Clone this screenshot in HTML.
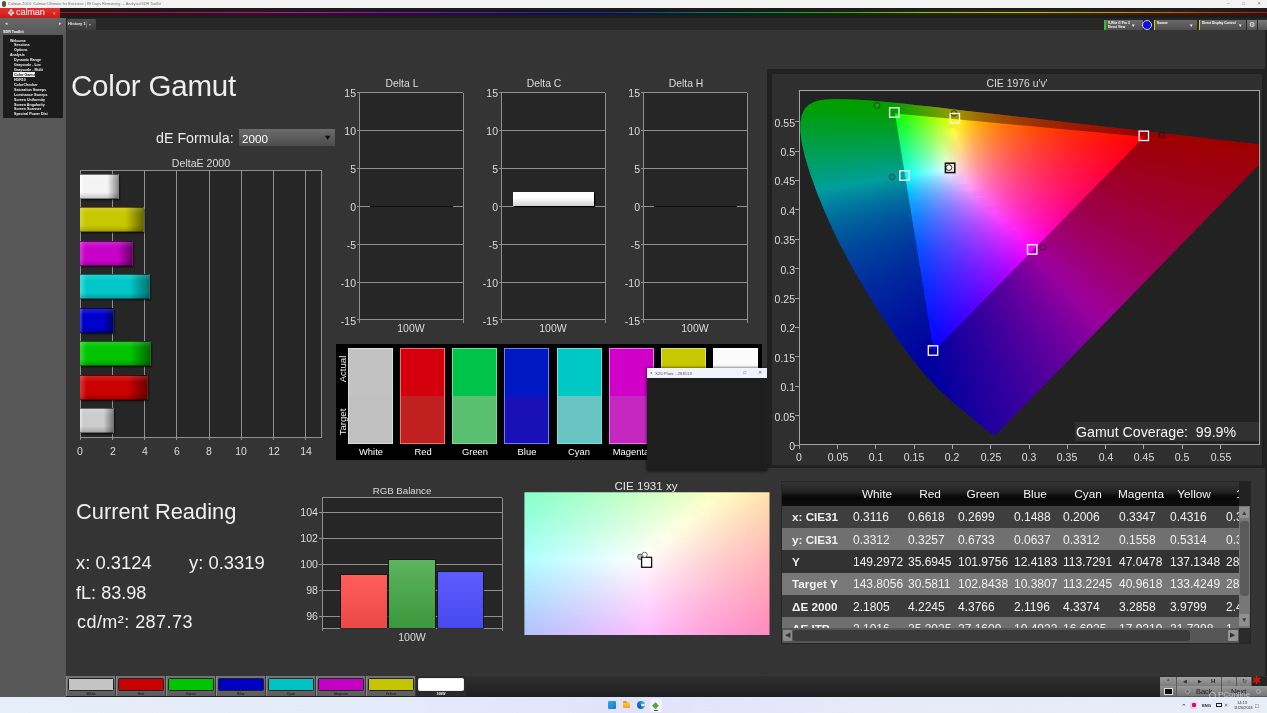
<!DOCTYPE html>
<html><head><meta charset="utf-8"><title>Color Gamut</title><style>
*{box-sizing:border-box;margin:0;padding:0}
html,body{width:1267px;height:713px;overflow:hidden;background:#343434}
body{position:relative;font-family:"Liberation Sans",sans-serif;color:#e8e8e8}
.abs,.t,.b{position:absolute}
.t,.ts{white-space:nowrap;line-height:1;transform-origin:0 0}
.t{will-change:transform}
.ts{position:absolute}
.c{transform:translateX(-50%)}
.r{transform:translateX(-100%)}
svg{overflow:visible}
</style></head><body>
<div class="b" style="left:0.0px;top:0.0px;width:1267.0px;height:8.0px;background:#f3f3f3;"></div>
<div class="b" style="left:1.6px;top:1.4px;width:4.2px;height:5.2px;background:#5a5040;border-radius:2px"></div>
<div class="ts" style="left:7.5px;top:1.9px;font-size:15.4px;color:#777;transform:scale(.25);">Calman 2024: Calman Ultimate for Business | 89 Days Remaining &nbsp;-&nbsp; Analysis/SDR Toolkit</div>
<div class="ts" style="left:1227.0px;top:0.3px;font-size:22.0px;color:#888;transform:scale(.25);">&#8211;</div>
<div class="ts" style="left:1241.5px;top:0.6px;font-size:20.0px;color:#888;transform:scale(.25);">&#9633;</div>
<div class="ts" style="left:1256.5px;top:0.8px;font-size:18.4px;color:#888;transform:scale(.25);">&#10005;</div>
<div class="b" style="left:0.0px;top:8.0px;width:1267.0px;height:10.0px;background:#1c1c1c;"></div>
<div class="b" style="left:60.0px;top:10.2px;width:1207.0px;height:5.0px;background:linear-gradient(90deg,#3a0a10 0%,#3a0a28 15%,#30083a 25%,#120a38 40%,#081828 50%,#082810 60%,#28300a 72%,#38300a 82%,#40200a 92%,#400a0a 100%);filter:blur(.6px);opacity:.55"></div>
<div class="b" style="left:60.0px;top:11.7px;width:1207.0px;height:1.5px;background:linear-gradient(90deg,#a01428 0%,#b01050 8%,#c010a0 20%,#8a10b0 29%,#3a20b0 38%,#10309a 45%,#0a6a70 52%,#109a30 59%,#30b010 65%,#a0c010 72%,#c8c010 80%,#c89010 88%,#c04010 95%,#b01818 100%);"></div>
<div class="b" style="left:0.0px;top:8.0px;width:60.0px;height:10.3px;background:linear-gradient(#e83030,#c81c1c);"></div>
<div class="t " style="left:6.8px;top:8.6px;font-size:8.6px;color:#ffe8e8;">&#10070;</div>
<div class="t " style="left:16.2px;top:8.1px;font-size:9.2px;color:#fff;letter-spacing:-.15px">calman</div>
<div class="ts" style="left:52.5px;top:10.5px;font-size:18.0px;color:#ff9a9a;transform:scale(.25);">&#9662;</div>
<div class="b" style="left:0.0px;top:18.3px;width:1267.0px;height:11.7px;background:#262626;"></div>
<div class="b" style="left:66.7px;top:19.2px;width:29.5px;height:10.8px;background:linear-gradient(#505050,#3a3a3a);border-radius:2px 2px 0 0"></div>
<div class="ts" style="left:68.2px;top:22.0px;font-size:16.8px;color:#eee;transform:scale(.25);font-weight:bold">History 1</div>
<div class="b" style="left:85.7px;top:21.0px;width:0.6px;height:7.0px;background:#777;"></div>
<div class="ts" style="left:88.5px;top:22.5px;font-size:14.0px;color:#aaa;transform:scale(.25);">&#9662;</div>
<div class="b" style="left:1104.0px;top:19.5px;width:39.0px;height:10.0px;background:linear-gradient(#6a6a6a,#4e4e4e);border-left:2px solid #30c030"></div>
<div class="ts" style="left:1107.8px;top:20.5px;font-size:12.8px;color:#fff;transform:scale(.25);font-weight:bold">X-Rite i1 Pro 2</div>
<div class="ts" style="left:1107.8px;top:25.2px;font-size:12.8px;color:#fff;transform:scale(.25);font-weight:bold">Direct View</div>
<div class="ts" style="left:1132.3px;top:22.5px;font-size:20.0px;color:#eee;transform:scale(.25);">&#9662;</div>
<div class="b" style="left:1141.5px;top:19.5px;width:10.5px;height:10.5px;border-radius:50%;background:#1010e0;border:1px solid #cfd0ff"></div>
<div class="b" style="left:1154.0px;top:19.5px;width:43.0px;height:10.0px;background:linear-gradient(#6a6a6a,#4e4e4e);border-left:1.5px solid #d0d020"></div>
<div class="ts" style="left:1157.0px;top:20.5px;font-size:12.8px;color:#fff;transform:scale(.25);font-weight:bold">Source</div>
<div class="ts" style="left:1190.0px;top:22.5px;font-size:20.0px;color:#eee;transform:scale(.25);">&#9662;</div>
<div class="b" style="left:1198.5px;top:19.5px;width:47.0px;height:10.0px;background:linear-gradient(#6a6a6a,#4e4e4e);border-left:1.5px solid #d0d020"></div>
<div class="ts" style="left:1202.0px;top:20.5px;font-size:12.8px;color:#fff;transform:scale(.25);font-weight:bold">Direct Display Control</div>
<div class="ts" style="left:1239.0px;top:22.5px;font-size:20.0px;color:#eee;transform:scale(.25);">&#9662;</div>
<div class="b" style="left:1247.0px;top:19.5px;width:10.0px;height:10.0px;background:linear-gradient(#7a7a7a,#555);"></div>
<div class="t " style="left:1249.0px;top:20.5px;font-size:7px;color:#eee;">&#9881;</div>
<div class="b" style="left:1258.0px;top:19.5px;width:9.0px;height:10.0px;background:linear-gradient(#7a7a7a,#555);"></div>
<div class="b" style="left:0.0px;top:18.3px;width:65.5px;height:678.4px;background:#575757;"></div>
<div class="b" style="left:0.0px;top:18.3px;width:65.5px;height:16.0px;background:linear-gradient(#686868,#585858);"></div>
<div class="ts" style="left:4.5px;top:21.2px;font-size:18.0px;color:#ddd;transform:scale(.25);">&#9666;</div>
<div class="ts" style="left:58.5px;top:21.2px;font-size:18.0px;color:#ddd;transform:scale(.25);">&#9656;</div>
<div class="ts" style="left:3.0px;top:30.4px;font-size:14.8px;color:#fff;transform:scale(.25);font-weight:bold">SDR Toolkit</div>
<div class="b" style="left:2.8px;top:35.0px;width:60.0px;height:82.6px;background:#1c1c1c;"></div>
<div class="ts" style="left:10.1px;top:38.5px;font-size:14.4px;color:#f4f4f4;transform:scale(.25);font-weight:bold">Welcome</div>
<div class="ts" style="left:13.9px;top:43.4px;font-size:14.4px;color:#f4f4f4;transform:scale(.25);font-weight:bold">Sessions</div>
<div class="ts" style="left:13.9px;top:48.3px;font-size:14.4px;color:#f4f4f4;transform:scale(.25);font-weight:bold">Options</div>
<div class="ts" style="left:10.1px;top:53.3px;font-size:14.4px;color:#f4f4f4;transform:scale(.25);font-weight:bold">Analysis</div>
<div class="ts" style="left:13.9px;top:58.2px;font-size:14.4px;color:#f4f4f4;transform:scale(.25);font-weight:bold">Dynamic Range</div>
<div class="ts" style="left:13.9px;top:63.1px;font-size:14.4px;color:#f4f4f4;transform:scale(.25);font-weight:bold">Grayscale - Lux</div>
<div class="ts" style="left:13.9px;top:68.0px;font-size:14.4px;color:#f4f4f4;transform:scale(.25);font-weight:bold">Grayscale - Multi</div>
<div class="b" style="left:13.1px;top:72.1px;width:21.7px;height:4.9px;background:#f0f0f0;"></div>
<div class="ts" style="left:13.9px;top:72.9px;font-size:14.4px;color:#1a1a1a;transform:scale(.25);font-weight:bold">Color Gamut</div>
<div class="ts" style="left:13.9px;top:77.9px;font-size:14.4px;color:#f4f4f4;transform:scale(.25);font-weight:bold">HDR10</div>
<div class="ts" style="left:13.9px;top:82.8px;font-size:14.4px;color:#f4f4f4;transform:scale(.25);font-weight:bold">ColorChecker</div>
<div class="ts" style="left:13.9px;top:87.7px;font-size:14.4px;color:#f4f4f4;transform:scale(.25);font-weight:bold">Saturation Sweeps</div>
<div class="ts" style="left:13.9px;top:92.6px;font-size:14.4px;color:#f4f4f4;transform:scale(.25);font-weight:bold">Luminance Sweeps</div>
<div class="ts" style="left:13.9px;top:97.5px;font-size:14.4px;color:#f4f4f4;transform:scale(.25);font-weight:bold">Screen Uniformity</div>
<div class="ts" style="left:13.9px;top:102.5px;font-size:14.4px;color:#f4f4f4;transform:scale(.25);font-weight:bold">Screen Angularity</div>
<div class="ts" style="left:13.9px;top:107.4px;font-size:14.4px;color:#f4f4f4;transform:scale(.25);font-weight:bold">Screen Scanner</div>
<div class="ts" style="left:13.9px;top:112.3px;font-size:14.4px;color:#f4f4f4;transform:scale(.25);font-weight:bold">Spectral Power Dist</div>
<div class="b" style="left:1265.3px;top:30.0px;width:1.7px;height:646.0px;background:#222;"></div>
<div class="t " style="left:71.3px;top:70.5px;font-size:29.5px;color:#eeeeee;letter-spacing:-.2px">Color Gamut</div>
<div class="t " style="left:155.6px;top:131.0px;font-size:14.25px;color:#ececec;">dE Formula:</div>
<div class="b" style="left:239.0px;top:129.0px;width:96.0px;height:16.6px;background:linear-gradient(#6c6c6c,#4c4c4c);"></div>
<div class="t " style="left:242.0px;top:133.2px;font-size:11.7px;color:#fff;">2000</div>
<div class="t " style="left:323.2px;top:133.8px;font-size:9.5px;color:#0c0c0c;transform:scaleY(.7)">&#9660;</div>
<div class="t c" style="left:201.0px;top:157.6px;font-size:10.6px;color:#dcdcdc;">DeltaE 2000</div>
<div class="b" style="left:80.3px;top:170.2px;width:241.6px;height:267.1px;background:#262626;"></div>
<div class="b" style="left:79.8px;top:170.2px;width:1.0px;height:270.1px;background:#909090;"></div>
<div class="t c" style="left:80.3px;top:445.6px;font-size:10.5px;color:#dcdcdc;">0</div>
<div class="b" style="left:112.0px;top:170.2px;width:1.0px;height:270.1px;background:#909090;"></div>
<div class="t c" style="left:112.5px;top:445.6px;font-size:10.5px;color:#dcdcdc;">2</div>
<div class="b" style="left:144.2px;top:170.2px;width:1.0px;height:270.1px;background:#909090;"></div>
<div class="t c" style="left:144.7px;top:445.6px;font-size:10.5px;color:#dcdcdc;">4</div>
<div class="b" style="left:176.4px;top:170.2px;width:1.0px;height:270.1px;background:#909090;"></div>
<div class="t c" style="left:176.9px;top:445.6px;font-size:10.5px;color:#dcdcdc;">6</div>
<div class="b" style="left:208.6px;top:170.2px;width:1.0px;height:270.1px;background:#909090;"></div>
<div class="t c" style="left:209.1px;top:445.6px;font-size:10.5px;color:#dcdcdc;">8</div>
<div class="b" style="left:240.8px;top:170.2px;width:1.0px;height:270.1px;background:#909090;"></div>
<div class="t c" style="left:241.3px;top:445.6px;font-size:10.5px;color:#dcdcdc;">10</div>
<div class="b" style="left:273.0px;top:170.2px;width:1.0px;height:270.1px;background:#909090;"></div>
<div class="t c" style="left:273.5px;top:445.6px;font-size:10.5px;color:#dcdcdc;">12</div>
<div class="b" style="left:305.2px;top:170.2px;width:1.0px;height:270.1px;background:#909090;"></div>
<div class="t c" style="left:305.7px;top:445.6px;font-size:10.5px;color:#dcdcdc;">14</div>
<div class="b" style="left:80.3px;top:169.7px;width:241.6px;height:1.0px;background:#909090;"></div>
<div class="b" style="left:80.3px;top:436.8px;width:241.6px;height:1.0px;background:#909090;"></div>
<div class="b" style="left:321.4px;top:170.2px;width:1.0px;height:267.1px;background:#909090;"></div>
<div class="b" style="left:80.3px;top:173.6px;width:39.0px;height:25px;background:linear-gradient(90deg,#ffffff 0%,#f4f4f4 10%,#f4f4f4 72%,#8a8a8a 100%);border:1px solid rgba(0,0,0,.5);border-left:none;box-shadow:1px 1.5px 1.5px rgba(0,0,0,.6)"><div style="position:absolute;inset:0;background:linear-gradient(rgba(255,255,255,.14),rgba(255,255,255,0) 25%,rgba(0,0,0,0) 75%,rgba(0,0,0,.18))"></div></div>
<div class="b" style="left:80.3px;top:207.1px;width:64.1px;height:25px;background:linear-gradient(90deg,#d4d430 0%,#c8c800 10%,#c8c800 72%,#6a6a00 100%);border:1px solid rgba(0,0,0,.5);border-left:none;box-shadow:1px 1.5px 1.5px rgba(0,0,0,.6)"><div style="position:absolute;inset:0;background:linear-gradient(rgba(255,255,255,.14),rgba(255,255,255,0) 25%,rgba(0,0,0,0) 75%,rgba(0,0,0,.18))"></div></div>
<div class="b" style="left:80.3px;top:240.7px;width:53.0px;height:25px;background:linear-gradient(90deg,#d838d8 0%,#c800c8 10%,#c800c8 72%,#6c006c 100%);border:1px solid rgba(0,0,0,.5);border-left:none;box-shadow:1px 1.5px 1.5px rgba(0,0,0,.6)"><div style="position:absolute;inset:0;background:linear-gradient(rgba(255,255,255,.14),rgba(255,255,255,0) 25%,rgba(0,0,0,0) 75%,rgba(0,0,0,.18))"></div></div>
<div class="b" style="left:80.3px;top:274.2px;width:69.9px;height:25px;background:linear-gradient(90deg,#40dcdc 0%,#00c8c8 10%,#00c8c8 72%,#007474 100%);border:1px solid rgba(0,0,0,.5);border-left:none;box-shadow:1px 1.5px 1.5px rgba(0,0,0,.6)"><div style="position:absolute;inset:0;background:linear-gradient(rgba(255,255,255,.14),rgba(255,255,255,0) 25%,rgba(0,0,0,0) 75%,rgba(0,0,0,.18))"></div></div>
<div class="b" style="left:80.3px;top:307.8px;width:34.1px;height:25px;background:linear-gradient(90deg,#4848e0 0%,#0000cc 10%,#0000cc 72%,#00006c 100%);border:1px solid rgba(0,0,0,.5);border-left:none;box-shadow:1px 1.5px 1.5px rgba(0,0,0,.6)"><div style="position:absolute;inset:0;background:linear-gradient(rgba(255,255,255,.14),rgba(255,255,255,0) 25%,rgba(0,0,0,0) 75%,rgba(0,0,0,.18))"></div></div>
<div class="b" style="left:80.3px;top:341.4px;width:70.5px;height:25px;background:linear-gradient(90deg,#38d838 0%,#00c400 10%,#00c400 72%,#006a00 100%);border:1px solid rgba(0,0,0,.5);border-left:none;box-shadow:1px 1.5px 1.5px rgba(0,0,0,.6)"><div style="position:absolute;inset:0;background:linear-gradient(rgba(255,255,255,.14),rgba(255,255,255,0) 25%,rgba(0,0,0,0) 75%,rgba(0,0,0,.18))"></div></div>
<div class="b" style="left:80.3px;top:374.9px;width:67.9px;height:25px;background:linear-gradient(90deg,#dc3838 0%,#cc0000 10%,#cc0000 72%,#6c0000 100%);border:1px solid rgba(0,0,0,.5);border-left:none;box-shadow:1px 1.5px 1.5px rgba(0,0,0,.6)"><div style="position:absolute;inset:0;background:linear-gradient(rgba(255,255,255,.14),rgba(255,255,255,0) 25%,rgba(0,0,0,0) 75%,rgba(0,0,0,.18))"></div></div>
<div class="b" style="left:80.3px;top:408.4px;width:34.1px;height:25px;background:linear-gradient(90deg,#e8e8e8 0%,#cccccc 10%,#cccccc 72%,#7a7a7a 100%);border:1px solid rgba(0,0,0,.5);border-left:none;box-shadow:1px 1.5px 1.5px rgba(0,0,0,.6)"><div style="position:absolute;inset:0;background:linear-gradient(rgba(255,255,255,.14),rgba(255,255,255,0) 25%,rgba(0,0,0,0) 75%,rgba(0,0,0,.18))"></div></div>
<div class="b" style="left:359.5px;top:92.7px;width:103.8px;height:227.2px;background:#262626;"></div>
<div class="t c" style="left:402.4px;top:79.0px;font-size:10.4px;color:#dcdcdc;">Delta L</div>
<div class="b" style="left:356.5px;top:92.2px;width:106.8px;height:1.0px;background:#909090;"></div>
<div class="t r" style="left:355.5px;top:88.3px;font-size:10.5px;color:#dcdcdc;">15</div>
<div class="b" style="left:356.5px;top:130.1px;width:106.8px;height:1.0px;background:#909090;"></div>
<div class="t r" style="left:355.5px;top:126.2px;font-size:10.5px;color:#dcdcdc;">10</div>
<div class="b" style="left:356.5px;top:167.9px;width:106.8px;height:1.0px;background:#909090;"></div>
<div class="t r" style="left:355.5px;top:164.0px;font-size:10.5px;color:#dcdcdc;">5</div>
<div class="b" style="left:356.5px;top:205.8px;width:106.8px;height:1.0px;background:#909090;"></div>
<div class="t r" style="left:355.5px;top:201.9px;font-size:10.5px;color:#dcdcdc;">0</div>
<div class="b" style="left:356.5px;top:243.7px;width:106.8px;height:1.0px;background:#909090;"></div>
<div class="t r" style="left:355.5px;top:239.8px;font-size:10.5px;color:#dcdcdc;">-5</div>
<div class="b" style="left:356.5px;top:281.5px;width:106.8px;height:1.0px;background:#909090;"></div>
<div class="t r" style="left:355.5px;top:277.6px;font-size:10.5px;color:#dcdcdc;">-10</div>
<div class="b" style="left:356.5px;top:319.4px;width:106.8px;height:1.0px;background:#909090;"></div>
<div class="t r" style="left:355.5px;top:315.5px;font-size:10.5px;color:#dcdcdc;">-15</div>
<div class="b" style="left:359.0px;top:92.7px;width:1.0px;height:230.2px;background:#909090;"></div>
<div class="b" style="left:462.8px;top:92.7px;width:1.0px;height:230.2px;background:#909090;"></div>
<div class="t c" style="left:411.4px;top:323.0px;font-size:10.5px;color:#dcdcdc;">100W</div>
<div class="b" style="left:369.8px;top:205.6px;width:83.2px;height:1.6px;background:#0c0c0c;"></div>
<div class="b" style="left:501.5px;top:92.7px;width:103.8px;height:227.2px;background:#262626;"></div>
<div class="t c" style="left:544.4px;top:79.0px;font-size:10.4px;color:#dcdcdc;">Delta C</div>
<div class="b" style="left:498.5px;top:92.2px;width:106.8px;height:1.0px;background:#909090;"></div>
<div class="t r" style="left:497.5px;top:88.3px;font-size:10.5px;color:#dcdcdc;">15</div>
<div class="b" style="left:498.5px;top:130.1px;width:106.8px;height:1.0px;background:#909090;"></div>
<div class="t r" style="left:497.5px;top:126.2px;font-size:10.5px;color:#dcdcdc;">10</div>
<div class="b" style="left:498.5px;top:167.9px;width:106.8px;height:1.0px;background:#909090;"></div>
<div class="t r" style="left:497.5px;top:164.0px;font-size:10.5px;color:#dcdcdc;">5</div>
<div class="b" style="left:498.5px;top:205.8px;width:106.8px;height:1.0px;background:#909090;"></div>
<div class="t r" style="left:497.5px;top:201.9px;font-size:10.5px;color:#dcdcdc;">0</div>
<div class="b" style="left:498.5px;top:243.7px;width:106.8px;height:1.0px;background:#909090;"></div>
<div class="t r" style="left:497.5px;top:239.8px;font-size:10.5px;color:#dcdcdc;">-5</div>
<div class="b" style="left:498.5px;top:281.5px;width:106.8px;height:1.0px;background:#909090;"></div>
<div class="t r" style="left:497.5px;top:277.6px;font-size:10.5px;color:#dcdcdc;">-10</div>
<div class="b" style="left:498.5px;top:319.4px;width:106.8px;height:1.0px;background:#909090;"></div>
<div class="t r" style="left:497.5px;top:315.5px;font-size:10.5px;color:#dcdcdc;">-15</div>
<div class="b" style="left:501.0px;top:92.7px;width:1.0px;height:230.2px;background:#909090;"></div>
<div class="b" style="left:604.8px;top:92.7px;width:1.0px;height:230.2px;background:#909090;"></div>
<div class="t c" style="left:553.4px;top:323.0px;font-size:10.5px;color:#dcdcdc;">100W</div>
<div class="b" style="left:512.9px;top:191.9px;width:81px;height:14.4px;background:linear-gradient(#fff 40%,#d0d0d0);box-shadow:1px 1px 1px #000"></div>
<div class="b" style="left:643.5px;top:92.7px;width:103.8px;height:227.2px;background:#262626;"></div>
<div class="t c" style="left:686.4px;top:79.0px;font-size:10.4px;color:#dcdcdc;">Delta H</div>
<div class="b" style="left:640.5px;top:92.2px;width:106.8px;height:1.0px;background:#909090;"></div>
<div class="t r" style="left:639.5px;top:88.3px;font-size:10.5px;color:#dcdcdc;">15</div>
<div class="b" style="left:640.5px;top:130.1px;width:106.8px;height:1.0px;background:#909090;"></div>
<div class="t r" style="left:639.5px;top:126.2px;font-size:10.5px;color:#dcdcdc;">10</div>
<div class="b" style="left:640.5px;top:167.9px;width:106.8px;height:1.0px;background:#909090;"></div>
<div class="t r" style="left:639.5px;top:164.0px;font-size:10.5px;color:#dcdcdc;">5</div>
<div class="b" style="left:640.5px;top:205.8px;width:106.8px;height:1.0px;background:#909090;"></div>
<div class="t r" style="left:639.5px;top:201.9px;font-size:10.5px;color:#dcdcdc;">0</div>
<div class="b" style="left:640.5px;top:243.7px;width:106.8px;height:1.0px;background:#909090;"></div>
<div class="t r" style="left:639.5px;top:239.8px;font-size:10.5px;color:#dcdcdc;">-5</div>
<div class="b" style="left:640.5px;top:281.5px;width:106.8px;height:1.0px;background:#909090;"></div>
<div class="t r" style="left:639.5px;top:277.6px;font-size:10.5px;color:#dcdcdc;">-10</div>
<div class="b" style="left:640.5px;top:319.4px;width:106.8px;height:1.0px;background:#909090;"></div>
<div class="t r" style="left:639.5px;top:315.5px;font-size:10.5px;color:#dcdcdc;">-15</div>
<div class="b" style="left:643.0px;top:92.7px;width:1.0px;height:230.2px;background:#909090;"></div>
<div class="b" style="left:746.8px;top:92.7px;width:1.0px;height:230.2px;background:#909090;"></div>
<div class="t c" style="left:695.4px;top:323.0px;font-size:10.5px;color:#dcdcdc;">100W</div>
<div class="b" style="left:653.8px;top:205.6px;width:83.2px;height:1.6px;background:#0c0c0c;"></div>
<div class="b" style="left:336.4px;top:343.9px;width:425.3px;height:116.1px;background:#000;"></div>
<div class="b" style="left:348.0px;top:348.3px;width:45px;height:95.8px;background:linear-gradient(#c2c2c2 50%,#c0c0c0 50%);border:1px solid #dcdcdc"></div>
<div class="t c" style="left:370.5px;top:447.2px;font-size:9.4px;color:#ffffff;">White</div>
<div class="b" style="left:400.1px;top:348.3px;width:45px;height:95.8px;background:linear-gradient(#d4000e 50%,#c02020 50%);border:1px solid #f07070"></div>
<div class="t c" style="left:422.6px;top:447.2px;font-size:9.4px;color:#ffffff;">Red</div>
<div class="b" style="left:452.3px;top:348.3px;width:45px;height:95.8px;background:linear-gradient(#00c44a 50%,#58c070 50%);border:1px solid #70e090"></div>
<div class="t c" style="left:474.8px;top:447.2px;font-size:9.4px;color:#ffffff;">Green</div>
<div class="b" style="left:504.4px;top:348.3px;width:45px;height:95.8px;background:linear-gradient(#0018c4 50%,#1a10b8 50%);border:1px solid #7080f0"></div>
<div class="t c" style="left:527.0px;top:447.2px;font-size:9.4px;color:#ffffff;">Blue</div>
<div class="b" style="left:556.6px;top:348.3px;width:45px;height:95.8px;background:linear-gradient(#00c8c4 50%,#68c4c0 50%);border:1px solid #70e0e0"></div>
<div class="t c" style="left:579.1px;top:447.2px;font-size:9.4px;color:#ffffff;">Cyan</div>
<div class="b" style="left:608.8px;top:348.3px;width:45px;height:95.8px;background:linear-gradient(#d000c8 50%,#c428c0 50%);border:1px solid #f070f0"></div>
<div class="t c" style="left:631.2px;top:447.2px;font-size:9.4px;color:#ffffff;">Magenta</div>
<div class="b" style="left:660.9px;top:348.3px;width:45px;height:95.8px;background:linear-gradient(#c8c800 50%,#c0c040 50%);border:1px solid #e0e070"></div>
<div class="t c" style="left:683.4px;top:447.2px;font-size:9.4px;color:#ffffff;">Yellow</div>
<div class="b" style="left:713.0px;top:348.3px;width:45px;height:95.8px;background:linear-gradient(#fbfbfb 50%,#f0f0f0 50%);border:1px solid #ffffff"></div>
<div class="t c" style="left:735.5px;top:447.2px;font-size:9.4px;color:#ffffff;">100W</div>
<div class="t" style="left:337.5px;top:384.5px;font-size:9.6px;color:#f0f0f0;transform:rotate(-90deg);transform-origin:0 0;width:32px;text-align:center">Actual</div>
<div class="t" style="left:337.5px;top:438px;font-size:9.6px;color:#f0f0f0;transform:rotate(-90deg);transform-origin:0 0;width:32px;text-align:center">Target</div>
<div class="b" style="left:647.0px;top:367.5px;width:120.0px;height:103.2px;background:#1e1e1e;box-shadow:0 0 3px rgba(0,0,0,.8)"></div>
<div class="b" style="left:647.0px;top:367.5px;width:120.0px;height:10.2px;background:#f0f3fa;"></div>
<div class="ts" style="left:650.0px;top:370.8px;font-size:16.0px;color:#6a8a30;transform:scale(.25);">&#9679;</div>
<div class="ts" style="left:655.0px;top:370.8px;font-size:17.2px;color:#555;transform:scale(.25);">X20 Plate - 283513</div>
<div class="ts" style="left:742.5px;top:370.0px;font-size:20.0px;color:#555;transform:scale(.25);">&#9633;</div>
<div class="ts" style="left:757.5px;top:370.0px;font-size:20.0px;color:#666;transform:scale(.25);">&#10005;</div>
<div class="b" style="left:766.5px;top:68.8px;width:499.0px;height:399.5px;background:#202020;"></div>
<div class="b" style="left:771.7px;top:73.6px;width:490.5px;height:391.8px;background:#2f2f2f;"></div>
<div class="t c" style="left:1017.0px;top:79.2px;font-size:10.4px;color:#dcdcdc;">CIE 1976 u'v'</div>
<div class="b" style="left:799.2px;top:90.3px;width:460.4px;height:353.9px;background:#222;"></div>
<svg class="abs" style="left:0;top:0" width="1267" height="713" viewBox="0 0 1267 713">
<defs>
<clipPath id="plot"><rect x="799.2" y="90.3" width="460.39999999999986" height="353.9"/></clipPath>
<clipPath id="hs"><polygon points="996.0,434.5 995.9,434.5 995.8,434.5 995.7,434.6 995.5,434.6 995.3,434.6 995.2,434.8 995.1,434.9 994.8,434.9 994.5,434.9 994.1,434.8 993.8,434.8 993.3,434.7 992.7,434.4 991.7,433.8 990.4,433.0 988.9,431.8 987.0,430.4 984.7,428.5 982.1,426.3 979.0,423.7 975.5,420.7 971.3,417.3 966.5,413.3 961.0,408.8 954.9,403.7 948.0,397.6 940.3,390.5 931.8,381.8 921.6,370.4 909.6,355.4 896.4,337.6 882.2,316.7 867.5,293.2 852.9,268.2 839.1,242.7 827.4,217.8 817.8,194.7 810.3,174.1 805.0,156.7 801.8,142.5 800.4,131.1 800.5,122.0 802.0,114.7 804.7,109.1 808.6,104.9 813.4,102.2 818.8,100.6 824.7,99.7 831.0,99.3 837.6,99.2 844.1,99.2 850.7,99.4 857.5,99.7 864.7,100.2 872.2,100.7 880.0,101.4 888.4,102.2 897.2,103.1 906.5,104.1 916.5,105.2 927.1,106.3 938.3,107.6 950.2,108.9 962.9,110.4 976.3,111.9 990.4,113.5 1005.2,115.2 1020.6,117.0 1036.6,118.8 1053.1,120.7 1070.0,122.7 1086.7,124.6 1102.9,126.5 1119.0,128.3 1134.7,130.1 1149.3,131.8 1163.0,133.3 1175.7,134.8 1187.3,136.1 1197.7,137.3 1207.1,138.4 1215.5,139.4 1223.1,140.2 1230.1,141.0 1236.5,141.8 1242.3,142.4 1247.5,143.0 1252.0,143.5 1255.9,144.0 1259.2,144.4 1262.0,144.7 1264.4,145.0 1266.5,145.2 1268.1,145.4 1269.3,145.5 1270.5,145.7 1271.5,145.8 1272.4,145.9 1273.2,146.0 1274.1,146.1 1274.9,146.2 1275.6,146.3 1276.0,146.3 1276.3,146.3 1276.5,146.4 1276.7,146.4"/></clipPath>
<linearGradient id="g0"><stop offset="0" stop-color="#00ff00"/><stop offset="0.333" stop-color="#00ff00"/><stop offset="0.667" stop-color="#00ff00"/><stop offset="1" stop-color="#00ff00"/></linearGradient>
<linearGradient id="g1"><stop offset="0" stop-color="#00ff00"/><stop offset="0.2" stop-color="#00ff00"/><stop offset="0.4" stop-color="#00ff00"/><stop offset="0.6" stop-color="#00ff00"/><stop offset="0.8" stop-color="#00ff00"/><stop offset="1" stop-color="#00ff00"/></linearGradient>
<linearGradient id="g2"><stop offset="0" stop-color="#00ff00"/><stop offset="0.143" stop-color="#00ff00"/><stop offset="0.286" stop-color="#00ff00"/><stop offset="0.429" stop-color="#00ff00"/><stop offset="0.571" stop-color="#00ff00"/><stop offset="0.714" stop-color="#00ff00"/><stop offset="0.857" stop-color="#03ff00"/><stop offset="1" stop-color="#3cff00"/></linearGradient>
<linearGradient id="g3"><stop offset="0" stop-color="#00ff00"/><stop offset="0.125" stop-color="#00ff00"/><stop offset="0.25" stop-color="#00ff00"/><stop offset="0.375" stop-color="#00ff00"/><stop offset="0.5" stop-color="#00ff00"/><stop offset="0.625" stop-color="#00ff00"/><stop offset="0.75" stop-color="#0cff00"/><stop offset="0.875" stop-color="#47ff00"/><stop offset="1" stop-color="#7fff00"/></linearGradient>
<linearGradient id="g4"><stop offset="0" stop-color="#00ff08"/><stop offset="0.111" stop-color="#00ff03"/><stop offset="0.222" stop-color="#00ff00"/><stop offset="0.333" stop-color="#00ff00"/><stop offset="0.444" stop-color="#00ff00"/><stop offset="0.556" stop-color="#00ff00"/><stop offset="0.667" stop-color="#11ff00"/><stop offset="0.778" stop-color="#4dff00"/><stop offset="0.889" stop-color="#89ff00"/><stop offset="1" stop-color="#c8ff00"/></linearGradient>
<linearGradient id="g5"><stop offset="0" stop-color="#00ff0e"/><stop offset="0.1" stop-color="#00ff0a"/><stop offset="0.2" stop-color="#00ff05"/><stop offset="0.3" stop-color="#00ff00"/><stop offset="0.4" stop-color="#00ff00"/><stop offset="0.5" stop-color="#00ff00"/><stop offset="0.6" stop-color="#12ff00"/><stop offset="0.7" stop-color="#51ff00"/><stop offset="0.8" stop-color="#8fff00"/><stop offset="0.9" stop-color="#d1ff00"/><stop offset="1" stop-color="#ffe700"/></linearGradient>
<linearGradient id="g6"><stop offset="0" stop-color="#00ff15"/><stop offset="0.0833" stop-color="#00ff11"/><stop offset="0.167" stop-color="#00ff0d"/><stop offset="0.25" stop-color="#00ff09"/><stop offset="0.333" stop-color="#00ff04"/><stop offset="0.417" stop-color="#00ff00"/><stop offset="0.5" stop-color="#00ff00"/><stop offset="0.583" stop-color="#2dff00"/><stop offset="0.667" stop-color="#66ff00"/><stop offset="0.75" stop-color="#a1ff00"/><stop offset="0.833" stop-color="#e0ff00"/><stop offset="0.917" stop-color="#ffde00"/><stop offset="1" stop-color="#ffb000"/></linearGradient>
<linearGradient id="g7"><stop offset="0" stop-color="#00ff1a"/><stop offset="0.0769" stop-color="#00ff17"/><stop offset="0.154" stop-color="#00ff14"/><stop offset="0.231" stop-color="#00ff10"/><stop offset="0.308" stop-color="#00ff0c"/><stop offset="0.385" stop-color="#00ff06"/><stop offset="0.462" stop-color="#00ff00"/><stop offset="0.538" stop-color="#32ff00"/><stop offset="0.615" stop-color="#6dff00"/><stop offset="0.692" stop-color="#aaff00"/><stop offset="0.769" stop-color="#ecff00"/><stop offset="0.846" stop-color="#ffd300"/><stop offset="0.923" stop-color="#ffa700"/><stop offset="1" stop-color="#ff8700"/></linearGradient>
<linearGradient id="g8"><stop offset="0" stop-color="#00ff20"/><stop offset="0.0714" stop-color="#00ff1d"/><stop offset="0.143" stop-color="#00ff1a"/><stop offset="0.214" stop-color="#00ff17"/><stop offset="0.286" stop-color="#00ff13"/><stop offset="0.357" stop-color="#00ff0e"/><stop offset="0.429" stop-color="#00ff09"/><stop offset="0.5" stop-color="#33ff03"/><stop offset="0.571" stop-color="#6fff00"/><stop offset="0.643" stop-color="#aeff00"/><stop offset="0.714" stop-color="#f1ff00"/><stop offset="0.786" stop-color="#ffce00"/><stop offset="0.857" stop-color="#ffa300"/><stop offset="0.929" stop-color="#ff8300"/><stop offset="1" stop-color="#ff6b00"/></linearGradient>
<linearGradient id="g9"><stop offset="0" stop-color="#00ff26"/><stop offset="0.0667" stop-color="#00ff23"/><stop offset="0.133" stop-color="#00ff20"/><stop offset="0.2" stop-color="#00ff1d"/><stop offset="0.267" stop-color="#00ff1a"/><stop offset="0.333" stop-color="#00ff16"/><stop offset="0.4" stop-color="#00ff11"/><stop offset="0.467" stop-color="#35ff0c"/><stop offset="0.533" stop-color="#73ff06"/><stop offset="0.6" stop-color="#b3ff00"/><stop offset="0.667" stop-color="#f9ff00"/><stop offset="0.733" stop-color="#ffc700"/><stop offset="0.8" stop-color="#ff9d00"/><stop offset="0.867" stop-color="#ff7e00"/><stop offset="0.933" stop-color="#ff6700"/><stop offset="1" stop-color="#ff5400"/></linearGradient>
<linearGradient id="g10"><stop offset="0" stop-color="#00ff2b"/><stop offset="0.0625" stop-color="#00ff29"/><stop offset="0.125" stop-color="#00ff26"/><stop offset="0.188" stop-color="#00ff24"/><stop offset="0.25" stop-color="#00ff20"/><stop offset="0.312" stop-color="#00ff1d"/><stop offset="0.375" stop-color="#00ff19"/><stop offset="0.438" stop-color="#37ff14"/><stop offset="0.5" stop-color="#75ff0f"/><stop offset="0.562" stop-color="#b7ff09"/><stop offset="0.625" stop-color="#feff00"/><stop offset="0.688" stop-color="#ffc300"/><stop offset="0.75" stop-color="#ff9a00"/><stop offset="0.812" stop-color="#ff7b00"/><stop offset="0.875" stop-color="#ff6400"/><stop offset="0.938" stop-color="#ff5200"/><stop offset="1" stop-color="#ff4200"/></linearGradient>
<linearGradient id="g11"><stop offset="0" stop-color="#00ff30"/><stop offset="0.0588" stop-color="#00ff2e"/><stop offset="0.118" stop-color="#00ff2c"/><stop offset="0.176" stop-color="#00ff2a"/><stop offset="0.235" stop-color="#00ff27"/><stop offset="0.294" stop-color="#00ff24"/><stop offset="0.353" stop-color="#00ff20"/><stop offset="0.412" stop-color="#38ff1c"/><stop offset="0.471" stop-color="#78ff18"/><stop offset="0.529" stop-color="#baff12"/><stop offset="0.588" stop-color="#fffb0c"/><stop offset="0.647" stop-color="#ffbf02"/><stop offset="0.706" stop-color="#ff9600"/><stop offset="0.765" stop-color="#ff7900"/><stop offset="0.824" stop-color="#ff6200"/><stop offset="0.882" stop-color="#ff4f00"/><stop offset="0.941" stop-color="#ff4000"/><stop offset="1" stop-color="#ff3400"/></linearGradient>
<linearGradient id="g12"><stop offset="0" stop-color="#00ff36"/><stop offset="0.0556" stop-color="#00ff34"/><stop offset="0.111" stop-color="#00ff32"/><stop offset="0.167" stop-color="#00ff30"/><stop offset="0.222" stop-color="#00ff2d"/><stop offset="0.278" stop-color="#00ff2b"/><stop offset="0.333" stop-color="#00ff28"/><stop offset="0.389" stop-color="#3bff24"/><stop offset="0.444" stop-color="#7cff20"/><stop offset="0.5" stop-color="#c0ff1c"/><stop offset="0.556" stop-color="#fff415"/><stop offset="0.611" stop-color="#ffba0b"/><stop offset="0.667" stop-color="#ff9204"/><stop offset="0.722" stop-color="#ff7500"/><stop offset="0.778" stop-color="#ff5e00"/><stop offset="0.833" stop-color="#ff4c00"/><stop offset="0.889" stop-color="#ff3e00"/><stop offset="0.944" stop-color="#ff3100"/><stop offset="1" stop-color="#ff2700"/></linearGradient>
<linearGradient id="g13"><stop offset="0" stop-color="#00ff3b"/><stop offset="0.0526" stop-color="#00ff39"/><stop offset="0.105" stop-color="#00ff38"/><stop offset="0.158" stop-color="#00ff36"/><stop offset="0.211" stop-color="#00ff34"/><stop offset="0.263" stop-color="#00ff32"/><stop offset="0.316" stop-color="#00ff2f"/><stop offset="0.368" stop-color="#3cff2c"/><stop offset="0.421" stop-color="#7dff29"/><stop offset="0.474" stop-color="#c3ff25"/><stop offset="0.526" stop-color="#fff11e"/><stop offset="0.579" stop-color="#ffb713"/><stop offset="0.632" stop-color="#ff900b"/><stop offset="0.684" stop-color="#ff7305"/><stop offset="0.737" stop-color="#ff5c00"/><stop offset="0.789" stop-color="#ff4b00"/><stop offset="0.842" stop-color="#ff3c00"/><stop offset="0.895" stop-color="#ff3000"/><stop offset="0.947" stop-color="#ff2500"/><stop offset="1" stop-color="#ff1c00"/></linearGradient>
<linearGradient id="g14"><stop offset="0" stop-color="#00ff40"/><stop offset="0.05" stop-color="#00ff3f"/><stop offset="0.1" stop-color="#00ff3e"/><stop offset="0.15" stop-color="#00ff3c"/><stop offset="0.2" stop-color="#00ff3a"/><stop offset="0.25" stop-color="#00ff39"/><stop offset="0.3" stop-color="#00ff36"/><stop offset="0.35" stop-color="#3eff34"/><stop offset="0.4" stop-color="#81ff31"/><stop offset="0.45" stop-color="#c7ff2e"/><stop offset="0.5" stop-color="#ffeb27"/><stop offset="0.55" stop-color="#ffb31a"/><stop offset="0.6" stop-color="#ff8c11"/><stop offset="0.65" stop-color="#ff700b"/><stop offset="0.7" stop-color="#ff5a05"/><stop offset="0.75" stop-color="#ff4800"/><stop offset="0.8" stop-color="#ff3a00"/><stop offset="0.85" stop-color="#ff2e00"/><stop offset="0.9" stop-color="#ff2300"/><stop offset="0.95" stop-color="#ff1a00"/><stop offset="1" stop-color="#ff1100"/></linearGradient>
<linearGradient id="g15"><stop offset="0" stop-color="#00ff46"/><stop offset="0.0455" stop-color="#00ff45"/><stop offset="0.0909" stop-color="#00ff44"/><stop offset="0.136" stop-color="#00ff42"/><stop offset="0.182" stop-color="#00ff41"/><stop offset="0.227" stop-color="#00ff40"/><stop offset="0.273" stop-color="#00ff3e"/><stop offset="0.318" stop-color="#29ff3c"/><stop offset="0.364" stop-color="#69ff3a"/><stop offset="0.409" stop-color="#acff38"/><stop offset="0.455" stop-color="#f4ff35"/><stop offset="0.5" stop-color="#ffc927"/><stop offset="0.545" stop-color="#ff9d1c"/><stop offset="0.591" stop-color="#ff7d14"/><stop offset="0.636" stop-color="#ff650e"/><stop offset="0.682" stop-color="#ff5209"/><stop offset="0.727" stop-color="#ff4205"/><stop offset="0.773" stop-color="#ff3501"/><stop offset="0.818" stop-color="#ff2a00"/><stop offset="0.864" stop-color="#ff2000"/><stop offset="0.909" stop-color="#ff1800"/><stop offset="0.955" stop-color="#ff1000"/><stop offset="1" stop-color="#ff0800"/></linearGradient>
<linearGradient id="g16"><stop offset="0" stop-color="#00ff4b"/><stop offset="0.0435" stop-color="#00ff4a"/><stop offset="0.087" stop-color="#00ff49"/><stop offset="0.13" stop-color="#00ff48"/><stop offset="0.174" stop-color="#00ff48"/><stop offset="0.217" stop-color="#00ff46"/><stop offset="0.261" stop-color="#00ff45"/><stop offset="0.304" stop-color="#2cff44"/><stop offset="0.348" stop-color="#6dff42"/><stop offset="0.391" stop-color="#b1ff41"/><stop offset="0.435" stop-color="#faff3f"/><stop offset="0.478" stop-color="#ffc42e"/><stop offset="0.522" stop-color="#ff9922"/><stop offset="0.565" stop-color="#ff791a"/><stop offset="0.609" stop-color="#ff6213"/><stop offset="0.652" stop-color="#ff4f0e"/><stop offset="0.696" stop-color="#ff4009"/><stop offset="0.739" stop-color="#ff3305"/><stop offset="0.783" stop-color="#ff2802"/><stop offset="0.826" stop-color="#ff1e00"/><stop offset="0.87" stop-color="#ff1600"/><stop offset="0.913" stop-color="#ff0e00"/><stop offset="0.957" stop-color="#ff0600"/><stop offset="1" stop-color="#ff0000"/></linearGradient>
<linearGradient id="g17"><stop offset="0" stop-color="#00ff50"/><stop offset="0.0417" stop-color="#00ff50"/><stop offset="0.0833" stop-color="#00ff4f"/><stop offset="0.125" stop-color="#00ff4f"/><stop offset="0.167" stop-color="#00ff4e"/><stop offset="0.208" stop-color="#00ff4d"/><stop offset="0.25" stop-color="#00ff4c"/><stop offset="0.292" stop-color="#2dff4c"/><stop offset="0.333" stop-color="#6fff4b"/><stop offset="0.375" stop-color="#b3ff49"/><stop offset="0.417" stop-color="#feff48"/><stop offset="0.458" stop-color="#ffc035"/><stop offset="0.5" stop-color="#ff9628"/><stop offset="0.542" stop-color="#ff771f"/><stop offset="0.583" stop-color="#ff6018"/><stop offset="0.625" stop-color="#ff4d12"/><stop offset="0.667" stop-color="#ff3e0d"/><stop offset="0.708" stop-color="#ff3109"/><stop offset="0.75" stop-color="#ff2606"/><stop offset="0.792" stop-color="#ff1d02"/><stop offset="0.833" stop-color="#ff1400"/><stop offset="0.875" stop-color="#ff0c00"/><stop offset="0.917" stop-color="#ff0500"/><stop offset="0.958" stop-color="#ff0000"/><stop offset="1" stop-color="#ff0000"/></linearGradient>
<linearGradient id="g18"><stop offset="0" stop-color="#00ff55"/><stop offset="0.04" stop-color="#00ff55"/><stop offset="0.08" stop-color="#00ff55"/><stop offset="0.12" stop-color="#00ff55"/><stop offset="0.16" stop-color="#00ff54"/><stop offset="0.2" stop-color="#00ff54"/><stop offset="0.24" stop-color="#00ff54"/><stop offset="0.28" stop-color="#2fff53"/><stop offset="0.32" stop-color="#72ff53"/><stop offset="0.36" stop-color="#b8ff52"/><stop offset="0.4" stop-color="#fffa50"/><stop offset="0.44" stop-color="#ffbc3b"/><stop offset="0.48" stop-color="#ff922e"/><stop offset="0.52" stop-color="#ff7424"/><stop offset="0.56" stop-color="#ff5d1c"/><stop offset="0.6" stop-color="#ff4a16"/><stop offset="0.64" stop-color="#ff3c11"/><stop offset="0.68" stop-color="#ff2f0d"/><stop offset="0.72" stop-color="#ff2409"/><stop offset="0.76" stop-color="#ff1b06"/><stop offset="0.8" stop-color="#ff1203"/><stop offset="0.84" stop-color="#ff0a00"/><stop offset="0.88" stop-color="#ff0200"/><stop offset="0.92" stop-color="#ff0000"/><stop offset="0.96" stop-color="#ff0000"/><stop offset="1" stop-color="#ff0000"/></linearGradient>
<linearGradient id="g19"><stop offset="0" stop-color="#00ff5b"/><stop offset="0.0385" stop-color="#00ff5b"/><stop offset="0.0769" stop-color="#00ff5b"/><stop offset="0.115" stop-color="#00ff5b"/><stop offset="0.154" stop-color="#00ff5b"/><stop offset="0.192" stop-color="#00ff5b"/><stop offset="0.231" stop-color="#00ff5b"/><stop offset="0.269" stop-color="#2fff5b"/><stop offset="0.308" stop-color="#73ff5b"/><stop offset="0.346" stop-color="#baff5b"/><stop offset="0.385" stop-color="#fff658"/><stop offset="0.423" stop-color="#ffb942"/><stop offset="0.462" stop-color="#ff8f33"/><stop offset="0.5" stop-color="#ff7229"/><stop offset="0.538" stop-color="#ff5b21"/><stop offset="0.577" stop-color="#ff491a"/><stop offset="0.615" stop-color="#ff3a15"/><stop offset="0.654" stop-color="#ff2d11"/><stop offset="0.692" stop-color="#ff230d"/><stop offset="0.731" stop-color="#ff1909"/><stop offset="0.769" stop-color="#ff1106"/><stop offset="0.808" stop-color="#ff0904"/><stop offset="0.846" stop-color="#ff0101"/><stop offset="0.885" stop-color="#ff0000"/><stop offset="0.923" stop-color="#ff0000"/><stop offset="0.962" stop-color="#ff0000"/><stop offset="1" stop-color="#ff0000"/></linearGradient>
<linearGradient id="g20"><stop offset="0" stop-color="#00ff60"/><stop offset="0.037" stop-color="#00ff60"/><stop offset="0.0741" stop-color="#00ff61"/><stop offset="0.111" stop-color="#00ff61"/><stop offset="0.148" stop-color="#00ff61"/><stop offset="0.185" stop-color="#00ff62"/><stop offset="0.222" stop-color="#00ff62"/><stop offset="0.259" stop-color="#30ff63"/><stop offset="0.296" stop-color="#75ff63"/><stop offset="0.333" stop-color="#bdff64"/><stop offset="0.37" stop-color="#fff260"/><stop offset="0.407" stop-color="#ffb649"/><stop offset="0.444" stop-color="#ff8d39"/><stop offset="0.481" stop-color="#ff6f2e"/><stop offset="0.519" stop-color="#ff5925"/><stop offset="0.556" stop-color="#ff471e"/><stop offset="0.593" stop-color="#ff3819"/><stop offset="0.63" stop-color="#ff2c14"/><stop offset="0.667" stop-color="#ff2110"/><stop offset="0.704" stop-color="#ff180d"/><stop offset="0.741" stop-color="#ff0f09"/><stop offset="0.778" stop-color="#ff0707"/><stop offset="0.815" stop-color="#ff0004"/><stop offset="0.852" stop-color="#ff0002"/><stop offset="0.889" stop-color="#ff0000"/><stop offset="0.926" stop-color="#ff0000"/><stop offset="0.963" stop-color="#ff0000"/><stop offset="1" stop-color="#ff0000"/></linearGradient>
<linearGradient id="g21"><stop offset="0" stop-color="#00ff65"/><stop offset="0.0357" stop-color="#00ff66"/><stop offset="0.0714" stop-color="#00ff66"/><stop offset="0.107" stop-color="#00ff67"/><stop offset="0.143" stop-color="#00ff68"/><stop offset="0.179" stop-color="#00ff69"/><stop offset="0.214" stop-color="#00ff6a"/><stop offset="0.25" stop-color="#35ff6b"/><stop offset="0.286" stop-color="#7aff6c"/><stop offset="0.321" stop-color="#c4ff6d"/><stop offset="0.357" stop-color="#ffeb66"/><stop offset="0.393" stop-color="#ffb04e"/><stop offset="0.429" stop-color="#ff883e"/><stop offset="0.464" stop-color="#ff6c32"/><stop offset="0.5" stop-color="#ff5629"/><stop offset="0.536" stop-color="#ff4422"/><stop offset="0.571" stop-color="#ff361c"/><stop offset="0.607" stop-color="#ff2a17"/><stop offset="0.643" stop-color="#ff1f13"/><stop offset="0.679" stop-color="#ff160f"/><stop offset="0.714" stop-color="#ff0d0c"/><stop offset="0.75" stop-color="#ff0509"/><stop offset="0.786" stop-color="#ff0007"/><stop offset="0.821" stop-color="#ff0004"/><stop offset="0.857" stop-color="#ff0002"/><stop offset="0.893" stop-color="#ff0000"/><stop offset="0.929" stop-color="#ff0000"/><stop offset="0.964" stop-color="#ff0000"/><stop offset="1" stop-color="#ff0000"/></linearGradient>
<linearGradient id="g22"><stop offset="0" stop-color="#00ff6b"/><stop offset="0.0345" stop-color="#00ff6b"/><stop offset="0.069" stop-color="#00ff6c"/><stop offset="0.103" stop-color="#00ff6d"/><stop offset="0.138" stop-color="#00ff6e"/><stop offset="0.172" stop-color="#00ff70"/><stop offset="0.207" stop-color="#00ff71"/><stop offset="0.241" stop-color="#35ff73"/><stop offset="0.276" stop-color="#7cff74"/><stop offset="0.31" stop-color="#c6ff77"/><stop offset="0.345" stop-color="#ffe76e"/><stop offset="0.379" stop-color="#ffad54"/><stop offset="0.414" stop-color="#ff8643"/><stop offset="0.448" stop-color="#ff6a37"/><stop offset="0.483" stop-color="#ff542d"/><stop offset="0.517" stop-color="#ff4326"/><stop offset="0.552" stop-color="#ff3420"/><stop offset="0.586" stop-color="#ff281a"/><stop offset="0.621" stop-color="#ff1e16"/><stop offset="0.655" stop-color="#ff1512"/><stop offset="0.69" stop-color="#ff0c0f"/><stop offset="0.724" stop-color="#ff040c"/><stop offset="0.759" stop-color="#ff0009"/><stop offset="0.793" stop-color="#ff0007"/><stop offset="0.828" stop-color="#ff0005"/><stop offset="0.862" stop-color="#ff0003"/><stop offset="0.897" stop-color="#ff0000"/><stop offset="0.931" stop-color="#ff0000"/><stop offset="0.966" stop-color="#ff0000"/><stop offset="1" stop-color="#ff0000"/></linearGradient>
<linearGradient id="g23"><stop offset="0" stop-color="#00ff70"/><stop offset="0.0345" stop-color="#00ff71"/><stop offset="0.069" stop-color="#00ff72"/><stop offset="0.103" stop-color="#00ff74"/><stop offset="0.138" stop-color="#00ff75"/><stop offset="0.172" stop-color="#00ff77"/><stop offset="0.207" stop-color="#00ff79"/><stop offset="0.241" stop-color="#36ff7b"/><stop offset="0.276" stop-color="#7eff7d"/><stop offset="0.31" stop-color="#caff80"/><stop offset="0.345" stop-color="#ffe375"/><stop offset="0.379" stop-color="#ffaa5a"/><stop offset="0.414" stop-color="#ff8348"/><stop offset="0.448" stop-color="#ff673b"/><stop offset="0.483" stop-color="#ff5231"/><stop offset="0.517" stop-color="#ff4129"/><stop offset="0.552" stop-color="#ff3223"/><stop offset="0.586" stop-color="#ff261e"/><stop offset="0.621" stop-color="#ff1c19"/><stop offset="0.655" stop-color="#ff1315"/><stop offset="0.69" stop-color="#ff0a12"/><stop offset="0.724" stop-color="#ff020f"/><stop offset="0.759" stop-color="#ff000c"/><stop offset="0.793" stop-color="#ff0009"/><stop offset="0.828" stop-color="#ff0007"/><stop offset="0.862" stop-color="#ff0005"/><stop offset="0.897" stop-color="#ff0003"/><stop offset="0.931" stop-color="#ff0001"/><stop offset="0.966" stop-color="#ff0000"/><stop offset="1" stop-color="#ff0000"/></linearGradient>
<linearGradient id="g24"><stop offset="0" stop-color="#00ff76"/><stop offset="0.0345" stop-color="#00ff77"/><stop offset="0.069" stop-color="#00ff78"/><stop offset="0.103" stop-color="#00ff7a"/><stop offset="0.138" stop-color="#00ff7c"/><stop offset="0.172" stop-color="#00ff7e"/><stop offset="0.207" stop-color="#00ff80"/><stop offset="0.241" stop-color="#39ff83"/><stop offset="0.276" stop-color="#81ff86"/><stop offset="0.31" stop-color="#ceff89"/><stop offset="0.345" stop-color="#ffdf7c"/><stop offset="0.379" stop-color="#ffa760"/><stop offset="0.414" stop-color="#ff814d"/><stop offset="0.448" stop-color="#ff6540"/><stop offset="0.483" stop-color="#ff5035"/><stop offset="0.517" stop-color="#ff3f2d"/><stop offset="0.552" stop-color="#ff3126"/><stop offset="0.586" stop-color="#ff2521"/><stop offset="0.621" stop-color="#ff1b1c"/><stop offset="0.655" stop-color="#ff1218"/><stop offset="0.69" stop-color="#ff0914"/><stop offset="0.724" stop-color="#ff0111"/><stop offset="0.759" stop-color="#ff000e"/><stop offset="0.793" stop-color="#ff000c"/><stop offset="0.828" stop-color="#ff000a"/><stop offset="0.862" stop-color="#ff0007"/><stop offset="0.897" stop-color="#ff0005"/><stop offset="0.931" stop-color="#ff0003"/><stop offset="0.966" stop-color="#ff0001"/><stop offset="1" stop-color="#ff0000"/></linearGradient>
<linearGradient id="g25"><stop offset="0" stop-color="#00ff7b"/><stop offset="0.0345" stop-color="#00ff7d"/><stop offset="0.069" stop-color="#00ff7e"/><stop offset="0.103" stop-color="#00ff80"/><stop offset="0.138" stop-color="#00ff83"/><stop offset="0.172" stop-color="#00ff85"/><stop offset="0.207" stop-color="#00ff88"/><stop offset="0.241" stop-color="#38ff8b"/><stop offset="0.276" stop-color="#81ff8f"/><stop offset="0.31" stop-color="#ceff93"/><stop offset="0.345" stop-color="#ffde84"/><stop offset="0.379" stop-color="#ffa667"/><stop offset="0.414" stop-color="#ff8053"/><stop offset="0.448" stop-color="#ff6445"/><stop offset="0.483" stop-color="#ff4f3a"/><stop offset="0.517" stop-color="#ff3e31"/><stop offset="0.552" stop-color="#ff302a"/><stop offset="0.586" stop-color="#ff2424"/><stop offset="0.621" stop-color="#ff1a1f"/><stop offset="0.655" stop-color="#ff111b"/><stop offset="0.69" stop-color="#ff0817"/><stop offset="0.724" stop-color="#ff0014"/><stop offset="0.759" stop-color="#ff0011"/><stop offset="0.793" stop-color="#ff000e"/><stop offset="0.828" stop-color="#ff000c"/><stop offset="0.862" stop-color="#ff000a"/><stop offset="0.897" stop-color="#ff0008"/><stop offset="0.931" stop-color="#ff0006"/><stop offset="0.966" stop-color="#ff0004"/><stop offset="1" stop-color="#ff0002"/></linearGradient>
<linearGradient id="g26"><stop offset="0" stop-color="#00ff81"/><stop offset="0.0345" stop-color="#00ff82"/><stop offset="0.069" stop-color="#00ff85"/><stop offset="0.103" stop-color="#00ff87"/><stop offset="0.138" stop-color="#00ff8a"/><stop offset="0.172" stop-color="#00ff8c"/><stop offset="0.207" stop-color="#00ff90"/><stop offset="0.241" stop-color="#3aff93"/><stop offset="0.276" stop-color="#84ff98"/><stop offset="0.31" stop-color="#d2ff9d"/><stop offset="0.345" stop-color="#ffda8b"/><stop offset="0.379" stop-color="#ffa36d"/><stop offset="0.414" stop-color="#ff7e58"/><stop offset="0.448" stop-color="#ff6249"/><stop offset="0.483" stop-color="#ff4d3e"/><stop offset="0.517" stop-color="#ff3d35"/><stop offset="0.552" stop-color="#ff2f2d"/><stop offset="0.586" stop-color="#ff2327"/><stop offset="0.621" stop-color="#ff1922"/><stop offset="0.655" stop-color="#ff101e"/><stop offset="0.69" stop-color="#ff071a"/><stop offset="0.724" stop-color="#ff0016"/><stop offset="0.759" stop-color="#ff0013"/><stop offset="0.793" stop-color="#ff0011"/><stop offset="0.828" stop-color="#ff000e"/><stop offset="0.862" stop-color="#ff000c"/><stop offset="0.897" stop-color="#ff000a"/><stop offset="0.931" stop-color="#ff0008"/><stop offset="0.966" stop-color="#ff0006"/><stop offset="1" stop-color="#ff0004"/></linearGradient>
<linearGradient id="g27"><stop offset="0" stop-color="#00ff86"/><stop offset="0.0345" stop-color="#00ff88"/><stop offset="0.069" stop-color="#00ff8b"/><stop offset="0.103" stop-color="#00ff8d"/><stop offset="0.138" stop-color="#00ff90"/><stop offset="0.172" stop-color="#00ff94"/><stop offset="0.207" stop-color="#00ff97"/><stop offset="0.241" stop-color="#39ff9c"/><stop offset="0.276" stop-color="#84ffa1"/><stop offset="0.31" stop-color="#d3ffa7"/><stop offset="0.345" stop-color="#ffd994"/><stop offset="0.379" stop-color="#ffa273"/><stop offset="0.414" stop-color="#ff7d5e"/><stop offset="0.448" stop-color="#ff614e"/><stop offset="0.483" stop-color="#ff4c42"/><stop offset="0.517" stop-color="#ff3c39"/><stop offset="0.552" stop-color="#ff2e31"/><stop offset="0.586" stop-color="#ff222b"/><stop offset="0.621" stop-color="#ff1825"/><stop offset="0.655" stop-color="#ff0f21"/><stop offset="0.69" stop-color="#ff061d"/><stop offset="0.724" stop-color="#ff0019"/><stop offset="0.759" stop-color="#ff0016"/><stop offset="0.793" stop-color="#ff0013"/><stop offset="0.828" stop-color="#ff0010"/><stop offset="0.862" stop-color="#ff000e"/><stop offset="0.897" stop-color="#ff000c"/><stop offset="0.931" stop-color="#ff000a"/><stop offset="0.966" stop-color="#ff0008"/><stop offset="1" stop-color="#ff0006"/></linearGradient>
<linearGradient id="g28"><stop offset="0" stop-color="#00ff8c"/><stop offset="0.0345" stop-color="#00ff8e"/><stop offset="0.069" stop-color="#00ff91"/><stop offset="0.103" stop-color="#00ff94"/><stop offset="0.138" stop-color="#00ff97"/><stop offset="0.172" stop-color="#00ff9b"/><stop offset="0.207" stop-color="#00ffa0"/><stop offset="0.241" stop-color="#3cffa5"/><stop offset="0.276" stop-color="#87ffaa"/><stop offset="0.31" stop-color="#d7ffb1"/><stop offset="0.345" stop-color="#ffd59a"/><stop offset="0.379" stop-color="#ff9f79"/><stop offset="0.414" stop-color="#ff7a63"/><stop offset="0.448" stop-color="#ff5f52"/><stop offset="0.483" stop-color="#ff4b46"/><stop offset="0.517" stop-color="#ff3a3c"/><stop offset="0.552" stop-color="#ff2d34"/><stop offset="0.586" stop-color="#ff212e"/><stop offset="0.621" stop-color="#ff1728"/><stop offset="0.655" stop-color="#ff0e23"/><stop offset="0.69" stop-color="#ff051f"/><stop offset="0.724" stop-color="#ff001c"/><stop offset="0.759" stop-color="#ff0018"/><stop offset="0.793" stop-color="#ff0015"/><stop offset="0.828" stop-color="#ff0013"/><stop offset="0.862" stop-color="#ff0010"/><stop offset="0.897" stop-color="#ff000e"/><stop offset="0.931" stop-color="#ff000c"/><stop offset="0.966" stop-color="#ff000a"/><stop offset="1" stop-color="#ff0008"/></linearGradient>
<linearGradient id="g29"><stop offset="0" stop-color="#00ff91"/><stop offset="0.0345" stop-color="#00ff94"/><stop offset="0.069" stop-color="#00ff97"/><stop offset="0.103" stop-color="#00ff9b"/><stop offset="0.138" stop-color="#00ff9e"/><stop offset="0.172" stop-color="#00ffa3"/><stop offset="0.207" stop-color="#00ffa8"/><stop offset="0.241" stop-color="#3bffad"/><stop offset="0.276" stop-color="#87ffb3"/><stop offset="0.31" stop-color="#d8ffbb"/><stop offset="0.345" stop-color="#ffd4a3"/><stop offset="0.379" stop-color="#ff9e80"/><stop offset="0.414" stop-color="#ff7968"/><stop offset="0.448" stop-color="#ff5e57"/><stop offset="0.483" stop-color="#ff4a4a"/><stop offset="0.517" stop-color="#ff3940"/><stop offset="0.552" stop-color="#ff2c38"/><stop offset="0.586" stop-color="#ff2031"/><stop offset="0.621" stop-color="#ff162b"/><stop offset="0.655" stop-color="#ff0d26"/><stop offset="0.69" stop-color="#ff0422"/><stop offset="0.724" stop-color="#ff001e"/><stop offset="0.759" stop-color="#ff001b"/><stop offset="0.793" stop-color="#ff0018"/><stop offset="0.828" stop-color="#ff0015"/><stop offset="0.862" stop-color="#ff0012"/><stop offset="0.897" stop-color="#ff0010"/><stop offset="0.931" stop-color="#ff000e"/><stop offset="0.966" stop-color="#ff000c"/><stop offset="1" stop-color="#ff000a"/></linearGradient>
<linearGradient id="g30"><stop offset="0" stop-color="#00ff97"/><stop offset="0.0345" stop-color="#00ff9a"/><stop offset="0.069" stop-color="#00ff9e"/><stop offset="0.103" stop-color="#00ffa1"/><stop offset="0.138" stop-color="#00ffa6"/><stop offset="0.172" stop-color="#00ffaa"/><stop offset="0.207" stop-color="#00ffb0"/><stop offset="0.241" stop-color="#3dffb6"/><stop offset="0.276" stop-color="#8affbd"/><stop offset="0.31" stop-color="#dcffc6"/><stop offset="0.345" stop-color="#ffd0a9"/><stop offset="0.379" stop-color="#ff9b85"/><stop offset="0.414" stop-color="#ff776d"/><stop offset="0.448" stop-color="#ff5c5b"/><stop offset="0.483" stop-color="#ff484e"/><stop offset="0.517" stop-color="#ff3844"/><stop offset="0.552" stop-color="#ff2a3b"/><stop offset="0.586" stop-color="#ff1f34"/><stop offset="0.621" stop-color="#ff152e"/><stop offset="0.655" stop-color="#ff0c29"/><stop offset="0.69" stop-color="#ff0324"/><stop offset="0.724" stop-color="#ff0020"/><stop offset="0.759" stop-color="#ff001d"/><stop offset="0.793" stop-color="#ff001a"/><stop offset="0.828" stop-color="#ff0017"/><stop offset="0.862" stop-color="#ff0014"/><stop offset="0.897" stop-color="#ff0012"/><stop offset="0.931" stop-color="#ff0010"/><stop offset="0.966" stop-color="#ff000e"/><stop offset="1" stop-color="#ff000c"/></linearGradient>
<linearGradient id="g31"><stop offset="0" stop-color="#00ff9d"/><stop offset="0.0345" stop-color="#00ffa0"/><stop offset="0.069" stop-color="#00ffa4"/><stop offset="0.103" stop-color="#00ffa8"/><stop offset="0.138" stop-color="#00ffad"/><stop offset="0.172" stop-color="#00ffb2"/><stop offset="0.207" stop-color="#00ffb8"/><stop offset="0.241" stop-color="#3cffbf"/><stop offset="0.276" stop-color="#8affc7"/><stop offset="0.31" stop-color="#ddffd0"/><stop offset="0.345" stop-color="#ffcfb1"/><stop offset="0.379" stop-color="#ff9a8c"/><stop offset="0.414" stop-color="#ff7573"/><stop offset="0.448" stop-color="#ff5b60"/><stop offset="0.483" stop-color="#ff4752"/><stop offset="0.517" stop-color="#ff3747"/><stop offset="0.552" stop-color="#ff293f"/><stop offset="0.586" stop-color="#ff1e37"/><stop offset="0.621" stop-color="#ff1431"/><stop offset="0.655" stop-color="#ff0b2c"/><stop offset="0.69" stop-color="#ff0227"/><stop offset="0.724" stop-color="#ff0023"/><stop offset="0.759" stop-color="#ff001f"/><stop offset="0.793" stop-color="#ff001c"/><stop offset="0.828" stop-color="#ff0019"/><stop offset="0.862" stop-color="#ff0016"/><stop offset="0.897" stop-color="#ff0014"/><stop offset="0.931" stop-color="#ff0012"/><stop offset="0.966" stop-color="#ff0010"/><stop offset="1" stop-color="#ff000e"/></linearGradient>
<linearGradient id="g32"><stop offset="0" stop-color="#00ffa3"/><stop offset="0.0345" stop-color="#00ffa7"/><stop offset="0.069" stop-color="#00ffab"/><stop offset="0.103" stop-color="#00ffaf"/><stop offset="0.138" stop-color="#00ffb4"/><stop offset="0.172" stop-color="#00ffba"/><stop offset="0.207" stop-color="#00ffc1"/><stop offset="0.241" stop-color="#3fffc8"/><stop offset="0.276" stop-color="#8dffd1"/><stop offset="0.31" stop-color="#e2ffdb"/><stop offset="0.345" stop-color="#ffcbb8"/><stop offset="0.379" stop-color="#ff9791"/><stop offset="0.414" stop-color="#ff7377"/><stop offset="0.448" stop-color="#ff5964"/><stop offset="0.483" stop-color="#ff4556"/><stop offset="0.517" stop-color="#ff354b"/><stop offset="0.552" stop-color="#ff2842"/><stop offset="0.586" stop-color="#ff1c3a"/><stop offset="0.621" stop-color="#ff1334"/><stop offset="0.655" stop-color="#ff092e"/><stop offset="0.69" stop-color="#ff0029"/><stop offset="0.724" stop-color="#ff0025"/><stop offset="0.759" stop-color="#ff0022"/><stop offset="0.793" stop-color="#ff001e"/><stop offset="0.828" stop-color="#ff001b"/><stop offset="0.862" stop-color="#ff0019"/><stop offset="0.897" stop-color="#ff0016"/><stop offset="0.931" stop-color="#ff0014"/><stop offset="0.966" stop-color="#ff0012"/><stop offset="1" stop-color="#ff0010"/></linearGradient>
<linearGradient id="g33"><stop offset="0" stop-color="#00ffa9"/><stop offset="0.0345" stop-color="#00ffad"/><stop offset="0.069" stop-color="#00ffb1"/><stop offset="0.103" stop-color="#00ffb6"/><stop offset="0.138" stop-color="#00ffbc"/><stop offset="0.172" stop-color="#00ffc2"/><stop offset="0.207" stop-color="#00ffc9"/><stop offset="0.241" stop-color="#3effd1"/><stop offset="0.276" stop-color="#8dffdb"/><stop offset="0.31" stop-color="#e2ffe6"/><stop offset="0.345" stop-color="#ffc9c0"/><stop offset="0.379" stop-color="#ff9598"/><stop offset="0.414" stop-color="#ff727d"/><stop offset="0.448" stop-color="#ff5869"/><stop offset="0.483" stop-color="#ff445a"/><stop offset="0.517" stop-color="#ff344f"/><stop offset="0.552" stop-color="#ff2745"/><stop offset="0.586" stop-color="#ff1b3d"/><stop offset="0.621" stop-color="#ff1237"/><stop offset="0.655" stop-color="#ff0831"/><stop offset="0.69" stop-color="#ff002c"/><stop offset="0.724" stop-color="#ff0028"/><stop offset="0.759" stop-color="#ff0024"/><stop offset="0.793" stop-color="#ff0020"/><stop offset="0.828" stop-color="#ff001d"/><stop offset="0.862" stop-color="#ff001b"/><stop offset="0.897" stop-color="#ff0018"/><stop offset="0.931" stop-color="#ff0016"/><stop offset="0.966" stop-color="#ff0013"/><stop offset="1" stop-color="#ff0011"/></linearGradient>
<linearGradient id="g34"><stop offset="0" stop-color="#00ffaf"/><stop offset="0.0345" stop-color="#00ffb3"/><stop offset="0.069" stop-color="#00ffb8"/><stop offset="0.103" stop-color="#00ffbd"/><stop offset="0.138" stop-color="#00ffc3"/><stop offset="0.172" stop-color="#00ffca"/><stop offset="0.207" stop-color="#00ffd2"/><stop offset="0.241" stop-color="#41ffdb"/><stop offset="0.276" stop-color="#91ffe5"/><stop offset="0.31" stop-color="#e7fff1"/><stop offset="0.345" stop-color="#ffc6c6"/><stop offset="0.379" stop-color="#ff929d"/><stop offset="0.414" stop-color="#ff7081"/><stop offset="0.448" stop-color="#ff566d"/><stop offset="0.483" stop-color="#ff425e"/><stop offset="0.517" stop-color="#ff3352"/><stop offset="0.552" stop-color="#ff2548"/><stop offset="0.586" stop-color="#ff1a40"/><stop offset="0.621" stop-color="#ff1039"/><stop offset="0.655" stop-color="#ff0734"/><stop offset="0.69" stop-color="#ff002f"/><stop offset="0.724" stop-color="#ff002a"/><stop offset="0.759" stop-color="#ff0026"/><stop offset="0.793" stop-color="#ff0023"/><stop offset="0.828" stop-color="#ff001f"/><stop offset="0.862" stop-color="#ff001c"/><stop offset="0.897" stop-color="#ff001a"/><stop offset="0.931" stop-color="#ff0017"/><stop offset="0.966" stop-color="#ff0015"/><stop offset="1" stop-color="#ff0013"/></linearGradient>
<linearGradient id="g35"><stop offset="0" stop-color="#00ffb5"/><stop offset="0.0345" stop-color="#00ffba"/><stop offset="0.069" stop-color="#00ffbf"/><stop offset="0.103" stop-color="#00ffc5"/><stop offset="0.138" stop-color="#00ffcb"/><stop offset="0.172" stop-color="#00ffd2"/><stop offset="0.207" stop-color="#00ffdb"/><stop offset="0.241" stop-color="#41ffe4"/><stop offset="0.276" stop-color="#91ffef"/><stop offset="0.31" stop-color="#e8fffc"/><stop offset="0.345" stop-color="#ffc4cf"/><stop offset="0.379" stop-color="#ff92a4"/><stop offset="0.414" stop-color="#ff6f87"/><stop offset="0.448" stop-color="#ff5572"/><stop offset="0.483" stop-color="#ff4263"/><stop offset="0.517" stop-color="#ff3256"/><stop offset="0.552" stop-color="#ff254c"/><stop offset="0.586" stop-color="#ff1a44"/><stop offset="0.621" stop-color="#ff103d"/><stop offset="0.655" stop-color="#ff0737"/><stop offset="0.69" stop-color="#ff0031"/><stop offset="0.724" stop-color="#ff002d"/><stop offset="0.759" stop-color="#ff0029"/><stop offset="0.793" stop-color="#ff0025"/><stop offset="0.828" stop-color="#ff0022"/><stop offset="0.862" stop-color="#ff001f"/><stop offset="0.897" stop-color="#ff001c"/><stop offset="0.931" stop-color="#ff001a"/><stop offset="0.966" stop-color="#ff0017"/><stop offset="1" stop-color="#ff0015"/></linearGradient>
<linearGradient id="g36"><stop offset="0" stop-color="#00ffbb"/><stop offset="0.0345" stop-color="#00ffc0"/><stop offset="0.069" stop-color="#00ffc5"/><stop offset="0.103" stop-color="#00ffcc"/><stop offset="0.138" stop-color="#00ffd2"/><stop offset="0.172" stop-color="#00ffda"/><stop offset="0.207" stop-color="#00ffe3"/><stop offset="0.241" stop-color="#3effed"/><stop offset="0.276" stop-color="#8efff9"/><stop offset="0.31" stop-color="#def7ff"/><stop offset="0.345" stop-color="#ffc6d9"/><stop offset="0.379" stop-color="#ff92ac"/><stop offset="0.414" stop-color="#ff6f8e"/><stop offset="0.448" stop-color="#ff5578"/><stop offset="0.483" stop-color="#ff4268"/><stop offset="0.517" stop-color="#ff325b"/><stop offset="0.552" stop-color="#ff2550"/><stop offset="0.586" stop-color="#ff1947"/><stop offset="0.621" stop-color="#ff1040"/><stop offset="0.655" stop-color="#ff063a"/><stop offset="0.69" stop-color="#ff0034"/><stop offset="0.724" stop-color="#ff0030"/><stop offset="0.759" stop-color="#ff002b"/><stop offset="0.793" stop-color="#ff0028"/><stop offset="0.828" stop-color="#ff0024"/><stop offset="0.862" stop-color="#ff0021"/><stop offset="0.897" stop-color="#ff001e"/><stop offset="0.931" stop-color="#ff001c"/><stop offset="0.966" stop-color="#ff0019"/><stop offset="1" stop-color="#ff0017"/></linearGradient>
<linearGradient id="g37"><stop offset="0" stop-color="#00ffc1"/><stop offset="0.0357" stop-color="#00ffc7"/><stop offset="0.0714" stop-color="#00ffcd"/><stop offset="0.107" stop-color="#00ffd4"/><stop offset="0.143" stop-color="#00ffdb"/><stop offset="0.179" stop-color="#00ffe4"/><stop offset="0.214" stop-color="#00ffee"/><stop offset="0.25" stop-color="#52fffa"/><stop offset="0.286" stop-color="#a2f6ff"/><stop offset="0.321" stop-color="#eee8ff"/><stop offset="0.357" stop-color="#ffb0cf"/><stop offset="0.393" stop-color="#ff82a6"/><stop offset="0.429" stop-color="#ff638a"/><stop offset="0.464" stop-color="#ff4b75"/><stop offset="0.5" stop-color="#ff3965"/><stop offset="0.536" stop-color="#ff2a59"/><stop offset="0.571" stop-color="#ff1e4f"/><stop offset="0.607" stop-color="#ff1346"/><stop offset="0.643" stop-color="#ff093f"/><stop offset="0.679" stop-color="#ff0039"/><stop offset="0.714" stop-color="#ff0034"/><stop offset="0.75" stop-color="#ff002f"/><stop offset="0.786" stop-color="#ff002b"/><stop offset="0.821" stop-color="#ff0027"/><stop offset="0.857" stop-color="#ff0024"/><stop offset="0.893" stop-color="#ff0021"/><stop offset="0.929" stop-color="#ff001e"/><stop offset="0.964" stop-color="#ff001b"/><stop offset="1" stop-color="#ff0019"/></linearGradient>
<linearGradient id="g38"><stop offset="0" stop-color="#00ffc8"/><stop offset="0.0357" stop-color="#00ffce"/><stop offset="0.0714" stop-color="#00ffd4"/><stop offset="0.107" stop-color="#00ffdb"/><stop offset="0.143" stop-color="#00ffe4"/><stop offset="0.179" stop-color="#00ffed"/><stop offset="0.214" stop-color="#00fff8"/><stop offset="0.25" stop-color="#51faff"/><stop offset="0.286" stop-color="#9cedff"/><stop offset="0.321" stop-color="#e5deff"/><stop offset="0.357" stop-color="#ffafd7"/><stop offset="0.393" stop-color="#ff81ac"/><stop offset="0.429" stop-color="#ff628f"/><stop offset="0.464" stop-color="#ff4a7a"/><stop offset="0.5" stop-color="#ff386a"/><stop offset="0.536" stop-color="#ff295d"/><stop offset="0.571" stop-color="#ff1d52"/><stop offset="0.607" stop-color="#ff124a"/><stop offset="0.643" stop-color="#ff0942"/><stop offset="0.679" stop-color="#ff003c"/><stop offset="0.714" stop-color="#ff0036"/><stop offset="0.75" stop-color="#ff0032"/><stop offset="0.786" stop-color="#ff002d"/><stop offset="0.821" stop-color="#ff002a"/><stop offset="0.857" stop-color="#ff0026"/><stop offset="0.893" stop-color="#ff0023"/><stop offset="0.929" stop-color="#ff0020"/><stop offset="0.964" stop-color="#ff001d"/><stop offset="1" stop-color="#ff001b"/></linearGradient>
<linearGradient id="g39"><stop offset="0" stop-color="#00ffce"/><stop offset="0.0357" stop-color="#00ffd4"/><stop offset="0.0714" stop-color="#00ffdb"/><stop offset="0.107" stop-color="#00ffe3"/><stop offset="0.143" stop-color="#00ffeb"/><stop offset="0.179" stop-color="#00fff5"/><stop offset="0.214" stop-color="#00fdff"/><stop offset="0.25" stop-color="#4bf1ff"/><stop offset="0.286" stop-color="#93e4ff"/><stop offset="0.321" stop-color="#dad6ff"/><stop offset="0.357" stop-color="#ffb0e1"/><stop offset="0.393" stop-color="#ff82b4"/><stop offset="0.429" stop-color="#ff6296"/><stop offset="0.464" stop-color="#ff4a80"/><stop offset="0.5" stop-color="#ff386f"/><stop offset="0.536" stop-color="#ff2961"/><stop offset="0.571" stop-color="#ff1d56"/><stop offset="0.607" stop-color="#ff124d"/><stop offset="0.643" stop-color="#ff0846"/><stop offset="0.679" stop-color="#ff003f"/><stop offset="0.714" stop-color="#ff0039"/><stop offset="0.75" stop-color="#ff0034"/><stop offset="0.786" stop-color="#ff0030"/><stop offset="0.821" stop-color="#ff002c"/><stop offset="0.857" stop-color="#ff0028"/><stop offset="0.893" stop-color="#ff0025"/><stop offset="0.929" stop-color="#ff0022"/><stop offset="0.964" stop-color="#ff0020"/><stop offset="1" stop-color="#ff001d"/></linearGradient>
<linearGradient id="g40"><stop offset="0" stop-color="#00ffd5"/><stop offset="0.0357" stop-color="#00ffdb"/><stop offset="0.0714" stop-color="#00ffe2"/><stop offset="0.107" stop-color="#00ffeb"/><stop offset="0.143" stop-color="#00fff4"/><stop offset="0.179" stop-color="#00fffe"/><stop offset="0.214" stop-color="#00f4ff"/><stop offset="0.25" stop-color="#49e8ff"/><stop offset="0.286" stop-color="#8fdbff"/><stop offset="0.321" stop-color="#d3cdff"/><stop offset="0.357" stop-color="#ffafe9"/><stop offset="0.393" stop-color="#ff81bb"/><stop offset="0.429" stop-color="#ff619c"/><stop offset="0.464" stop-color="#ff4a85"/><stop offset="0.5" stop-color="#ff3773"/><stop offset="0.536" stop-color="#ff2965"/><stop offset="0.571" stop-color="#ff1c5a"/><stop offset="0.607" stop-color="#ff1151"/><stop offset="0.643" stop-color="#ff0849"/><stop offset="0.679" stop-color="#ff0042"/><stop offset="0.714" stop-color="#ff003c"/><stop offset="0.75" stop-color="#ff0037"/><stop offset="0.786" stop-color="#ff0032"/><stop offset="0.821" stop-color="#ff002e"/><stop offset="0.857" stop-color="#ff002b"/><stop offset="0.893" stop-color="#ff0027"/><stop offset="0.929" stop-color="#ff0024"/><stop offset="0.964" stop-color="#ff0022"/><stop offset="1" stop-color="#ff001f"/></linearGradient>
<linearGradient id="g41"><stop offset="0" stop-color="#00ffdb"/><stop offset="0.0357" stop-color="#00ffe2"/><stop offset="0.0714" stop-color="#00ffea"/><stop offset="0.107" stop-color="#00fff2"/><stop offset="0.143" stop-color="#00fffc"/><stop offset="0.179" stop-color="#00f7ff"/><stop offset="0.214" stop-color="#00ecff"/><stop offset="0.25" stop-color="#46dfff"/><stop offset="0.286" stop-color="#8ad3ff"/><stop offset="0.321" stop-color="#ccc5ff"/><stop offset="0.357" stop-color="#ffaef2"/><stop offset="0.393" stop-color="#ff80c2"/><stop offset="0.429" stop-color="#ff60a1"/><stop offset="0.464" stop-color="#ff498a"/><stop offset="0.5" stop-color="#ff3778"/><stop offset="0.536" stop-color="#ff2869"/><stop offset="0.571" stop-color="#ff1c5e"/><stop offset="0.607" stop-color="#ff1154"/><stop offset="0.643" stop-color="#ff074c"/><stop offset="0.679" stop-color="#ff0045"/><stop offset="0.714" stop-color="#ff003f"/><stop offset="0.75" stop-color="#ff003a"/><stop offset="0.786" stop-color="#ff0035"/><stop offset="0.821" stop-color="#ff0031"/><stop offset="0.857" stop-color="#ff002d"/><stop offset="0.893" stop-color="#ff002a"/><stop offset="0.929" stop-color="#ff0027"/><stop offset="0.964" stop-color="#ff0024"/><stop offset="1" stop-color="#ff0021"/></linearGradient>
<linearGradient id="g42"><stop offset="0" stop-color="#00ffe2"/><stop offset="0.0357" stop-color="#00ffe9"/><stop offset="0.0714" stop-color="#00fff1"/><stop offset="0.107" stop-color="#00fffa"/><stop offset="0.143" stop-color="#00faff"/><stop offset="0.179" stop-color="#00efff"/><stop offset="0.214" stop-color="#00e4ff"/><stop offset="0.25" stop-color="#41d8ff"/><stop offset="0.286" stop-color="#83ccff"/><stop offset="0.321" stop-color="#c2beff"/><stop offset="0.357" stop-color="#ffaffc"/><stop offset="0.393" stop-color="#ff80ca"/><stop offset="0.429" stop-color="#ff61a8"/><stop offset="0.464" stop-color="#ff4990"/><stop offset="0.5" stop-color="#ff377d"/><stop offset="0.536" stop-color="#ff286e"/><stop offset="0.571" stop-color="#ff1b62"/><stop offset="0.607" stop-color="#ff1158"/><stop offset="0.643" stop-color="#ff0750"/><stop offset="0.679" stop-color="#ff0048"/><stop offset="0.714" stop-color="#ff0042"/><stop offset="0.75" stop-color="#ff003d"/><stop offset="0.786" stop-color="#ff0038"/><stop offset="0.821" stop-color="#ff0033"/><stop offset="0.857" stop-color="#ff002f"/><stop offset="0.893" stop-color="#ff002c"/><stop offset="0.929" stop-color="#ff0029"/><stop offset="0.964" stop-color="#ff0026"/><stop offset="1" stop-color="#ff0023"/></linearGradient>
<linearGradient id="g43"><stop offset="0" stop-color="#00ffe9"/><stop offset="0.037" stop-color="#00fff0"/><stop offset="0.0741" stop-color="#00fff9"/><stop offset="0.111" stop-color="#00fbff"/><stop offset="0.148" stop-color="#00f0ff"/><stop offset="0.185" stop-color="#00e5ff"/><stop offset="0.222" stop-color="#07daff"/><stop offset="0.259" stop-color="#50cdff"/><stop offset="0.296" stop-color="#91c0ff"/><stop offset="0.333" stop-color="#d0b3ff"/><stop offset="0.37" stop-color="#ff9aef"/><stop offset="0.407" stop-color="#ff71c2"/><stop offset="0.444" stop-color="#ff55a2"/><stop offset="0.481" stop-color="#ff3f8b"/><stop offset="0.519" stop-color="#ff2e79"/><stop offset="0.556" stop-color="#ff206b"/><stop offset="0.593" stop-color="#ff145f"/><stop offset="0.63" stop-color="#ff0a56"/><stop offset="0.667" stop-color="#ff004e"/><stop offset="0.704" stop-color="#ff0047"/><stop offset="0.741" stop-color="#ff0041"/><stop offset="0.778" stop-color="#ff003b"/><stop offset="0.815" stop-color="#ff0037"/><stop offset="0.852" stop-color="#ff0032"/><stop offset="0.889" stop-color="#ff002f"/><stop offset="0.926" stop-color="#ff002b"/><stop offset="0.963" stop-color="#ff0028"/><stop offset="1" stop-color="#ff0025"/></linearGradient>
<linearGradient id="g44"><stop offset="0" stop-color="#00fff0"/><stop offset="0.037" stop-color="#00fff8"/><stop offset="0.0741" stop-color="#00fdff"/><stop offset="0.111" stop-color="#00f3ff"/><stop offset="0.148" stop-color="#00e8ff"/><stop offset="0.185" stop-color="#00deff"/><stop offset="0.222" stop-color="#06d2ff"/><stop offset="0.259" stop-color="#4ec6ff"/><stop offset="0.296" stop-color="#8db9ff"/><stop offset="0.333" stop-color="#caacff"/><stop offset="0.37" stop-color="#ff99f7"/><stop offset="0.407" stop-color="#ff70c8"/><stop offset="0.444" stop-color="#ff54a8"/><stop offset="0.481" stop-color="#ff3e90"/><stop offset="0.519" stop-color="#ff2d7e"/><stop offset="0.556" stop-color="#ff206f"/><stop offset="0.593" stop-color="#ff1463"/><stop offset="0.63" stop-color="#ff0959"/><stop offset="0.667" stop-color="#ff0051"/><stop offset="0.704" stop-color="#ff004a"/><stop offset="0.741" stop-color="#ff0043"/><stop offset="0.778" stop-color="#ff003e"/><stop offset="0.815" stop-color="#ff0039"/><stop offset="0.852" stop-color="#ff0035"/><stop offset="0.889" stop-color="#ff0031"/><stop offset="0.926" stop-color="#ff002d"/><stop offset="0.963" stop-color="#ff002a"/><stop offset="1" stop-color="#ff0027"/></linearGradient>
<linearGradient id="g45"><stop offset="0" stop-color="#00fff7"/><stop offset="0.037" stop-color="#00ffff"/><stop offset="0.0741" stop-color="#00f5ff"/><stop offset="0.111" stop-color="#00ebff"/><stop offset="0.148" stop-color="#00e1ff"/><stop offset="0.185" stop-color="#00d6ff"/><stop offset="0.222" stop-color="#06cbff"/><stop offset="0.259" stop-color="#4bbfff"/><stop offset="0.296" stop-color="#88b3ff"/><stop offset="0.333" stop-color="#c4a6ff"/><stop offset="0.37" stop-color="#ff98ff"/><stop offset="0.407" stop-color="#ff6fcf"/><stop offset="0.444" stop-color="#ff53ad"/><stop offset="0.481" stop-color="#ff3e95"/><stop offset="0.519" stop-color="#ff2d82"/><stop offset="0.556" stop-color="#ff1f73"/><stop offset="0.593" stop-color="#ff1367"/><stop offset="0.63" stop-color="#ff095d"/><stop offset="0.667" stop-color="#ff0054"/><stop offset="0.704" stop-color="#ff004d"/><stop offset="0.741" stop-color="#ff0046"/><stop offset="0.778" stop-color="#ff0041"/><stop offset="0.815" stop-color="#ff003c"/><stop offset="0.852" stop-color="#ff0037"/><stop offset="0.889" stop-color="#ff0033"/><stop offset="0.926" stop-color="#ff0030"/><stop offset="0.963" stop-color="#ff002c"/><stop offset="1" stop-color="#ff0029"/></linearGradient>
<linearGradient id="g46"><stop offset="0" stop-color="#00fffd"/><stop offset="0.037" stop-color="#00f8ff"/><stop offset="0.0741" stop-color="#00eeff"/><stop offset="0.111" stop-color="#00e5ff"/><stop offset="0.148" stop-color="#00dbff"/><stop offset="0.185" stop-color="#00d0ff"/><stop offset="0.222" stop-color="#02c5ff"/><stop offset="0.259" stop-color="#46b9ff"/><stop offset="0.296" stop-color="#82adff"/><stop offset="0.333" stop-color="#bba0ff"/><stop offset="0.37" stop-color="#f593ff"/><stop offset="0.407" stop-color="#ff70d7"/><stop offset="0.444" stop-color="#ff53b4"/><stop offset="0.481" stop-color="#ff3d9b"/><stop offset="0.519" stop-color="#ff2d87"/><stop offset="0.556" stop-color="#ff1f78"/><stop offset="0.593" stop-color="#ff136b"/><stop offset="0.63" stop-color="#ff0860"/><stop offset="0.667" stop-color="#ff0058"/><stop offset="0.704" stop-color="#ff0050"/><stop offset="0.741" stop-color="#ff0049"/><stop offset="0.778" stop-color="#ff0043"/><stop offset="0.815" stop-color="#ff003e"/><stop offset="0.852" stop-color="#ff003a"/><stop offset="0.889" stop-color="#ff0035"/><stop offset="0.926" stop-color="#ff0032"/><stop offset="0.963" stop-color="#ff002e"/><stop offset="1" stop-color="#ff002b"/></linearGradient>
<linearGradient id="g47"><stop offset="0" stop-color="#00f9ff"/><stop offset="0.037" stop-color="#00f0ff"/><stop offset="0.0741" stop-color="#00e7ff"/><stop offset="0.111" stop-color="#00deff"/><stop offset="0.148" stop-color="#00d4ff"/><stop offset="0.185" stop-color="#00c9ff"/><stop offset="0.222" stop-color="#03beff"/><stop offset="0.259" stop-color="#45b3ff"/><stop offset="0.296" stop-color="#7fa7ff"/><stop offset="0.333" stop-color="#b79aff"/><stop offset="0.37" stop-color="#ef8dff"/><stop offset="0.407" stop-color="#ff6edd"/><stop offset="0.444" stop-color="#ff51b9"/><stop offset="0.481" stop-color="#ff3c9f"/><stop offset="0.519" stop-color="#ff2b8b"/><stop offset="0.556" stop-color="#ff1e7b"/><stop offset="0.593" stop-color="#ff126e"/><stop offset="0.63" stop-color="#ff0764"/><stop offset="0.667" stop-color="#ff005a"/><stop offset="0.704" stop-color="#ff0053"/><stop offset="0.741" stop-color="#ff004c"/><stop offset="0.778" stop-color="#ff0046"/><stop offset="0.815" stop-color="#ff0041"/><stop offset="0.852" stop-color="#ff003c"/><stop offset="0.889" stop-color="#ff0038"/><stop offset="0.926" stop-color="#ff0034"/><stop offset="0.963" stop-color="#ff0030"/><stop offset="1" stop-color="#ff002d"/></linearGradient>
<linearGradient id="g48"><stop offset="0" stop-color="#00f2ff"/><stop offset="0.037" stop-color="#00eaff"/><stop offset="0.0741" stop-color="#00e1ff"/><stop offset="0.111" stop-color="#00d7ff"/><stop offset="0.148" stop-color="#00cdff"/><stop offset="0.185" stop-color="#00c3ff"/><stop offset="0.222" stop-color="#03b8ff"/><stop offset="0.259" stop-color="#43adff"/><stop offset="0.296" stop-color="#7ba1ff"/><stop offset="0.333" stop-color="#b295ff"/><stop offset="0.37" stop-color="#e888ff"/><stop offset="0.407" stop-color="#ff6de4"/><stop offset="0.444" stop-color="#ff51bf"/><stop offset="0.481" stop-color="#ff3ba4"/><stop offset="0.519" stop-color="#ff2b90"/><stop offset="0.556" stop-color="#ff1d7f"/><stop offset="0.593" stop-color="#ff1172"/><stop offset="0.63" stop-color="#ff0767"/><stop offset="0.667" stop-color="#ff005e"/><stop offset="0.704" stop-color="#ff0056"/><stop offset="0.741" stop-color="#ff004f"/><stop offset="0.778" stop-color="#ff0049"/><stop offset="0.815" stop-color="#ff0043"/><stop offset="0.852" stop-color="#ff003e"/><stop offset="0.889" stop-color="#ff003a"/><stop offset="0.926" stop-color="#ff0036"/><stop offset="0.963" stop-color="#ff0032"/><stop offset="1" stop-color="#ff002f"/></linearGradient>
<linearGradient id="g49"><stop offset="0" stop-color="#00ecff"/><stop offset="0.0385" stop-color="#00e3ff"/><stop offset="0.0769" stop-color="#00d9ff"/><stop offset="0.115" stop-color="#00d0ff"/><stop offset="0.154" stop-color="#00c6ff"/><stop offset="0.192" stop-color="#00bbff"/><stop offset="0.231" stop-color="#14b0ff"/><stop offset="0.269" stop-color="#51a4ff"/><stop offset="0.308" stop-color="#8898ff"/><stop offset="0.346" stop-color="#bf8bff"/><stop offset="0.385" stop-color="#f57eff"/><stop offset="0.423" stop-color="#ff5fd9"/><stop offset="0.462" stop-color="#ff45b7"/><stop offset="0.5" stop-color="#ff329e"/><stop offset="0.538" stop-color="#ff228b"/><stop offset="0.577" stop-color="#ff157b"/><stop offset="0.615" stop-color="#ff0a6f"/><stop offset="0.654" stop-color="#ff0064"/><stop offset="0.692" stop-color="#ff005b"/><stop offset="0.731" stop-color="#ff0053"/><stop offset="0.769" stop-color="#ff004d"/><stop offset="0.808" stop-color="#ff0047"/><stop offset="0.846" stop-color="#ff0042"/><stop offset="0.885" stop-color="#ff003d"/><stop offset="0.923" stop-color="#ff0039"/><stop offset="0.962" stop-color="#ff0035"/><stop offset="1" stop-color="#ff0031"/></linearGradient>
<linearGradient id="g50"><stop offset="0" stop-color="#00e6ff"/><stop offset="0.0385" stop-color="#00ddff"/><stop offset="0.0769" stop-color="#00d4ff"/><stop offset="0.115" stop-color="#00caff"/><stop offset="0.154" stop-color="#00c0ff"/><stop offset="0.192" stop-color="#00b6ff"/><stop offset="0.231" stop-color="#10abff"/><stop offset="0.269" stop-color="#4c9fff"/><stop offset="0.308" stop-color="#8294ff"/><stop offset="0.346" stop-color="#b787ff"/><stop offset="0.385" stop-color="#ec7aff"/><stop offset="0.423" stop-color="#ff5fe1"/><stop offset="0.462" stop-color="#ff45be"/><stop offset="0.5" stop-color="#ff32a4"/><stop offset="0.538" stop-color="#ff2290"/><stop offset="0.577" stop-color="#ff1580"/><stop offset="0.615" stop-color="#ff0a73"/><stop offset="0.654" stop-color="#ff0068"/><stop offset="0.692" stop-color="#ff005f"/><stop offset="0.731" stop-color="#ff0057"/><stop offset="0.769" stop-color="#ff0050"/><stop offset="0.808" stop-color="#ff0049"/><stop offset="0.846" stop-color="#ff0044"/><stop offset="0.885" stop-color="#ff003f"/><stop offset="0.923" stop-color="#ff003b"/><stop offset="0.962" stop-color="#ff0037"/><stop offset="1" stop-color="#ff0033"/></linearGradient>
<linearGradient id="g51"><stop offset="0" stop-color="#00e0ff"/><stop offset="0.0385" stop-color="#00d7ff"/><stop offset="0.0769" stop-color="#00ceff"/><stop offset="0.115" stop-color="#00c4ff"/><stop offset="0.154" stop-color="#00baff"/><stop offset="0.192" stop-color="#00b0ff"/><stop offset="0.231" stop-color="#10a5ff"/><stop offset="0.269" stop-color="#4a9aff"/><stop offset="0.308" stop-color="#7f8fff"/><stop offset="0.346" stop-color="#b282ff"/><stop offset="0.385" stop-color="#e575ff"/><stop offset="0.423" stop-color="#ff5ee8"/><stop offset="0.462" stop-color="#ff44c4"/><stop offset="0.5" stop-color="#ff31a9"/><stop offset="0.538" stop-color="#ff2194"/><stop offset="0.577" stop-color="#ff1484"/><stop offset="0.615" stop-color="#ff0976"/><stop offset="0.654" stop-color="#ff006b"/><stop offset="0.692" stop-color="#ff0062"/><stop offset="0.731" stop-color="#ff005a"/><stop offset="0.769" stop-color="#ff0052"/><stop offset="0.808" stop-color="#ff004c"/><stop offset="0.846" stop-color="#ff0047"/><stop offset="0.885" stop-color="#ff0042"/><stop offset="0.923" stop-color="#ff003d"/><stop offset="0.962" stop-color="#ff0039"/><stop offset="1" stop-color="#ff0036"/></linearGradient>
<linearGradient id="g52"><stop offset="0" stop-color="#00daff"/><stop offset="0.0385" stop-color="#00d1ff"/><stop offset="0.0769" stop-color="#00c8ff"/><stop offset="0.115" stop-color="#00bfff"/><stop offset="0.154" stop-color="#00b5ff"/><stop offset="0.192" stop-color="#00abff"/><stop offset="0.231" stop-color="#0fa0ff"/><stop offset="0.269" stop-color="#4895ff"/><stop offset="0.308" stop-color="#7b8aff"/><stop offset="0.346" stop-color="#ae7eff"/><stop offset="0.385" stop-color="#df71ff"/><stop offset="0.423" stop-color="#ff5dee"/><stop offset="0.462" stop-color="#ff44c9"/><stop offset="0.5" stop-color="#ff30ae"/><stop offset="0.538" stop-color="#ff2199"/><stop offset="0.577" stop-color="#ff1488"/><stop offset="0.615" stop-color="#ff087a"/><stop offset="0.654" stop-color="#ff006f"/><stop offset="0.692" stop-color="#ff0065"/><stop offset="0.731" stop-color="#ff005d"/><stop offset="0.769" stop-color="#ff0055"/><stop offset="0.808" stop-color="#ff004f"/><stop offset="0.846" stop-color="#ff0049"/><stop offset="0.885" stop-color="#ff0044"/><stop offset="0.923" stop-color="#ff0040"/><stop offset="0.962" stop-color="#ff003b"/><stop offset="1" stop-color="#ff0038"/></linearGradient>
<linearGradient id="g53"><stop offset="0" stop-color="#00d4ff"/><stop offset="0.0385" stop-color="#00cbff"/><stop offset="0.0769" stop-color="#00c2ff"/><stop offset="0.115" stop-color="#00b9ff"/><stop offset="0.154" stop-color="#00b0ff"/><stop offset="0.192" stop-color="#00a6ff"/><stop offset="0.231" stop-color="#0f9bff"/><stop offset="0.269" stop-color="#4691ff"/><stop offset="0.308" stop-color="#7885ff"/><stop offset="0.346" stop-color="#a97aff"/><stop offset="0.385" stop-color="#d96dff"/><stop offset="0.423" stop-color="#ff5cf5"/><stop offset="0.462" stop-color="#ff43cf"/><stop offset="0.5" stop-color="#ff2fb3"/><stop offset="0.538" stop-color="#ff209d"/><stop offset="0.577" stop-color="#ff138c"/><stop offset="0.615" stop-color="#ff077e"/><stop offset="0.654" stop-color="#ff0072"/><stop offset="0.692" stop-color="#ff0068"/><stop offset="0.731" stop-color="#ff0060"/><stop offset="0.769" stop-color="#ff0058"/><stop offset="0.808" stop-color="#ff0052"/><stop offset="0.846" stop-color="#ff004c"/><stop offset="0.885" stop-color="#ff0047"/><stop offset="0.923" stop-color="#ff0042"/><stop offset="0.962" stop-color="#ff003e"/><stop offset="1" stop-color="#ff003a"/></linearGradient>
<linearGradient id="g54"><stop offset="0" stop-color="#00ceff"/><stop offset="0.04" stop-color="#00c5ff"/><stop offset="0.08" stop-color="#00bcff"/><stop offset="0.12" stop-color="#00b3ff"/><stop offset="0.16" stop-color="#00a9ff"/><stop offset="0.2" stop-color="#009fff"/><stop offset="0.24" stop-color="#1c94ff"/><stop offset="0.28" stop-color="#5289ff"/><stop offset="0.32" stop-color="#847dff"/><stop offset="0.36" stop-color="#b571ff"/><stop offset="0.4" stop-color="#e664ff"/><stop offset="0.44" stop-color="#ff4fe9"/><stop offset="0.48" stop-color="#ff38c6"/><stop offset="0.52" stop-color="#ff26ac"/><stop offset="0.56" stop-color="#ff1898"/><stop offset="0.6" stop-color="#ff0b87"/><stop offset="0.64" stop-color="#ff007a"/><stop offset="0.68" stop-color="#ff006f"/><stop offset="0.72" stop-color="#ff0065"/><stop offset="0.76" stop-color="#ff005d"/><stop offset="0.8" stop-color="#ff0056"/><stop offset="0.84" stop-color="#ff004f"/><stop offset="0.88" stop-color="#ff004a"/><stop offset="0.92" stop-color="#ff0045"/><stop offset="0.96" stop-color="#ff0040"/><stop offset="1" stop-color="#ff003c"/></linearGradient>
<linearGradient id="g55"><stop offset="0" stop-color="#00c9ff"/><stop offset="0.04" stop-color="#00c1ff"/><stop offset="0.08" stop-color="#00b8ff"/><stop offset="0.12" stop-color="#00aeff"/><stop offset="0.16" stop-color="#00a5ff"/><stop offset="0.2" stop-color="#009bff"/><stop offset="0.24" stop-color="#1990ff"/><stop offset="0.28" stop-color="#4e85ff"/><stop offset="0.32" stop-color="#7f7aff"/><stop offset="0.36" stop-color="#af6eff"/><stop offset="0.4" stop-color="#de61ff"/><stop offset="0.44" stop-color="#ff4ff1"/><stop offset="0.48" stop-color="#ff38cd"/><stop offset="0.52" stop-color="#ff26b2"/><stop offset="0.56" stop-color="#ff179d"/><stop offset="0.6" stop-color="#ff0b8c"/><stop offset="0.64" stop-color="#ff007e"/><stop offset="0.68" stop-color="#ff0072"/><stop offset="0.72" stop-color="#ff0068"/><stop offset="0.76" stop-color="#ff0060"/><stop offset="0.8" stop-color="#ff0059"/><stop offset="0.84" stop-color="#ff0052"/><stop offset="0.88" stop-color="#ff004c"/><stop offset="0.92" stop-color="#ff0047"/><stop offset="0.96" stop-color="#ff0042"/><stop offset="1" stop-color="#ff003e"/></linearGradient>
<linearGradient id="g56"><stop offset="0" stop-color="#00c4ff"/><stop offset="0.04" stop-color="#00bcff"/><stop offset="0.08" stop-color="#00b3ff"/><stop offset="0.12" stop-color="#00aaff"/><stop offset="0.16" stop-color="#00a0ff"/><stop offset="0.2" stop-color="#0096ff"/><stop offset="0.24" stop-color="#188cff"/><stop offset="0.28" stop-color="#4c81ff"/><stop offset="0.32" stop-color="#7c76ff"/><stop offset="0.36" stop-color="#aa6aff"/><stop offset="0.4" stop-color="#d85eff"/><stop offset="0.44" stop-color="#ff4ef8"/><stop offset="0.48" stop-color="#ff37d2"/><stop offset="0.52" stop-color="#ff25b7"/><stop offset="0.56" stop-color="#ff17a1"/><stop offset="0.6" stop-color="#ff0a90"/><stop offset="0.64" stop-color="#ff0082"/><stop offset="0.68" stop-color="#ff0076"/><stop offset="0.72" stop-color="#ff006c"/><stop offset="0.76" stop-color="#ff0063"/><stop offset="0.8" stop-color="#ff005b"/><stop offset="0.84" stop-color="#ff0055"/><stop offset="0.88" stop-color="#ff004f"/><stop offset="0.92" stop-color="#ff004a"/><stop offset="0.96" stop-color="#ff0045"/><stop offset="1" stop-color="#ff0040"/></linearGradient>
<linearGradient id="g57"><stop offset="0" stop-color="#00bfff"/><stop offset="0.04" stop-color="#00b7ff"/><stop offset="0.08" stop-color="#00aeff"/><stop offset="0.12" stop-color="#00a5ff"/><stop offset="0.16" stop-color="#009bff"/><stop offset="0.2" stop-color="#0092ff"/><stop offset="0.24" stop-color="#1888ff"/><stop offset="0.28" stop-color="#4a7dff"/><stop offset="0.32" stop-color="#7972ff"/><stop offset="0.36" stop-color="#a666ff"/><stop offset="0.4" stop-color="#d35aff"/><stop offset="0.44" stop-color="#ff4dfe"/><stop offset="0.48" stop-color="#ff36d8"/><stop offset="0.52" stop-color="#ff24bc"/><stop offset="0.56" stop-color="#ff16a6"/><stop offset="0.6" stop-color="#ff0994"/><stop offset="0.64" stop-color="#ff0085"/><stop offset="0.68" stop-color="#ff0079"/><stop offset="0.72" stop-color="#ff006f"/><stop offset="0.76" stop-color="#ff0066"/><stop offset="0.8" stop-color="#ff005e"/><stop offset="0.84" stop-color="#ff0057"/><stop offset="0.88" stop-color="#ff0051"/><stop offset="0.92" stop-color="#ff004c"/><stop offset="0.96" stop-color="#ff0047"/><stop offset="1" stop-color="#ff0043"/></linearGradient>
<linearGradient id="g58"><stop offset="0" stop-color="#00baff"/><stop offset="0.04" stop-color="#00b2ff"/><stop offset="0.08" stop-color="#00a9ff"/><stop offset="0.12" stop-color="#00a0ff"/><stop offset="0.16" stop-color="#0097ff"/><stop offset="0.2" stop-color="#008eff"/><stop offset="0.24" stop-color="#1784ff"/><stop offset="0.28" stop-color="#4879ff"/><stop offset="0.32" stop-color="#766eff"/><stop offset="0.36" stop-color="#a263ff"/><stop offset="0.4" stop-color="#cd57ff"/><stop offset="0.44" stop-color="#f94bff"/><stop offset="0.48" stop-color="#ff35de"/><stop offset="0.52" stop-color="#ff24c1"/><stop offset="0.56" stop-color="#ff15aa"/><stop offset="0.6" stop-color="#ff0998"/><stop offset="0.64" stop-color="#ff0089"/><stop offset="0.68" stop-color="#ff007d"/><stop offset="0.72" stop-color="#ff0072"/><stop offset="0.76" stop-color="#ff0069"/><stop offset="0.8" stop-color="#ff0061"/><stop offset="0.84" stop-color="#ff005a"/><stop offset="0.88" stop-color="#ff0054"/><stop offset="0.92" stop-color="#ff004e"/><stop offset="0.96" stop-color="#ff0049"/><stop offset="1" stop-color="#ff0045"/></linearGradient>
<linearGradient id="g59"><stop offset="0" stop-color="#00b5ff"/><stop offset="0.04" stop-color="#00adff"/><stop offset="0.08" stop-color="#00a5ff"/><stop offset="0.12" stop-color="#009cff"/><stop offset="0.16" stop-color="#0093ff"/><stop offset="0.2" stop-color="#0089ff"/><stop offset="0.24" stop-color="#1780ff"/><stop offset="0.28" stop-color="#4775ff"/><stop offset="0.32" stop-color="#736bff"/><stop offset="0.36" stop-color="#9e60ff"/><stop offset="0.4" stop-color="#c854ff"/><stop offset="0.44" stop-color="#f348ff"/><stop offset="0.48" stop-color="#ff34e4"/><stop offset="0.52" stop-color="#ff23c6"/><stop offset="0.56" stop-color="#ff14af"/><stop offset="0.6" stop-color="#ff089c"/><stop offset="0.64" stop-color="#ff008d"/><stop offset="0.68" stop-color="#ff0080"/><stop offset="0.72" stop-color="#ff0076"/><stop offset="0.76" stop-color="#ff006c"/><stop offset="0.8" stop-color="#ff0064"/><stop offset="0.84" stop-color="#ff005d"/><stop offset="0.88" stop-color="#ff0057"/><stop offset="0.92" stop-color="#ff0051"/><stop offset="0.96" stop-color="#ff004c"/><stop offset="1" stop-color="#ff0047"/></linearGradient>
<linearGradient id="g60"><stop offset="0" stop-color="#00b1ff"/><stop offset="0.0417" stop-color="#00a8ff"/><stop offset="0.0833" stop-color="#00a0ff"/><stop offset="0.125" stop-color="#0097ff"/><stop offset="0.167" stop-color="#008dff"/><stop offset="0.208" stop-color="#0084ff"/><stop offset="0.25" stop-color="#2379ff"/><stop offset="0.292" stop-color="#526fff"/><stop offset="0.333" stop-color="#7e64ff"/><stop offset="0.375" stop-color="#aa58ff"/><stop offset="0.417" stop-color="#d54cff"/><stop offset="0.458" stop-color="#ff3ffe"/><stop offset="0.5" stop-color="#ff2ada"/><stop offset="0.542" stop-color="#ff1abe"/><stop offset="0.583" stop-color="#ff0ca8"/><stop offset="0.625" stop-color="#ff0097"/><stop offset="0.667" stop-color="#ff0088"/><stop offset="0.708" stop-color="#ff007c"/><stop offset="0.75" stop-color="#ff0072"/><stop offset="0.792" stop-color="#ff0069"/><stop offset="0.833" stop-color="#ff0061"/><stop offset="0.875" stop-color="#ff005a"/><stop offset="0.917" stop-color="#ff0054"/><stop offset="0.958" stop-color="#ff004f"/><stop offset="1" stop-color="#ff004a"/></linearGradient>
<linearGradient id="g61"><stop offset="0" stop-color="#00acff"/><stop offset="0.0417" stop-color="#00a4ff"/><stop offset="0.0833" stop-color="#009bff"/><stop offset="0.125" stop-color="#0093ff"/><stop offset="0.167" stop-color="#0089ff"/><stop offset="0.208" stop-color="#0080ff"/><stop offset="0.25" stop-color="#2276ff"/><stop offset="0.292" stop-color="#506bff"/><stop offset="0.333" stop-color="#7b61ff"/><stop offset="0.375" stop-color="#a655ff"/><stop offset="0.417" stop-color="#cf49ff"/><stop offset="0.458" stop-color="#f93dff"/><stop offset="0.5" stop-color="#ff29df"/><stop offset="0.542" stop-color="#ff19c3"/><stop offset="0.583" stop-color="#ff0bad"/><stop offset="0.625" stop-color="#ff009b"/><stop offset="0.667" stop-color="#ff008c"/><stop offset="0.708" stop-color="#ff0080"/><stop offset="0.75" stop-color="#ff0075"/><stop offset="0.792" stop-color="#ff006c"/><stop offset="0.833" stop-color="#ff0064"/><stop offset="0.875" stop-color="#ff005d"/><stop offset="0.917" stop-color="#ff0057"/><stop offset="0.958" stop-color="#ff0051"/><stop offset="1" stop-color="#ff004c"/></linearGradient>
<linearGradient id="g62"><stop offset="0" stop-color="#00a8ff"/><stop offset="0.0417" stop-color="#00a0ff"/><stop offset="0.0833" stop-color="#0097ff"/><stop offset="0.125" stop-color="#008fff"/><stop offset="0.167" stop-color="#0086ff"/><stop offset="0.208" stop-color="#007cff"/><stop offset="0.25" stop-color="#2172ff"/><stop offset="0.292" stop-color="#4e68ff"/><stop offset="0.333" stop-color="#785dff"/><stop offset="0.375" stop-color="#a252ff"/><stop offset="0.417" stop-color="#ca47ff"/><stop offset="0.458" stop-color="#f33aff"/><stop offset="0.5" stop-color="#ff28e5"/><stop offset="0.542" stop-color="#ff18c8"/><stop offset="0.583" stop-color="#ff0ab1"/><stop offset="0.625" stop-color="#ff009f"/><stop offset="0.667" stop-color="#ff0090"/><stop offset="0.708" stop-color="#ff0083"/><stop offset="0.75" stop-color="#ff0078"/><stop offset="0.792" stop-color="#ff006f"/><stop offset="0.833" stop-color="#ff0067"/><stop offset="0.875" stop-color="#ff0060"/><stop offset="0.917" stop-color="#ff0059"/><stop offset="0.958" stop-color="#ff0053"/><stop offset="1" stop-color="#ff004e"/></linearGradient>
<linearGradient id="g63"><stop offset="0" stop-color="#00a4ff"/><stop offset="0.0417" stop-color="#009cff"/><stop offset="0.0833" stop-color="#0094ff"/><stop offset="0.125" stop-color="#008bff"/><stop offset="0.167" stop-color="#0082ff"/><stop offset="0.208" stop-color="#0079ff"/><stop offset="0.25" stop-color="#1e6fff"/><stop offset="0.292" stop-color="#4a65ff"/><stop offset="0.333" stop-color="#745bff"/><stop offset="0.375" stop-color="#9c50ff"/><stop offset="0.417" stop-color="#c444ff"/><stop offset="0.458" stop-color="#ec38ff"/><stop offset="0.5" stop-color="#ff28ec"/><stop offset="0.542" stop-color="#ff18ce"/><stop offset="0.583" stop-color="#ff0ab6"/><stop offset="0.625" stop-color="#ff00a3"/><stop offset="0.667" stop-color="#ff0094"/><stop offset="0.708" stop-color="#ff0087"/><stop offset="0.75" stop-color="#ff007c"/><stop offset="0.792" stop-color="#ff0072"/><stop offset="0.833" stop-color="#ff006a"/><stop offset="0.875" stop-color="#ff0062"/><stop offset="0.917" stop-color="#ff005c"/><stop offset="0.958" stop-color="#ff0056"/><stop offset="1" stop-color="#ff0051"/></linearGradient>
<linearGradient id="g64"><stop offset="0" stop-color="#00a0ff"/><stop offset="0.0417" stop-color="#0098ff"/><stop offset="0.0833" stop-color="#0090ff"/><stop offset="0.125" stop-color="#0088ff"/><stop offset="0.167" stop-color="#007fff"/><stop offset="0.208" stop-color="#0076ff"/><stop offset="0.25" stop-color="#1d6cff"/><stop offset="0.292" stop-color="#4962ff"/><stop offset="0.333" stop-color="#7158ff"/><stop offset="0.375" stop-color="#994dff"/><stop offset="0.417" stop-color="#bf42ff"/><stop offset="0.458" stop-color="#e636ff"/><stop offset="0.5" stop-color="#ff27f2"/><stop offset="0.542" stop-color="#ff17d3"/><stop offset="0.583" stop-color="#ff09bb"/><stop offset="0.625" stop-color="#ff00a8"/><stop offset="0.667" stop-color="#ff0098"/><stop offset="0.708" stop-color="#ff008a"/><stop offset="0.75" stop-color="#ff007f"/><stop offset="0.792" stop-color="#ff0075"/><stop offset="0.833" stop-color="#ff006d"/><stop offset="0.875" stop-color="#ff0065"/><stop offset="0.917" stop-color="#ff005f"/><stop offset="0.958" stop-color="#ff0059"/><stop offset="1" stop-color="#ff0053"/></linearGradient>
<linearGradient id="g65"><stop offset="0" stop-color="#009cff"/><stop offset="0.0417" stop-color="#0094ff"/><stop offset="0.0833" stop-color="#008cff"/><stop offset="0.125" stop-color="#0084ff"/><stop offset="0.167" stop-color="#007bff"/><stop offset="0.208" stop-color="#0072ff"/><stop offset="0.25" stop-color="#1d69ff"/><stop offset="0.292" stop-color="#475fff"/><stop offset="0.333" stop-color="#6f55ff"/><stop offset="0.375" stop-color="#954bff"/><stop offset="0.417" stop-color="#bb3fff"/><stop offset="0.458" stop-color="#e134ff"/><stop offset="0.5" stop-color="#ff26f8"/><stop offset="0.542" stop-color="#ff16d8"/><stop offset="0.583" stop-color="#ff08c0"/><stop offset="0.625" stop-color="#ff00ac"/><stop offset="0.667" stop-color="#ff009c"/><stop offset="0.708" stop-color="#ff008e"/><stop offset="0.75" stop-color="#ff0083"/><stop offset="0.792" stop-color="#ff0079"/><stop offset="0.833" stop-color="#ff0070"/><stop offset="0.875" stop-color="#ff0068"/><stop offset="0.917" stop-color="#ff0061"/><stop offset="0.958" stop-color="#ff005b"/><stop offset="1" stop-color="#ff0056"/></linearGradient>
<linearGradient id="g66"><stop offset="0" stop-color="#0098ff"/><stop offset="0.0435" stop-color="#0090ff"/><stop offset="0.087" stop-color="#0088ff"/><stop offset="0.13" stop-color="#007fff"/><stop offset="0.174" stop-color="#0076ff"/><stop offset="0.217" stop-color="#006dff"/><stop offset="0.261" stop-color="#2863ff"/><stop offset="0.304" stop-color="#5259ff"/><stop offset="0.348" stop-color="#7a4fff"/><stop offset="0.391" stop-color="#a144ff"/><stop offset="0.435" stop-color="#c838ff"/><stop offset="0.478" stop-color="#ee2cff"/><stop offset="0.522" stop-color="#ff1ceb"/><stop offset="0.565" stop-color="#ff0dce"/><stop offset="0.609" stop-color="#ff00b7"/><stop offset="0.652" stop-color="#ff00a4"/><stop offset="0.696" stop-color="#ff0095"/><stop offset="0.739" stop-color="#ff0088"/><stop offset="0.783" stop-color="#ff007d"/><stop offset="0.826" stop-color="#ff0074"/><stop offset="0.87" stop-color="#ff006c"/><stop offset="0.913" stop-color="#ff0064"/><stop offset="0.957" stop-color="#ff005e"/><stop offset="1" stop-color="#ff0058"/></linearGradient>
<linearGradient id="g67"><stop offset="0" stop-color="#0095ff"/><stop offset="0.0435" stop-color="#008dff"/><stop offset="0.087" stop-color="#0084ff"/><stop offset="0.13" stop-color="#007cff"/><stop offset="0.174" stop-color="#0073ff"/><stop offset="0.217" stop-color="#006aff"/><stop offset="0.261" stop-color="#2760ff"/><stop offset="0.304" stop-color="#5056ff"/><stop offset="0.348" stop-color="#774cff"/><stop offset="0.391" stop-color="#9d41ff"/><stop offset="0.435" stop-color="#c336ff"/><stop offset="0.478" stop-color="#e92aff"/><stop offset="0.522" stop-color="#ff1bf0"/><stop offset="0.565" stop-color="#ff0cd3"/><stop offset="0.609" stop-color="#ff00bb"/><stop offset="0.652" stop-color="#ff00a9"/><stop offset="0.696" stop-color="#ff0099"/><stop offset="0.739" stop-color="#ff008c"/><stop offset="0.783" stop-color="#ff0081"/><stop offset="0.826" stop-color="#ff0077"/><stop offset="0.87" stop-color="#ff006e"/><stop offset="0.913" stop-color="#ff0067"/><stop offset="0.957" stop-color="#ff0060"/><stop offset="1" stop-color="#ff005a"/></linearGradient>
<linearGradient id="g68"><stop offset="0" stop-color="#0091ff"/><stop offset="0.0435" stop-color="#0089ff"/><stop offset="0.087" stop-color="#0081ff"/><stop offset="0.13" stop-color="#0078ff"/><stop offset="0.174" stop-color="#0070ff"/><stop offset="0.217" stop-color="#0067ff"/><stop offset="0.261" stop-color="#265dff"/><stop offset="0.304" stop-color="#4e54ff"/><stop offset="0.348" stop-color="#7549ff"/><stop offset="0.391" stop-color="#9a3fff"/><stop offset="0.435" stop-color="#bf34ff"/><stop offset="0.478" stop-color="#e328ff"/><stop offset="0.522" stop-color="#ff1af6"/><stop offset="0.565" stop-color="#ff0bd8"/><stop offset="0.609" stop-color="#ff00c0"/><stop offset="0.652" stop-color="#ff00ad"/><stop offset="0.696" stop-color="#ff009d"/><stop offset="0.739" stop-color="#ff008f"/><stop offset="0.783" stop-color="#ff0084"/><stop offset="0.826" stop-color="#ff007a"/><stop offset="0.87" stop-color="#ff0071"/><stop offset="0.913" stop-color="#ff006a"/><stop offset="0.957" stop-color="#ff0063"/><stop offset="1" stop-color="#ff005d"/></linearGradient>
<linearGradient id="g69"><stop offset="0" stop-color="#008dff"/><stop offset="0.0435" stop-color="#0086ff"/><stop offset="0.087" stop-color="#007eff"/><stop offset="0.13" stop-color="#0075ff"/><stop offset="0.174" stop-color="#006dff"/><stop offset="0.217" stop-color="#0064ff"/><stop offset="0.261" stop-color="#255bff"/><stop offset="0.304" stop-color="#4d51ff"/><stop offset="0.348" stop-color="#7247ff"/><stop offset="0.391" stop-color="#963dff"/><stop offset="0.435" stop-color="#ba32ff"/><stop offset="0.478" stop-color="#de26ff"/><stop offset="0.522" stop-color="#ff19fc"/><stop offset="0.565" stop-color="#ff0add"/><stop offset="0.609" stop-color="#ff00c5"/><stop offset="0.652" stop-color="#ff00b1"/><stop offset="0.696" stop-color="#ff00a1"/><stop offset="0.739" stop-color="#ff0093"/><stop offset="0.783" stop-color="#ff0087"/><stop offset="0.826" stop-color="#ff007d"/><stop offset="0.87" stop-color="#ff0074"/><stop offset="0.913" stop-color="#ff006d"/><stop offset="0.957" stop-color="#ff0066"/><stop offset="1" stop-color="#ff005f"/></linearGradient>
<linearGradient id="g70"><stop offset="0" stop-color="#008aff"/><stop offset="0.0435" stop-color="#0082ff"/><stop offset="0.087" stop-color="#007aff"/><stop offset="0.13" stop-color="#0072ff"/><stop offset="0.174" stop-color="#006aff"/><stop offset="0.217" stop-color="#0061ff"/><stop offset="0.261" stop-color="#2558ff"/><stop offset="0.304" stop-color="#4b4eff"/><stop offset="0.348" stop-color="#7045ff"/><stop offset="0.391" stop-color="#933aff"/><stop offset="0.435" stop-color="#b630ff"/><stop offset="0.478" stop-color="#d924ff"/><stop offset="0.522" stop-color="#fc18ff"/><stop offset="0.565" stop-color="#ff09e2"/><stop offset="0.609" stop-color="#ff00c9"/><stop offset="0.652" stop-color="#ff00b5"/><stop offset="0.696" stop-color="#ff00a5"/><stop offset="0.739" stop-color="#ff0097"/><stop offset="0.783" stop-color="#ff008b"/><stop offset="0.826" stop-color="#ff0080"/><stop offset="0.87" stop-color="#ff0077"/><stop offset="0.913" stop-color="#ff006f"/><stop offset="0.957" stop-color="#ff0068"/><stop offset="1" stop-color="#ff0062"/></linearGradient>
<linearGradient id="g71"><stop offset="0" stop-color="#0086ff"/><stop offset="0.0455" stop-color="#007fff"/><stop offset="0.0909" stop-color="#0076ff"/><stop offset="0.136" stop-color="#006eff"/><stop offset="0.182" stop-color="#0065ff"/><stop offset="0.227" stop-color="#025cff"/><stop offset="0.273" stop-color="#2e53ff"/><stop offset="0.318" stop-color="#5549ff"/><stop offset="0.364" stop-color="#7a3fff"/><stop offset="0.409" stop-color="#9e34ff"/><stop offset="0.455" stop-color="#c229ff"/><stop offset="0.5" stop-color="#e51cff"/><stop offset="0.545" stop-color="#ff0ef5"/><stop offset="0.591" stop-color="#ff00d8"/><stop offset="0.636" stop-color="#ff00c1"/><stop offset="0.682" stop-color="#ff00ae"/><stop offset="0.727" stop-color="#ff009e"/><stop offset="0.773" stop-color="#ff0091"/><stop offset="0.818" stop-color="#ff0086"/><stop offset="0.864" stop-color="#ff007c"/><stop offset="0.909" stop-color="#ff0073"/><stop offset="0.955" stop-color="#ff006b"/><stop offset="1" stop-color="#ff0065"/></linearGradient>
<linearGradient id="g72"><stop offset="0" stop-color="#0083ff"/><stop offset="0.0455" stop-color="#007bff"/><stop offset="0.0909" stop-color="#0073ff"/><stop offset="0.136" stop-color="#006bff"/><stop offset="0.182" stop-color="#0062ff"/><stop offset="0.227" stop-color="#025aff"/><stop offset="0.273" stop-color="#2d50ff"/><stop offset="0.318" stop-color="#5347ff"/><stop offset="0.364" stop-color="#773dff"/><stop offset="0.409" stop-color="#9b32ff"/><stop offset="0.455" stop-color="#bd27ff"/><stop offset="0.5" stop-color="#e01bff"/><stop offset="0.545" stop-color="#ff0dfb"/><stop offset="0.591" stop-color="#ff00dd"/><stop offset="0.636" stop-color="#ff00c5"/><stop offset="0.682" stop-color="#ff00b2"/><stop offset="0.727" stop-color="#ff00a2"/><stop offset="0.773" stop-color="#ff0095"/><stop offset="0.818" stop-color="#ff0089"/><stop offset="0.864" stop-color="#ff007f"/><stop offset="0.909" stop-color="#ff0076"/><stop offset="0.955" stop-color="#ff006e"/><stop offset="1" stop-color="#ff0067"/></linearGradient>
<linearGradient id="g73"><stop offset="0" stop-color="#0080ff"/><stop offset="0.0455" stop-color="#0078ff"/><stop offset="0.0909" stop-color="#0070ff"/><stop offset="0.136" stop-color="#0068ff"/><stop offset="0.182" stop-color="#0060ff"/><stop offset="0.227" stop-color="#0157ff"/><stop offset="0.273" stop-color="#2d4eff"/><stop offset="0.318" stop-color="#5144ff"/><stop offset="0.364" stop-color="#753aff"/><stop offset="0.409" stop-color="#9730ff"/><stop offset="0.455" stop-color="#b925ff"/><stop offset="0.5" stop-color="#db19ff"/><stop offset="0.545" stop-color="#fd0cff"/><stop offset="0.591" stop-color="#ff00e2"/><stop offset="0.636" stop-color="#ff00ca"/><stop offset="0.682" stop-color="#ff00b6"/><stop offset="0.727" stop-color="#ff00a6"/><stop offset="0.773" stop-color="#ff0098"/><stop offset="0.818" stop-color="#ff008c"/><stop offset="0.864" stop-color="#ff0082"/><stop offset="0.909" stop-color="#ff0079"/><stop offset="0.955" stop-color="#ff0071"/><stop offset="1" stop-color="#ff006a"/></linearGradient>
<linearGradient id="g74"><stop offset="0" stop-color="#007dff"/><stop offset="0.0455" stop-color="#0075ff"/><stop offset="0.0909" stop-color="#006dff"/><stop offset="0.136" stop-color="#0065ff"/><stop offset="0.182" stop-color="#005dff"/><stop offset="0.227" stop-color="#0154ff"/><stop offset="0.273" stop-color="#2c4bff"/><stop offset="0.318" stop-color="#5042ff"/><stop offset="0.364" stop-color="#7238ff"/><stop offset="0.409" stop-color="#942eff"/><stop offset="0.455" stop-color="#b523ff"/><stop offset="0.5" stop-color="#d618ff"/><stop offset="0.545" stop-color="#f80bff"/><stop offset="0.591" stop-color="#ff00e7"/><stop offset="0.636" stop-color="#ff00cf"/><stop offset="0.682" stop-color="#ff00bb"/><stop offset="0.727" stop-color="#ff00aa"/><stop offset="0.773" stop-color="#ff009c"/><stop offset="0.818" stop-color="#ff0090"/><stop offset="0.864" stop-color="#ff0085"/><stop offset="0.909" stop-color="#ff007c"/><stop offset="0.955" stop-color="#ff0074"/><stop offset="1" stop-color="#ff006d"/></linearGradient>
<linearGradient id="g75"><stop offset="0" stop-color="#007aff"/><stop offset="0.0455" stop-color="#0072ff"/><stop offset="0.0909" stop-color="#006bff"/><stop offset="0.136" stop-color="#0063ff"/><stop offset="0.182" stop-color="#005aff"/><stop offset="0.227" stop-color="#0152ff"/><stop offset="0.273" stop-color="#2b49ff"/><stop offset="0.318" stop-color="#4e40ff"/><stop offset="0.364" stop-color="#7036ff"/><stop offset="0.409" stop-color="#912cff"/><stop offset="0.455" stop-color="#b122ff"/><stop offset="0.5" stop-color="#d216ff"/><stop offset="0.545" stop-color="#f209ff"/><stop offset="0.591" stop-color="#ff00ed"/><stop offset="0.636" stop-color="#ff00d3"/><stop offset="0.682" stop-color="#ff00bf"/><stop offset="0.727" stop-color="#ff00ae"/><stop offset="0.773" stop-color="#ff00a0"/><stop offset="0.818" stop-color="#ff0093"/><stop offset="0.864" stop-color="#ff0089"/><stop offset="0.909" stop-color="#ff007f"/><stop offset="0.955" stop-color="#ff0077"/><stop offset="1" stop-color="#ff0070"/></linearGradient>
<linearGradient id="g76"><stop offset="0" stop-color="#0077ff"/><stop offset="0.0455" stop-color="#006fff"/><stop offset="0.0909" stop-color="#0068ff"/><stop offset="0.136" stop-color="#0060ff"/><stop offset="0.182" stop-color="#0058ff"/><stop offset="0.227" stop-color="#014fff"/><stop offset="0.273" stop-color="#2a47ff"/><stop offset="0.318" stop-color="#4c3eff"/><stop offset="0.364" stop-color="#6d34ff"/><stop offset="0.409" stop-color="#8e2aff"/><stop offset="0.455" stop-color="#ae20ff"/><stop offset="0.5" stop-color="#cd15ff"/><stop offset="0.545" stop-color="#ed08ff"/><stop offset="0.591" stop-color="#ff00f2"/><stop offset="0.636" stop-color="#ff00d8"/><stop offset="0.682" stop-color="#ff00c3"/><stop offset="0.727" stop-color="#ff00b2"/><stop offset="0.773" stop-color="#ff00a3"/><stop offset="0.818" stop-color="#ff0097"/><stop offset="0.864" stop-color="#ff008c"/><stop offset="0.909" stop-color="#ff0082"/><stop offset="0.955" stop-color="#ff007a"/><stop offset="1" stop-color="#ff0072"/></linearGradient>
<linearGradient id="g77"><stop offset="0" stop-color="#0074ff"/><stop offset="0.0476" stop-color="#006cff"/><stop offset="0.0952" stop-color="#0064ff"/><stop offset="0.143" stop-color="#005cff"/><stop offset="0.19" stop-color="#0054ff"/><stop offset="0.238" stop-color="#0c4bff"/><stop offset="0.286" stop-color="#3342ff"/><stop offset="0.333" stop-color="#5639ff"/><stop offset="0.381" stop-color="#772fff"/><stop offset="0.429" stop-color="#9824ff"/><stop offset="0.476" stop-color="#b919ff"/><stop offset="0.524" stop-color="#d90dff"/><stop offset="0.571" stop-color="#f900ff"/><stop offset="0.619" stop-color="#ff00e7"/><stop offset="0.667" stop-color="#ff00cf"/><stop offset="0.714" stop-color="#ff00bb"/><stop offset="0.762" stop-color="#ff00ab"/><stop offset="0.81" stop-color="#ff009d"/><stop offset="0.857" stop-color="#ff0091"/><stop offset="0.905" stop-color="#ff0086"/><stop offset="0.952" stop-color="#ff007d"/><stop offset="1" stop-color="#ff0075"/></linearGradient>
<linearGradient id="g78"><stop offset="0" stop-color="#0071ff"/><stop offset="0.0476" stop-color="#0069ff"/><stop offset="0.0952" stop-color="#0062ff"/><stop offset="0.143" stop-color="#005aff"/><stop offset="0.19" stop-color="#0051ff"/><stop offset="0.238" stop-color="#0c49ff"/><stop offset="0.286" stop-color="#3240ff"/><stop offset="0.333" stop-color="#5437ff"/><stop offset="0.381" stop-color="#752dff"/><stop offset="0.429" stop-color="#9523ff"/><stop offset="0.476" stop-color="#b518ff"/><stop offset="0.524" stop-color="#d40bff"/><stop offset="0.571" stop-color="#f400ff"/><stop offset="0.619" stop-color="#ff00ec"/><stop offset="0.667" stop-color="#ff00d3"/><stop offset="0.714" stop-color="#ff00bf"/><stop offset="0.762" stop-color="#ff00af"/><stop offset="0.81" stop-color="#ff00a0"/><stop offset="0.857" stop-color="#ff0094"/><stop offset="0.905" stop-color="#ff008a"/><stop offset="0.952" stop-color="#ff0080"/><stop offset="1" stop-color="#ff0078"/></linearGradient>
<linearGradient id="g79"><stop offset="0" stop-color="#006eff"/><stop offset="0.0476" stop-color="#0067ff"/><stop offset="0.0952" stop-color="#005fff"/><stop offset="0.143" stop-color="#0057ff"/><stop offset="0.19" stop-color="#004fff"/><stop offset="0.238" stop-color="#0c47ff"/><stop offset="0.286" stop-color="#313eff"/><stop offset="0.333" stop-color="#5235ff"/><stop offset="0.381" stop-color="#722bff"/><stop offset="0.429" stop-color="#9221ff"/><stop offset="0.476" stop-color="#b116ff"/><stop offset="0.524" stop-color="#d00aff"/><stop offset="0.571" stop-color="#ef00ff"/><stop offset="0.619" stop-color="#ff00f1"/><stop offset="0.667" stop-color="#ff00d8"/><stop offset="0.714" stop-color="#ff00c4"/><stop offset="0.762" stop-color="#ff00b3"/><stop offset="0.81" stop-color="#ff00a4"/><stop offset="0.857" stop-color="#ff0098"/><stop offset="0.905" stop-color="#ff008d"/><stop offset="0.952" stop-color="#ff0083"/><stop offset="1" stop-color="#ff007b"/></linearGradient>
<linearGradient id="g80"><stop offset="0" stop-color="#006bff"/><stop offset="0.0476" stop-color="#0064ff"/><stop offset="0.0952" stop-color="#005cff"/><stop offset="0.143" stop-color="#0054ff"/><stop offset="0.19" stop-color="#004cff"/><stop offset="0.238" stop-color="#0e44ff"/><stop offset="0.286" stop-color="#313bff"/><stop offset="0.333" stop-color="#5233ff"/><stop offset="0.381" stop-color="#7129ff"/><stop offset="0.429" stop-color="#901fff"/><stop offset="0.476" stop-color="#ae14ff"/><stop offset="0.524" stop-color="#cc08ff"/><stop offset="0.571" stop-color="#eb00ff"/><stop offset="0.619" stop-color="#ff00f6"/><stop offset="0.667" stop-color="#ff00dc"/><stop offset="0.714" stop-color="#ff00c8"/><stop offset="0.762" stop-color="#ff00b6"/><stop offset="0.81" stop-color="#ff00a8"/><stop offset="0.857" stop-color="#ff009b"/><stop offset="0.905" stop-color="#ff0090"/><stop offset="0.952" stop-color="#ff0087"/><stop offset="1" stop-color="#ff007e"/></linearGradient>
<linearGradient id="g81"><stop offset="0" stop-color="#0068ff"/><stop offset="0.0476" stop-color="#0061ff"/><stop offset="0.0952" stop-color="#005aff"/><stop offset="0.143" stop-color="#0052ff"/><stop offset="0.19" stop-color="#004aff"/><stop offset="0.238" stop-color="#0d42ff"/><stop offset="0.286" stop-color="#303aff"/><stop offset="0.333" stop-color="#5031ff"/><stop offset="0.381" stop-color="#6f27ff"/><stop offset="0.429" stop-color="#8d1eff"/><stop offset="0.476" stop-color="#ab13ff"/><stop offset="0.524" stop-color="#c807ff"/><stop offset="0.571" stop-color="#e600ff"/><stop offset="0.619" stop-color="#ff00fb"/><stop offset="0.667" stop-color="#ff00e1"/><stop offset="0.714" stop-color="#ff00cc"/><stop offset="0.762" stop-color="#ff00bb"/><stop offset="0.81" stop-color="#ff00ac"/><stop offset="0.857" stop-color="#ff009f"/><stop offset="0.905" stop-color="#ff0094"/><stop offset="0.952" stop-color="#ff008a"/><stop offset="1" stop-color="#ff0081"/></linearGradient>
<linearGradient id="g82"><stop offset="0" stop-color="#0065ff"/><stop offset="0.05" stop-color="#005eff"/><stop offset="0.1" stop-color="#0056ff"/><stop offset="0.15" stop-color="#004fff"/><stop offset="0.2" stop-color="#0046ff"/><stop offset="0.25" stop-color="#163eff"/><stop offset="0.3" stop-color="#3935ff"/><stop offset="0.35" stop-color="#592cff"/><stop offset="0.4" stop-color="#7822ff"/><stop offset="0.45" stop-color="#9718ff"/><stop offset="0.5" stop-color="#b50cff"/><stop offset="0.55" stop-color="#d400ff"/><stop offset="0.6" stop-color="#f200ff"/><stop offset="0.65" stop-color="#ff00ef"/><stop offset="0.7" stop-color="#ff00d7"/><stop offset="0.75" stop-color="#ff00c3"/><stop offset="0.8" stop-color="#ff00b2"/><stop offset="0.85" stop-color="#ff00a4"/><stop offset="0.9" stop-color="#ff0098"/><stop offset="0.95" stop-color="#ff008e"/><stop offset="1" stop-color="#ff0084"/></linearGradient>
<linearGradient id="g83"><stop offset="0" stop-color="#0063ff"/><stop offset="0.05" stop-color="#005cff"/><stop offset="0.1" stop-color="#0054ff"/><stop offset="0.15" stop-color="#004cff"/><stop offset="0.2" stop-color="#0044ff"/><stop offset="0.25" stop-color="#163cff"/><stop offset="0.3" stop-color="#3833ff"/><stop offset="0.35" stop-color="#572aff"/><stop offset="0.4" stop-color="#7620ff"/><stop offset="0.45" stop-color="#9416ff"/><stop offset="0.5" stop-color="#b20bff"/><stop offset="0.55" stop-color="#cf00ff"/><stop offset="0.6" stop-color="#ed00ff"/><stop offset="0.65" stop-color="#ff00f4"/><stop offset="0.7" stop-color="#ff00db"/><stop offset="0.75" stop-color="#ff00c7"/><stop offset="0.8" stop-color="#ff00b6"/><stop offset="0.85" stop-color="#ff00a8"/><stop offset="0.9" stop-color="#ff009c"/><stop offset="0.95" stop-color="#ff0091"/><stop offset="1" stop-color="#ff0087"/></linearGradient>
<linearGradient id="g84"><stop offset="0" stop-color="#0060ff"/><stop offset="0.05" stop-color="#0059ff"/><stop offset="0.1" stop-color="#0052ff"/><stop offset="0.15" stop-color="#004aff"/><stop offset="0.2" stop-color="#0042ff"/><stop offset="0.25" stop-color="#153aff"/><stop offset="0.3" stop-color="#3731ff"/><stop offset="0.35" stop-color="#5628ff"/><stop offset="0.4" stop-color="#741fff"/><stop offset="0.45" stop-color="#9115ff"/><stop offset="0.5" stop-color="#ae09ff"/><stop offset="0.55" stop-color="#cb00ff"/><stop offset="0.6" stop-color="#e800ff"/><stop offset="0.65" stop-color="#ff00f9"/><stop offset="0.7" stop-color="#ff00e0"/><stop offset="0.75" stop-color="#ff00cc"/><stop offset="0.8" stop-color="#ff00bb"/><stop offset="0.85" stop-color="#ff00ac"/><stop offset="0.9" stop-color="#ff009f"/><stop offset="0.95" stop-color="#ff0094"/><stop offset="1" stop-color="#ff008a"/></linearGradient>
<linearGradient id="g85"><stop offset="0" stop-color="#005eff"/><stop offset="0.05" stop-color="#0057ff"/><stop offset="0.1" stop-color="#004fff"/><stop offset="0.15" stop-color="#0048ff"/><stop offset="0.2" stop-color="#0040ff"/><stop offset="0.25" stop-color="#1538ff"/><stop offset="0.3" stop-color="#3630ff"/><stop offset="0.35" stop-color="#5427ff"/><stop offset="0.4" stop-color="#711dff"/><stop offset="0.45" stop-color="#8e13ff"/><stop offset="0.5" stop-color="#ab08ff"/><stop offset="0.55" stop-color="#c700ff"/><stop offset="0.6" stop-color="#e300ff"/><stop offset="0.65" stop-color="#ff00ff"/><stop offset="0.7" stop-color="#ff00e5"/><stop offset="0.75" stop-color="#ff00d0"/><stop offset="0.8" stop-color="#ff00bf"/><stop offset="0.85" stop-color="#ff00b0"/><stop offset="0.9" stop-color="#ff00a3"/><stop offset="0.95" stop-color="#ff0098"/><stop offset="1" stop-color="#ff008e"/></linearGradient>
<linearGradient id="g86"><stop offset="0" stop-color="#005bff"/><stop offset="0.05" stop-color="#0054ff"/><stop offset="0.1" stop-color="#004dff"/><stop offset="0.15" stop-color="#0046ff"/><stop offset="0.2" stop-color="#003eff"/><stop offset="0.25" stop-color="#1536ff"/><stop offset="0.3" stop-color="#352eff"/><stop offset="0.35" stop-color="#5325ff"/><stop offset="0.4" stop-color="#701cff"/><stop offset="0.45" stop-color="#8c12ff"/><stop offset="0.5" stop-color="#a807ff"/><stop offset="0.55" stop-color="#c400ff"/><stop offset="0.6" stop-color="#df00ff"/><stop offset="0.65" stop-color="#fb00ff"/><stop offset="0.7" stop-color="#ff00e9"/><stop offset="0.75" stop-color="#ff00d4"/><stop offset="0.8" stop-color="#ff00c2"/><stop offset="0.85" stop-color="#ff00b3"/><stop offset="0.9" stop-color="#ff00a6"/><stop offset="0.95" stop-color="#ff009a"/><stop offset="1" stop-color="#ff0090"/></linearGradient>
<linearGradient id="g87"><stop offset="0" stop-color="#0059ff"/><stop offset="0.0526" stop-color="#0052ff"/><stop offset="0.105" stop-color="#004aff"/><stop offset="0.158" stop-color="#0043ff"/><stop offset="0.211" stop-color="#003aff"/><stop offset="0.263" stop-color="#1d32ff"/><stop offset="0.316" stop-color="#3e29ff"/><stop offset="0.368" stop-color="#5c20ff"/><stop offset="0.421" stop-color="#7916ff"/><stop offset="0.474" stop-color="#960bff"/><stop offset="0.526" stop-color="#b300ff"/><stop offset="0.579" stop-color="#cf00ff"/><stop offset="0.632" stop-color="#ec00ff"/><stop offset="0.684" stop-color="#ff00f6"/><stop offset="0.737" stop-color="#ff00de"/><stop offset="0.789" stop-color="#ff00ca"/><stop offset="0.842" stop-color="#ff00b9"/><stop offset="0.895" stop-color="#ff00ab"/><stop offset="0.947" stop-color="#ff009f"/><stop offset="1" stop-color="#ff0094"/></linearGradient>
<linearGradient id="g88"><stop offset="0" stop-color="#0056ff"/><stop offset="0.0526" stop-color="#004fff"/><stop offset="0.105" stop-color="#0048ff"/><stop offset="0.158" stop-color="#0040ff"/><stop offset="0.211" stop-color="#0038ff"/><stop offset="0.263" stop-color="#1e30ff"/><stop offset="0.316" stop-color="#3e27ff"/><stop offset="0.368" stop-color="#5b1eff"/><stop offset="0.421" stop-color="#7814ff"/><stop offset="0.474" stop-color="#940aff"/><stop offset="0.526" stop-color="#b000ff"/><stop offset="0.579" stop-color="#cc00ff"/><stop offset="0.632" stop-color="#e800ff"/><stop offset="0.684" stop-color="#ff00fb"/><stop offset="0.737" stop-color="#ff00e2"/><stop offset="0.789" stop-color="#ff00ce"/><stop offset="0.842" stop-color="#ff00bd"/><stop offset="0.895" stop-color="#ff00af"/><stop offset="0.947" stop-color="#ff00a2"/><stop offset="1" stop-color="#ff0097"/></linearGradient>
<linearGradient id="g89"><stop offset="0" stop-color="#0054ff"/><stop offset="0.0526" stop-color="#004dff"/><stop offset="0.105" stop-color="#0046ff"/><stop offset="0.158" stop-color="#003eff"/><stop offset="0.211" stop-color="#0036ff"/><stop offset="0.263" stop-color="#1e2eff"/><stop offset="0.316" stop-color="#3d26ff"/><stop offset="0.368" stop-color="#591dff"/><stop offset="0.421" stop-color="#7613ff"/><stop offset="0.474" stop-color="#9109ff"/><stop offset="0.526" stop-color="#ac00ff"/><stop offset="0.579" stop-color="#c800ff"/><stop offset="0.632" stop-color="#e300ff"/><stop offset="0.684" stop-color="#fe00ff"/><stop offset="0.737" stop-color="#ff00e7"/><stop offset="0.789" stop-color="#ff00d3"/><stop offset="0.842" stop-color="#ff00c1"/><stop offset="0.895" stop-color="#ff00b2"/><stop offset="0.947" stop-color="#ff00a6"/><stop offset="1" stop-color="#ff009b"/></linearGradient>
<linearGradient id="g90"><stop offset="0" stop-color="#0052ff"/><stop offset="0.0526" stop-color="#004bff"/><stop offset="0.105" stop-color="#0044ff"/><stop offset="0.158" stop-color="#003cff"/><stop offset="0.211" stop-color="#0035ff"/><stop offset="0.263" stop-color="#1d2dff"/><stop offset="0.316" stop-color="#3b24ff"/><stop offset="0.368" stop-color="#581bff"/><stop offset="0.421" stop-color="#7312ff"/><stop offset="0.474" stop-color="#8e07ff"/><stop offset="0.526" stop-color="#a900ff"/><stop offset="0.579" stop-color="#c400ff"/><stop offset="0.632" stop-color="#de00ff"/><stop offset="0.684" stop-color="#f900ff"/><stop offset="0.737" stop-color="#ff00ec"/><stop offset="0.789" stop-color="#ff00d7"/><stop offset="0.842" stop-color="#ff00c5"/><stop offset="0.895" stop-color="#ff00b6"/><stop offset="0.947" stop-color="#ff00a9"/><stop offset="1" stop-color="#ff009e"/></linearGradient>
<linearGradient id="g91"><stop offset="0" stop-color="#004fff"/><stop offset="0.0526" stop-color="#0049ff"/><stop offset="0.105" stop-color="#0042ff"/><stop offset="0.158" stop-color="#003aff"/><stop offset="0.211" stop-color="#0033ff"/><stop offset="0.263" stop-color="#1d2bff"/><stop offset="0.316" stop-color="#3a23ff"/><stop offset="0.368" stop-color="#561aff"/><stop offset="0.421" stop-color="#7111ff"/><stop offset="0.474" stop-color="#8b06ff"/><stop offset="0.526" stop-color="#a600ff"/><stop offset="0.579" stop-color="#c000ff"/><stop offset="0.632" stop-color="#da00ff"/><stop offset="0.684" stop-color="#f400ff"/><stop offset="0.737" stop-color="#ff00f1"/><stop offset="0.789" stop-color="#ff00dc"/><stop offset="0.842" stop-color="#ff00ca"/><stop offset="0.895" stop-color="#ff00ba"/><stop offset="0.947" stop-color="#ff00ad"/><stop offset="1" stop-color="#ff00a2"/></linearGradient>
<linearGradient id="g92"><stop offset="0" stop-color="#004dff"/><stop offset="0.0556" stop-color="#0046ff"/><stop offset="0.111" stop-color="#003fff"/><stop offset="0.167" stop-color="#0037ff"/><stop offset="0.222" stop-color="#022fff"/><stop offset="0.278" stop-color="#2527ff"/><stop offset="0.333" stop-color="#421eff"/><stop offset="0.389" stop-color="#5f15ff"/><stop offset="0.444" stop-color="#7a0bff"/><stop offset="0.5" stop-color="#9600ff"/><stop offset="0.556" stop-color="#b000ff"/><stop offset="0.611" stop-color="#cb00ff"/><stop offset="0.667" stop-color="#e600ff"/><stop offset="0.722" stop-color="#ff00fd"/><stop offset="0.778" stop-color="#ff00e5"/><stop offset="0.833" stop-color="#ff00d1"/><stop offset="0.889" stop-color="#ff00c0"/><stop offset="0.944" stop-color="#ff00b2"/><stop offset="1" stop-color="#ff00a5"/></linearGradient>
<linearGradient id="g93"><stop offset="0" stop-color="#004bff"/><stop offset="0.0556" stop-color="#0044ff"/><stop offset="0.111" stop-color="#003dff"/><stop offset="0.167" stop-color="#0035ff"/><stop offset="0.222" stop-color="#022eff"/><stop offset="0.278" stop-color="#2425ff"/><stop offset="0.333" stop-color="#411dff"/><stop offset="0.389" stop-color="#5d14ff"/><stop offset="0.444" stop-color="#780aff"/><stop offset="0.5" stop-color="#9300ff"/><stop offset="0.556" stop-color="#ad00ff"/><stop offset="0.611" stop-color="#c700ff"/><stop offset="0.667" stop-color="#e100ff"/><stop offset="0.722" stop-color="#fc00ff"/><stop offset="0.778" stop-color="#ff00ea"/><stop offset="0.833" stop-color="#ff00d5"/><stop offset="0.889" stop-color="#ff00c4"/><stop offset="0.944" stop-color="#ff00b6"/><stop offset="1" stop-color="#ff00a9"/></linearGradient>
<linearGradient id="g94"><stop offset="0" stop-color="#0049ff"/><stop offset="0.0556" stop-color="#0042ff"/><stop offset="0.111" stop-color="#003bff"/><stop offset="0.167" stop-color="#0033ff"/><stop offset="0.222" stop-color="#042cff"/><stop offset="0.278" stop-color="#2524ff"/><stop offset="0.333" stop-color="#411bff"/><stop offset="0.389" stop-color="#5c12ff"/><stop offset="0.444" stop-color="#7608ff"/><stop offset="0.5" stop-color="#9000ff"/><stop offset="0.556" stop-color="#aa00ff"/><stop offset="0.611" stop-color="#c400ff"/><stop offset="0.667" stop-color="#dd00ff"/><stop offset="0.722" stop-color="#f700ff"/><stop offset="0.778" stop-color="#ff00ee"/><stop offset="0.833" stop-color="#ff00da"/><stop offset="0.889" stop-color="#ff00c8"/><stop offset="0.944" stop-color="#ff00ba"/><stop offset="1" stop-color="#ff00ad"/></linearGradient>
<linearGradient id="g95"><stop offset="0" stop-color="#0047ff"/><stop offset="0.0556" stop-color="#0040ff"/><stop offset="0.111" stop-color="#0039ff"/><stop offset="0.167" stop-color="#0032ff"/><stop offset="0.222" stop-color="#042aff"/><stop offset="0.278" stop-color="#2422ff"/><stop offset="0.333" stop-color="#401aff"/><stop offset="0.389" stop-color="#5a11ff"/><stop offset="0.444" stop-color="#7407ff"/><stop offset="0.5" stop-color="#8e00ff"/><stop offset="0.556" stop-color="#a700ff"/><stop offset="0.611" stop-color="#c000ff"/><stop offset="0.667" stop-color="#d900ff"/><stop offset="0.722" stop-color="#f200ff"/><stop offset="0.778" stop-color="#ff00f4"/><stop offset="0.833" stop-color="#ff00df"/><stop offset="0.889" stop-color="#ff00cd"/><stop offset="0.944" stop-color="#ff00be"/><stop offset="1" stop-color="#ff00b0"/></linearGradient>
<linearGradient id="g96"><stop offset="0" stop-color="#0045ff"/><stop offset="0.0556" stop-color="#003eff"/><stop offset="0.111" stop-color="#0037ff"/><stop offset="0.167" stop-color="#0030ff"/><stop offset="0.222" stop-color="#0428ff"/><stop offset="0.278" stop-color="#2321ff"/><stop offset="0.333" stop-color="#3f18ff"/><stop offset="0.389" stop-color="#590fff"/><stop offset="0.444" stop-color="#7206ff"/><stop offset="0.5" stop-color="#8b00ff"/><stop offset="0.556" stop-color="#a400ff"/><stop offset="0.611" stop-color="#bc00ff"/><stop offset="0.667" stop-color="#d400ff"/><stop offset="0.722" stop-color="#ed00ff"/><stop offset="0.778" stop-color="#ff00f9"/><stop offset="0.833" stop-color="#ff00e3"/><stop offset="0.889" stop-color="#ff00d1"/><stop offset="0.944" stop-color="#ff00c2"/><stop offset="1" stop-color="#ff00b4"/></linearGradient>
<linearGradient id="g97"><stop offset="0" stop-color="#0043ff"/><stop offset="0.0588" stop-color="#003cff"/><stop offset="0.118" stop-color="#0034ff"/><stop offset="0.176" stop-color="#002dff"/><stop offset="0.235" stop-color="#0c25ff"/><stop offset="0.294" stop-color="#2b1dff"/><stop offset="0.353" stop-color="#4714ff"/><stop offset="0.412" stop-color="#610aff"/><stop offset="0.471" stop-color="#7b00ff"/><stop offset="0.529" stop-color="#9500ff"/><stop offset="0.588" stop-color="#ae00ff"/><stop offset="0.647" stop-color="#c800ff"/><stop offset="0.706" stop-color="#e100ff"/><stop offset="0.765" stop-color="#fa00ff"/><stop offset="0.824" stop-color="#ff00ec"/><stop offset="0.882" stop-color="#ff00d8"/><stop offset="0.941" stop-color="#ff00c7"/><stop offset="1" stop-color="#ff00b8"/></linearGradient>
<linearGradient id="g98"><stop offset="0" stop-color="#0041ff"/><stop offset="0.0588" stop-color="#003aff"/><stop offset="0.118" stop-color="#0033ff"/><stop offset="0.176" stop-color="#002bff"/><stop offset="0.235" stop-color="#0c23ff"/><stop offset="0.294" stop-color="#2a1bff"/><stop offset="0.353" stop-color="#4513ff"/><stop offset="0.412" stop-color="#5f09ff"/><stop offset="0.471" stop-color="#7900ff"/><stop offset="0.529" stop-color="#9200ff"/><stop offset="0.588" stop-color="#ab00ff"/><stop offset="0.647" stop-color="#c400ff"/><stop offset="0.706" stop-color="#dd00ff"/><stop offset="0.765" stop-color="#f500ff"/><stop offset="0.824" stop-color="#ff00f1"/><stop offset="0.882" stop-color="#ff00dc"/><stop offset="0.941" stop-color="#ff00cb"/><stop offset="1" stop-color="#ff00bc"/></linearGradient>
<linearGradient id="g99"><stop offset="0" stop-color="#003eff"/><stop offset="0.0588" stop-color="#0038ff"/><stop offset="0.118" stop-color="#0031ff"/><stop offset="0.176" stop-color="#0029ff"/><stop offset="0.235" stop-color="#0d22ff"/><stop offset="0.294" stop-color="#2a1aff"/><stop offset="0.353" stop-color="#4511ff"/><stop offset="0.412" stop-color="#5e08ff"/><stop offset="0.471" stop-color="#7700ff"/><stop offset="0.529" stop-color="#9000ff"/><stop offset="0.588" stop-color="#a800ff"/><stop offset="0.647" stop-color="#c000ff"/><stop offset="0.706" stop-color="#d800ff"/><stop offset="0.765" stop-color="#f100ff"/><stop offset="0.824" stop-color="#ff00f6"/><stop offset="0.882" stop-color="#ff00e1"/><stop offset="0.941" stop-color="#ff00cf"/><stop offset="1" stop-color="#ff00c0"/></linearGradient>
<linearGradient id="g100"><stop offset="0" stop-color="#003cff"/><stop offset="0.0588" stop-color="#0036ff"/><stop offset="0.118" stop-color="#002fff"/><stop offset="0.176" stop-color="#0028ff"/><stop offset="0.235" stop-color="#0d20ff"/><stop offset="0.294" stop-color="#2a18ff"/><stop offset="0.353" stop-color="#4410ff"/><stop offset="0.412" stop-color="#5d06ff"/><stop offset="0.471" stop-color="#7500ff"/><stop offset="0.529" stop-color="#8d00ff"/><stop offset="0.588" stop-color="#a500ff"/><stop offset="0.647" stop-color="#bc00ff"/><stop offset="0.706" stop-color="#d400ff"/><stop offset="0.765" stop-color="#ec00ff"/><stop offset="0.824" stop-color="#ff00fb"/><stop offset="0.882" stop-color="#ff00e6"/><stop offset="0.941" stop-color="#ff00d4"/><stop offset="1" stop-color="#ff00c4"/></linearGradient>
<linearGradient id="g101"><stop offset="0" stop-color="#003bff"/><stop offset="0.0588" stop-color="#0034ff"/><stop offset="0.118" stop-color="#002dff"/><stop offset="0.176" stop-color="#0026ff"/><stop offset="0.235" stop-color="#0d1fff"/><stop offset="0.294" stop-color="#2917ff"/><stop offset="0.353" stop-color="#420eff"/><stop offset="0.412" stop-color="#5b05ff"/><stop offset="0.471" stop-color="#7300ff"/><stop offset="0.529" stop-color="#8a00ff"/><stop offset="0.588" stop-color="#a200ff"/><stop offset="0.647" stop-color="#b900ff"/><stop offset="0.706" stop-color="#d000ff"/><stop offset="0.765" stop-color="#e700ff"/><stop offset="0.824" stop-color="#fe00ff"/><stop offset="0.882" stop-color="#ff00eb"/><stop offset="0.941" stop-color="#ff00d8"/><stop offset="1" stop-color="#ff00c9"/></linearGradient>
<linearGradient id="g102"><stop offset="0" stop-color="#0039ff"/><stop offset="0.0625" stop-color="#0032ff"/><stop offset="0.125" stop-color="#002bff"/><stop offset="0.188" stop-color="#0023ff"/><stop offset="0.25" stop-color="#141bff"/><stop offset="0.312" stop-color="#3013ff"/><stop offset="0.375" stop-color="#4a0aff"/><stop offset="0.438" stop-color="#6300ff"/><stop offset="0.5" stop-color="#7c00ff"/><stop offset="0.562" stop-color="#9400ff"/><stop offset="0.625" stop-color="#ad00ff"/><stop offset="0.688" stop-color="#c500ff"/><stop offset="0.75" stop-color="#dd00ff"/><stop offset="0.812" stop-color="#f500ff"/><stop offset="0.875" stop-color="#ff00f2"/><stop offset="0.938" stop-color="#ff00de"/><stop offset="1" stop-color="#ff00cd"/></linearGradient>
<linearGradient id="g103"><stop offset="0" stop-color="#0037ff"/><stop offset="0.0625" stop-color="#0030ff"/><stop offset="0.125" stop-color="#0029ff"/><stop offset="0.188" stop-color="#0022ff"/><stop offset="0.25" stop-color="#141aff"/><stop offset="0.312" stop-color="#2f12ff"/><stop offset="0.375" stop-color="#4909ff"/><stop offset="0.438" stop-color="#6200ff"/><stop offset="0.5" stop-color="#7a00ff"/><stop offset="0.562" stop-color="#9100ff"/><stop offset="0.625" stop-color="#a900ff"/><stop offset="0.688" stop-color="#c100ff"/><stop offset="0.75" stop-color="#d800ff"/><stop offset="0.812" stop-color="#f000ff"/><stop offset="0.875" stop-color="#ff00f7"/><stop offset="0.938" stop-color="#ff00e3"/><stop offset="1" stop-color="#ff00d1"/></linearGradient>
<linearGradient id="g104"><stop offset="0" stop-color="#0035ff"/><stop offset="0.0625" stop-color="#002eff"/><stop offset="0.125" stop-color="#0027ff"/><stop offset="0.188" stop-color="#0020ff"/><stop offset="0.25" stop-color="#1518ff"/><stop offset="0.312" stop-color="#3010ff"/><stop offset="0.375" stop-color="#4807ff"/><stop offset="0.438" stop-color="#6000ff"/><stop offset="0.5" stop-color="#7800ff"/><stop offset="0.562" stop-color="#8f00ff"/><stop offset="0.625" stop-color="#a600ff"/><stop offset="0.688" stop-color="#bd00ff"/><stop offset="0.75" stop-color="#d400ff"/><stop offset="0.812" stop-color="#eb00ff"/><stop offset="0.875" stop-color="#ff00fc"/><stop offset="0.938" stop-color="#ff00e8"/><stop offset="1" stop-color="#ff00d6"/></linearGradient>
<linearGradient id="g105"><stop offset="0" stop-color="#0033ff"/><stop offset="0.0625" stop-color="#002cff"/><stop offset="0.125" stop-color="#0025ff"/><stop offset="0.188" stop-color="#001eff"/><stop offset="0.25" stop-color="#1517ff"/><stop offset="0.312" stop-color="#2f0fff"/><stop offset="0.375" stop-color="#4806ff"/><stop offset="0.438" stop-color="#5f00ff"/><stop offset="0.5" stop-color="#7600ff"/><stop offset="0.562" stop-color="#8d00ff"/><stop offset="0.625" stop-color="#a400ff"/><stop offset="0.688" stop-color="#ba00ff"/><stop offset="0.75" stop-color="#d100ff"/><stop offset="0.812" stop-color="#e700ff"/><stop offset="0.875" stop-color="#fe00ff"/><stop offset="0.938" stop-color="#ff00eb"/><stop offset="1" stop-color="#ff00da"/></linearGradient>
<linearGradient id="g106"><stop offset="0" stop-color="#0031ff"/><stop offset="0.0625" stop-color="#002bff"/><stop offset="0.125" stop-color="#0024ff"/><stop offset="0.188" stop-color="#001dff"/><stop offset="0.25" stop-color="#1515ff"/><stop offset="0.312" stop-color="#2e0dff"/><stop offset="0.375" stop-color="#4604ff"/><stop offset="0.438" stop-color="#5d00ff"/><stop offset="0.5" stop-color="#7400ff"/><stop offset="0.562" stop-color="#8a00ff"/><stop offset="0.625" stop-color="#a100ff"/><stop offset="0.688" stop-color="#b700ff"/><stop offset="0.75" stop-color="#cd00ff"/><stop offset="0.812" stop-color="#e300ff"/><stop offset="0.875" stop-color="#f900ff"/><stop offset="0.938" stop-color="#ff00f0"/><stop offset="1" stop-color="#ff00de"/></linearGradient>
<linearGradient id="g107"><stop offset="0" stop-color="#002fff"/><stop offset="0.0667" stop-color="#0028ff"/><stop offset="0.133" stop-color="#0021ff"/><stop offset="0.2" stop-color="#001aff"/><stop offset="0.267" stop-color="#1c12ff"/><stop offset="0.333" stop-color="#3709ff"/><stop offset="0.4" stop-color="#4f00ff"/><stop offset="0.467" stop-color="#6700ff"/><stop offset="0.533" stop-color="#7e00ff"/><stop offset="0.6" stop-color="#9500ff"/><stop offset="0.667" stop-color="#ac00ff"/><stop offset="0.733" stop-color="#c300ff"/><stop offset="0.8" stop-color="#da00ff"/><stop offset="0.867" stop-color="#f100ff"/><stop offset="0.933" stop-color="#ff00f7"/><stop offset="1" stop-color="#ff00e3"/></linearGradient>
<linearGradient id="g108"><stop offset="0" stop-color="#002dff"/><stop offset="0.0667" stop-color="#0027ff"/><stop offset="0.133" stop-color="#0020ff"/><stop offset="0.2" stop-color="#0018ff"/><stop offset="0.267" stop-color="#1c10ff"/><stop offset="0.333" stop-color="#3608ff"/><stop offset="0.4" stop-color="#4e00ff"/><stop offset="0.467" stop-color="#6500ff"/><stop offset="0.533" stop-color="#7c00ff"/><stop offset="0.6" stop-color="#9200ff"/><stop offset="0.667" stop-color="#a900ff"/><stop offset="0.733" stop-color="#bf00ff"/><stop offset="0.8" stop-color="#d500ff"/><stop offset="0.867" stop-color="#ec00ff"/><stop offset="0.933" stop-color="#ff00fc"/><stop offset="1" stop-color="#ff00e8"/></linearGradient>
<linearGradient id="g109"><stop offset="0" stop-color="#002cff"/><stop offset="0.0667" stop-color="#0025ff"/><stop offset="0.133" stop-color="#001eff"/><stop offset="0.2" stop-color="#0017ff"/><stop offset="0.267" stop-color="#1c0fff"/><stop offset="0.333" stop-color="#3506ff"/><stop offset="0.4" stop-color="#4c00ff"/><stop offset="0.467" stop-color="#6300ff"/><stop offset="0.533" stop-color="#7900ff"/><stop offset="0.6" stop-color="#8f00ff"/><stop offset="0.667" stop-color="#a500ff"/><stop offset="0.733" stop-color="#bb00ff"/><stop offset="0.8" stop-color="#d100ff"/><stop offset="0.867" stop-color="#e700ff"/><stop offset="0.933" stop-color="#fd00ff"/><stop offset="1" stop-color="#ff00ed"/></linearGradient>
<linearGradient id="g110"><stop offset="0" stop-color="#002aff"/><stop offset="0.0667" stop-color="#0024ff"/><stop offset="0.133" stop-color="#001dff"/><stop offset="0.2" stop-color="#0016ff"/><stop offset="0.267" stop-color="#1b0eff"/><stop offset="0.333" stop-color="#3405ff"/><stop offset="0.4" stop-color="#4b00ff"/><stop offset="0.467" stop-color="#6100ff"/><stop offset="0.533" stop-color="#7700ff"/><stop offset="0.6" stop-color="#8d00ff"/><stop offset="0.667" stop-color="#a200ff"/><stop offset="0.733" stop-color="#b700ff"/><stop offset="0.8" stop-color="#cd00ff"/><stop offset="0.867" stop-color="#e200ff"/><stop offset="0.933" stop-color="#f700ff"/><stop offset="1" stop-color="#ff00f2"/></linearGradient>
<linearGradient id="g111"><stop offset="0" stop-color="#0028ff"/><stop offset="0.0667" stop-color="#0022ff"/><stop offset="0.133" stop-color="#001bff"/><stop offset="0.2" stop-color="#0014ff"/><stop offset="0.267" stop-color="#1c0cff"/><stop offset="0.333" stop-color="#3404ff"/><stop offset="0.4" stop-color="#4a00ff"/><stop offset="0.467" stop-color="#6000ff"/><stop offset="0.533" stop-color="#7500ff"/><stop offset="0.6" stop-color="#8a00ff"/><stop offset="0.667" stop-color="#9f00ff"/><stop offset="0.733" stop-color="#b400ff"/><stop offset="0.8" stop-color="#c900ff"/><stop offset="0.867" stop-color="#de00ff"/><stop offset="0.933" stop-color="#f200ff"/><stop offset="1" stop-color="#ff00f7"/></linearGradient>
<linearGradient id="g112"><stop offset="0" stop-color="#0027ff"/><stop offset="0.0714" stop-color="#0020ff"/><stop offset="0.143" stop-color="#0019ff"/><stop offset="0.214" stop-color="#0711ff"/><stop offset="0.286" stop-color="#2209ff"/><stop offset="0.357" stop-color="#3b00ff"/><stop offset="0.429" stop-color="#5200ff"/><stop offset="0.5" stop-color="#6900ff"/><stop offset="0.571" stop-color="#7f00ff"/><stop offset="0.643" stop-color="#9500ff"/><stop offset="0.714" stop-color="#ab00ff"/><stop offset="0.786" stop-color="#c000ff"/><stop offset="0.857" stop-color="#d600ff"/><stop offset="0.929" stop-color="#ec00ff"/><stop offset="1" stop-color="#ff00fc"/></linearGradient>
<linearGradient id="g113"><stop offset="0" stop-color="#0025ff"/><stop offset="0.0714" stop-color="#001eff"/><stop offset="0.143" stop-color="#0017ff"/><stop offset="0.214" stop-color="#0710ff"/><stop offset="0.286" stop-color="#2207ff"/><stop offset="0.357" stop-color="#3a00ff"/><stop offset="0.429" stop-color="#5000ff"/><stop offset="0.5" stop-color="#6700ff"/><stop offset="0.571" stop-color="#7c00ff"/><stop offset="0.643" stop-color="#9200ff"/><stop offset="0.714" stop-color="#a700ff"/><stop offset="0.786" stop-color="#bc00ff"/><stop offset="0.857" stop-color="#d200ff"/><stop offset="0.929" stop-color="#e700ff"/><stop offset="1" stop-color="#fc00ff"/></linearGradient>
<linearGradient id="g114"><stop offset="0" stop-color="#0023ff"/><stop offset="0.0714" stop-color="#001cff"/><stop offset="0.143" stop-color="#0015ff"/><stop offset="0.214" stop-color="#080eff"/><stop offset="0.286" stop-color="#2206ff"/><stop offset="0.357" stop-color="#3a00ff"/><stop offset="0.429" stop-color="#5000ff"/><stop offset="0.5" stop-color="#6500ff"/><stop offset="0.571" stop-color="#7a00ff"/><stop offset="0.643" stop-color="#8f00ff"/><stop offset="0.714" stop-color="#a400ff"/><stop offset="0.786" stop-color="#b900ff"/><stop offset="0.857" stop-color="#ce00ff"/><stop offset="0.929" stop-color="#e200ff"/><stop offset="1" stop-color="#f700ff"/></linearGradient>
<linearGradient id="g115"><stop offset="0" stop-color="#0021ff"/><stop offset="0.0714" stop-color="#001bff"/><stop offset="0.143" stop-color="#0014ff"/><stop offset="0.214" stop-color="#080dff"/><stop offset="0.286" stop-color="#2204ff"/><stop offset="0.357" stop-color="#3800ff"/><stop offset="0.429" stop-color="#4e00ff"/><stop offset="0.5" stop-color="#6300ff"/><stop offset="0.571" stop-color="#7800ff"/><stop offset="0.643" stop-color="#8d00ff"/><stop offset="0.714" stop-color="#a100ff"/><stop offset="0.786" stop-color="#b500ff"/><stop offset="0.857" stop-color="#c900ff"/><stop offset="0.929" stop-color="#dd00ff"/><stop offset="1" stop-color="#f200ff"/></linearGradient>
<linearGradient id="g116"><stop offset="0" stop-color="#0020ff"/><stop offset="0.0714" stop-color="#0019ff"/><stop offset="0.143" stop-color="#0013ff"/><stop offset="0.214" stop-color="#080bff"/><stop offset="0.286" stop-color="#2103ff"/><stop offset="0.357" stop-color="#3700ff"/><stop offset="0.429" stop-color="#4d00ff"/><stop offset="0.5" stop-color="#6100ff"/><stop offset="0.571" stop-color="#7600ff"/><stop offset="0.643" stop-color="#8a00ff"/><stop offset="0.714" stop-color="#9e00ff"/><stop offset="0.786" stop-color="#b100ff"/><stop offset="0.857" stop-color="#c500ff"/><stop offset="0.929" stop-color="#d900ff"/><stop offset="1" stop-color="#ec00ff"/></linearGradient>
<linearGradient id="g117"><stop offset="0" stop-color="#001eff"/><stop offset="0.0769" stop-color="#0017ff"/><stop offset="0.154" stop-color="#0010ff"/><stop offset="0.231" stop-color="#1008ff"/><stop offset="0.308" stop-color="#2900ff"/><stop offset="0.385" stop-color="#3f00ff"/><stop offset="0.462" stop-color="#5500ff"/><stop offset="0.538" stop-color="#6b00ff"/><stop offset="0.615" stop-color="#8000ff"/><stop offset="0.692" stop-color="#9500ff"/><stop offset="0.769" stop-color="#aa00ff"/><stop offset="0.846" stop-color="#be00ff"/><stop offset="0.923" stop-color="#d300ff"/><stop offset="1" stop-color="#e700ff"/></linearGradient>
<linearGradient id="g118"><stop offset="0" stop-color="#001cff"/><stop offset="0.0769" stop-color="#0016ff"/><stop offset="0.154" stop-color="#000fff"/><stop offset="0.231" stop-color="#1007ff"/><stop offset="0.308" stop-color="#2800ff"/><stop offset="0.385" stop-color="#3e00ff"/><stop offset="0.462" stop-color="#5400ff"/><stop offset="0.538" stop-color="#6900ff"/><stop offset="0.615" stop-color="#7d00ff"/><stop offset="0.692" stop-color="#9200ff"/><stop offset="0.769" stop-color="#a600ff"/><stop offset="0.846" stop-color="#ba00ff"/><stop offset="0.923" stop-color="#ce00ff"/><stop offset="1" stop-color="#e200ff"/></linearGradient>
<linearGradient id="g119"><stop offset="0" stop-color="#001bff"/><stop offset="0.0769" stop-color="#0014ff"/><stop offset="0.154" stop-color="#000dff"/><stop offset="0.231" stop-color="#1105ff"/><stop offset="0.308" stop-color="#2800ff"/><stop offset="0.385" stop-color="#3e00ff"/><stop offset="0.462" stop-color="#5300ff"/><stop offset="0.538" stop-color="#6700ff"/><stop offset="0.615" stop-color="#7b00ff"/><stop offset="0.692" stop-color="#8f00ff"/><stop offset="0.769" stop-color="#a300ff"/><stop offset="0.846" stop-color="#b600ff"/><stop offset="0.923" stop-color="#ca00ff"/><stop offset="1" stop-color="#de00ff"/></linearGradient>
<linearGradient id="g120"><stop offset="0" stop-color="#0019ff"/><stop offset="0.0769" stop-color="#0013ff"/><stop offset="0.154" stop-color="#000cff"/><stop offset="0.231" stop-color="#1104ff"/><stop offset="0.308" stop-color="#2800ff"/><stop offset="0.385" stop-color="#3d00ff"/><stop offset="0.462" stop-color="#5100ff"/><stop offset="0.538" stop-color="#6500ff"/><stop offset="0.615" stop-color="#7900ff"/><stop offset="0.692" stop-color="#8c00ff"/><stop offset="0.769" stop-color="#9f00ff"/><stop offset="0.846" stop-color="#b300ff"/><stop offset="0.923" stop-color="#c600ff"/><stop offset="1" stop-color="#d900ff"/></linearGradient>
<linearGradient id="g121"><stop offset="0" stop-color="#0018ff"/><stop offset="0.0769" stop-color="#0011ff"/><stop offset="0.154" stop-color="#000aff"/><stop offset="0.231" stop-color="#1002ff"/><stop offset="0.308" stop-color="#2700ff"/><stop offset="0.385" stop-color="#3c00ff"/><stop offset="0.462" stop-color="#5000ff"/><stop offset="0.538" stop-color="#6300ff"/><stop offset="0.615" stop-color="#7600ff"/><stop offset="0.692" stop-color="#8900ff"/><stop offset="0.769" stop-color="#9c00ff"/><stop offset="0.846" stop-color="#af00ff"/><stop offset="0.923" stop-color="#c200ff"/><stop offset="1" stop-color="#d400ff"/></linearGradient>
<linearGradient id="g122"><stop offset="0" stop-color="#0016ff"/><stop offset="0.0833" stop-color="#000fff"/><stop offset="0.167" stop-color="#0007ff"/><stop offset="0.25" stop-color="#1700ff"/><stop offset="0.333" stop-color="#2e00ff"/><stop offset="0.417" stop-color="#4400ff"/><stop offset="0.5" stop-color="#5800ff"/><stop offset="0.583" stop-color="#6d00ff"/><stop offset="0.667" stop-color="#8100ff"/><stop offset="0.75" stop-color="#9500ff"/><stop offset="0.833" stop-color="#a800ff"/><stop offset="0.917" stop-color="#bc00ff"/><stop offset="1" stop-color="#d000ff"/></linearGradient>
<linearGradient id="g123"><stop offset="0" stop-color="#0014ff"/><stop offset="0.0833" stop-color="#000dff"/><stop offset="0.167" stop-color="#0006ff"/><stop offset="0.25" stop-color="#1700ff"/><stop offset="0.333" stop-color="#2d00ff"/><stop offset="0.417" stop-color="#4200ff"/><stop offset="0.5" stop-color="#5700ff"/><stop offset="0.583" stop-color="#6a00ff"/><stop offset="0.667" stop-color="#7e00ff"/><stop offset="0.75" stop-color="#9100ff"/><stop offset="0.833" stop-color="#a500ff"/><stop offset="0.917" stop-color="#b800ff"/><stop offset="1" stop-color="#cb00ff"/></linearGradient>
<linearGradient id="g124"><stop offset="0" stop-color="#0012ff"/><stop offset="0.0833" stop-color="#000cff"/><stop offset="0.167" stop-color="#0004ff"/><stop offset="0.25" stop-color="#1800ff"/><stop offset="0.333" stop-color="#2e00ff"/><stop offset="0.417" stop-color="#4200ff"/><stop offset="0.5" stop-color="#5600ff"/><stop offset="0.583" stop-color="#6a00ff"/><stop offset="0.667" stop-color="#7d00ff"/><stop offset="0.75" stop-color="#9000ff"/><stop offset="0.833" stop-color="#a200ff"/><stop offset="0.917" stop-color="#b500ff"/><stop offset="1" stop-color="#c800ff"/></linearGradient>
<linearGradient id="g125"><stop offset="0" stop-color="#0011ff"/><stop offset="0.0833" stop-color="#000aff"/><stop offset="0.167" stop-color="#0003ff"/><stop offset="0.25" stop-color="#1800ff"/><stop offset="0.333" stop-color="#2d00ff"/><stop offset="0.417" stop-color="#4100ff"/><stop offset="0.5" stop-color="#5400ff"/><stop offset="0.583" stop-color="#6700ff"/><stop offset="0.667" stop-color="#7a00ff"/><stop offset="0.75" stop-color="#8d00ff"/><stop offset="0.833" stop-color="#9f00ff"/><stop offset="0.917" stop-color="#b100ff"/><stop offset="1" stop-color="#c300ff"/></linearGradient>
<linearGradient id="g126"><stop offset="0" stop-color="#000fff"/><stop offset="0.0833" stop-color="#0008ff"/><stop offset="0.167" stop-color="#0000ff"/><stop offset="0.25" stop-color="#1900ff"/><stop offset="0.333" stop-color="#2d00ff"/><stop offset="0.417" stop-color="#4100ff"/><stop offset="0.5" stop-color="#5300ff"/><stop offset="0.583" stop-color="#6600ff"/><stop offset="0.667" stop-color="#7800ff"/><stop offset="0.75" stop-color="#8a00ff"/><stop offset="0.833" stop-color="#9c00ff"/><stop offset="0.917" stop-color="#ad00ff"/><stop offset="1" stop-color="#bf00ff"/></linearGradient>
<linearGradient id="g127"><stop offset="0" stop-color="#000eff"/><stop offset="0.0909" stop-color="#0006ff"/><stop offset="0.182" stop-color="#0600ff"/><stop offset="0.273" stop-color="#1e00ff"/><stop offset="0.364" stop-color="#3300ff"/><stop offset="0.455" stop-color="#4800ff"/><stop offset="0.545" stop-color="#5c00ff"/><stop offset="0.636" stop-color="#6f00ff"/><stop offset="0.727" stop-color="#8200ff"/><stop offset="0.818" stop-color="#9500ff"/><stop offset="0.909" stop-color="#a800ff"/><stop offset="1" stop-color="#bb00ff"/></linearGradient>
<linearGradient id="g128"><stop offset="0" stop-color="#000cff"/><stop offset="0.0909" stop-color="#0005ff"/><stop offset="0.182" stop-color="#0700ff"/><stop offset="0.273" stop-color="#1f00ff"/><stop offset="0.364" stop-color="#3300ff"/><stop offset="0.455" stop-color="#4700ff"/><stop offset="0.545" stop-color="#5a00ff"/><stop offset="0.636" stop-color="#6d00ff"/><stop offset="0.727" stop-color="#8000ff"/><stop offset="0.818" stop-color="#9200ff"/><stop offset="0.909" stop-color="#a500ff"/><stop offset="1" stop-color="#b700ff"/></linearGradient>
<linearGradient id="g129"><stop offset="0" stop-color="#000bff"/><stop offset="0.0909" stop-color="#0003ff"/><stop offset="0.182" stop-color="#0700ff"/><stop offset="0.273" stop-color="#1e00ff"/><stop offset="0.364" stop-color="#3200ff"/><stop offset="0.455" stop-color="#4600ff"/><stop offset="0.545" stop-color="#5800ff"/><stop offset="0.636" stop-color="#6b00ff"/><stop offset="0.727" stop-color="#7d00ff"/><stop offset="0.818" stop-color="#8f00ff"/><stop offset="0.909" stop-color="#a100ff"/><stop offset="1" stop-color="#b300ff"/></linearGradient>
<linearGradient id="g130"><stop offset="0" stop-color="#0009ff"/><stop offset="0.0909" stop-color="#0001ff"/><stop offset="0.182" stop-color="#0900ff"/><stop offset="0.273" stop-color="#1f00ff"/><stop offset="0.364" stop-color="#3200ff"/><stop offset="0.455" stop-color="#4500ff"/><stop offset="0.545" stop-color="#5700ff"/><stop offset="0.636" stop-color="#6900ff"/><stop offset="0.727" stop-color="#7b00ff"/><stop offset="0.818" stop-color="#8c00ff"/><stop offset="0.909" stop-color="#9d00ff"/><stop offset="1" stop-color="#af00ff"/></linearGradient>
<linearGradient id="g131"><stop offset="0" stop-color="#0007ff"/><stop offset="0.1" stop-color="#0000ff"/><stop offset="0.2" stop-color="#0e00ff"/><stop offset="0.3" stop-color="#2400ff"/><stop offset="0.4" stop-color="#3900ff"/><stop offset="0.5" stop-color="#4d00ff"/><stop offset="0.6" stop-color="#6000ff"/><stop offset="0.7" stop-color="#7300ff"/><stop offset="0.8" stop-color="#8600ff"/><stop offset="0.9" stop-color="#9800ff"/><stop offset="1" stop-color="#ab00ff"/></linearGradient>
<linearGradient id="g132"><stop offset="0" stop-color="#0005ff"/><stop offset="0.1" stop-color="#0000ff"/><stop offset="0.2" stop-color="#0f00ff"/><stop offset="0.3" stop-color="#2500ff"/><stop offset="0.4" stop-color="#3900ff"/><stop offset="0.5" stop-color="#4c00ff"/><stop offset="0.6" stop-color="#5e00ff"/><stop offset="0.7" stop-color="#7100ff"/><stop offset="0.8" stop-color="#8300ff"/><stop offset="0.9" stop-color="#9500ff"/><stop offset="1" stop-color="#a700ff"/></linearGradient>
<linearGradient id="g133"><stop offset="0" stop-color="#0003ff"/><stop offset="0.1" stop-color="#0000ff"/><stop offset="0.2" stop-color="#1000ff"/><stop offset="0.3" stop-color="#2500ff"/><stop offset="0.4" stop-color="#3800ff"/><stop offset="0.5" stop-color="#4b00ff"/><stop offset="0.6" stop-color="#5d00ff"/><stop offset="0.7" stop-color="#6f00ff"/><stop offset="0.8" stop-color="#8000ff"/><stop offset="0.9" stop-color="#9200ff"/><stop offset="1" stop-color="#a300ff"/></linearGradient>
<linearGradient id="g134"><stop offset="0" stop-color="#0001ff"/><stop offset="0.1" stop-color="#0000ff"/><stop offset="0.2" stop-color="#1000ff"/><stop offset="0.3" stop-color="#2400ff"/><stop offset="0.4" stop-color="#3700ff"/><stop offset="0.5" stop-color="#4900ff"/><stop offset="0.6" stop-color="#5b00ff"/><stop offset="0.7" stop-color="#6c00ff"/><stop offset="0.8" stop-color="#7d00ff"/><stop offset="0.9" stop-color="#8e00ff"/><stop offset="1" stop-color="#9f00ff"/></linearGradient>
<linearGradient id="g135"><stop offset="0" stop-color="#0000ff"/><stop offset="0.1" stop-color="#0000ff"/><stop offset="0.2" stop-color="#1100ff"/><stop offset="0.3" stop-color="#2500ff"/><stop offset="0.4" stop-color="#3700ff"/><stop offset="0.5" stop-color="#4800ff"/><stop offset="0.6" stop-color="#5900ff"/><stop offset="0.7" stop-color="#6a00ff"/><stop offset="0.8" stop-color="#7b00ff"/><stop offset="0.9" stop-color="#8b00ff"/><stop offset="1" stop-color="#9b00ff"/></linearGradient>
<linearGradient id="g136"><stop offset="0" stop-color="#0000ff"/><stop offset="0.111" stop-color="#0000ff"/><stop offset="0.222" stop-color="#1700ff"/><stop offset="0.333" stop-color="#2b00ff"/><stop offset="0.444" stop-color="#3e00ff"/><stop offset="0.556" stop-color="#5100ff"/><stop offset="0.667" stop-color="#6300ff"/><stop offset="0.778" stop-color="#7500ff"/><stop offset="0.889" stop-color="#8600ff"/><stop offset="1" stop-color="#9800ff"/></linearGradient>
<linearGradient id="g137"><stop offset="0" stop-color="#0000ff"/><stop offset="0.111" stop-color="#0000ff"/><stop offset="0.222" stop-color="#1700ff"/><stop offset="0.333" stop-color="#2a00ff"/><stop offset="0.444" stop-color="#3d00ff"/><stop offset="0.556" stop-color="#4f00ff"/><stop offset="0.667" stop-color="#6100ff"/><stop offset="0.778" stop-color="#7200ff"/><stop offset="0.889" stop-color="#8300ff"/><stop offset="1" stop-color="#9400ff"/></linearGradient>
<linearGradient id="g138"><stop offset="0" stop-color="#0000ff"/><stop offset="0.111" stop-color="#0100ff"/><stop offset="0.222" stop-color="#1700ff"/><stop offset="0.333" stop-color="#2a00ff"/><stop offset="0.444" stop-color="#3c00ff"/><stop offset="0.556" stop-color="#4e00ff"/><stop offset="0.667" stop-color="#5f00ff"/><stop offset="0.778" stop-color="#6f00ff"/><stop offset="0.889" stop-color="#8000ff"/><stop offset="1" stop-color="#9000ff"/></linearGradient>
<linearGradient id="g139"><stop offset="0" stop-color="#0000ff"/><stop offset="0.111" stop-color="#0300ff"/><stop offset="0.222" stop-color="#1800ff"/><stop offset="0.333" stop-color="#2b00ff"/><stop offset="0.444" stop-color="#3c00ff"/><stop offset="0.556" stop-color="#4d00ff"/><stop offset="0.667" stop-color="#5d00ff"/><stop offset="0.778" stop-color="#6d00ff"/><stop offset="0.889" stop-color="#7d00ff"/><stop offset="1" stop-color="#8d00ff"/></linearGradient>
<linearGradient id="g140"><stop offset="0" stop-color="#0000ff"/><stop offset="0.125" stop-color="#0800ff"/><stop offset="0.25" stop-color="#1e00ff"/><stop offset="0.375" stop-color="#3100ff"/><stop offset="0.5" stop-color="#4300ff"/><stop offset="0.625" stop-color="#5500ff"/><stop offset="0.75" stop-color="#6700ff"/><stop offset="0.875" stop-color="#7800ff"/><stop offset="1" stop-color="#8900ff"/></linearGradient>
<linearGradient id="g141"><stop offset="0" stop-color="#0000ff"/><stop offset="0.125" stop-color="#0900ff"/><stop offset="0.25" stop-color="#1d00ff"/><stop offset="0.375" stop-color="#3000ff"/><stop offset="0.5" stop-color="#4200ff"/><stop offset="0.625" stop-color="#5300ff"/><stop offset="0.75" stop-color="#6500ff"/><stop offset="0.875" stop-color="#7500ff"/><stop offset="1" stop-color="#8600ff"/></linearGradient>
<linearGradient id="g142"><stop offset="0" stop-color="#0000ff"/><stop offset="0.125" stop-color="#0a00ff"/><stop offset="0.25" stop-color="#1e00ff"/><stop offset="0.375" stop-color="#3000ff"/><stop offset="0.5" stop-color="#4100ff"/><stop offset="0.625" stop-color="#5200ff"/><stop offset="0.75" stop-color="#6200ff"/><stop offset="0.875" stop-color="#7300ff"/><stop offset="1" stop-color="#8300ff"/></linearGradient>
<linearGradient id="g143"><stop offset="0" stop-color="#0000ff"/><stop offset="0.125" stop-color="#0c00ff"/><stop offset="0.25" stop-color="#1f00ff"/><stop offset="0.375" stop-color="#3000ff"/><stop offset="0.5" stop-color="#4000ff"/><stop offset="0.625" stop-color="#5100ff"/><stop offset="0.75" stop-color="#6000ff"/><stop offset="0.875" stop-color="#7000ff"/><stop offset="1" stop-color="#7f00ff"/></linearGradient>
<linearGradient id="g144"><stop offset="0" stop-color="#0000ff"/><stop offset="0.143" stop-color="#1000ff"/><stop offset="0.286" stop-color="#2400ff"/><stop offset="0.429" stop-color="#3700ff"/><stop offset="0.571" stop-color="#4900ff"/><stop offset="0.714" stop-color="#5b00ff"/><stop offset="0.857" stop-color="#6c00ff"/><stop offset="1" stop-color="#7d00ff"/></linearGradient>
<linearGradient id="g145"><stop offset="0" stop-color="#0000ff"/><stop offset="0.143" stop-color="#1200ff"/><stop offset="0.286" stop-color="#2500ff"/><stop offset="0.429" stop-color="#3700ff"/><stop offset="0.571" stop-color="#4800ff"/><stop offset="0.714" stop-color="#5900ff"/><stop offset="0.857" stop-color="#6900ff"/><stop offset="1" stop-color="#7a00ff"/></linearGradient>
<linearGradient id="g146"><stop offset="0" stop-color="#0000ff"/><stop offset="0.143" stop-color="#1300ff"/><stop offset="0.286" stop-color="#2500ff"/><stop offset="0.429" stop-color="#3600ff"/><stop offset="0.571" stop-color="#4700ff"/><stop offset="0.714" stop-color="#5700ff"/><stop offset="0.857" stop-color="#6700ff"/><stop offset="1" stop-color="#7700ff"/></linearGradient>
<linearGradient id="g147"><stop offset="0" stop-color="#0000ff"/><stop offset="0.143" stop-color="#1400ff"/><stop offset="0.286" stop-color="#2600ff"/><stop offset="0.429" stop-color="#3600ff"/><stop offset="0.571" stop-color="#4600ff"/><stop offset="0.714" stop-color="#5500ff"/><stop offset="0.857" stop-color="#6400ff"/><stop offset="1" stop-color="#7300ff"/></linearGradient>
<linearGradient id="g148"><stop offset="0" stop-color="#0300ff"/><stop offset="0.167" stop-color="#1800ff"/><stop offset="0.333" stop-color="#2b00ff"/><stop offset="0.5" stop-color="#3d00ff"/><stop offset="0.667" stop-color="#4f00ff"/><stop offset="0.833" stop-color="#6000ff"/><stop offset="1" stop-color="#7000ff"/></linearGradient>
<linearGradient id="g149"><stop offset="0" stop-color="#0700ff"/><stop offset="0.167" stop-color="#1b00ff"/><stop offset="0.333" stop-color="#2c00ff"/><stop offset="0.5" stop-color="#3d00ff"/><stop offset="0.667" stop-color="#4d00ff"/><stop offset="0.833" stop-color="#5d00ff"/><stop offset="1" stop-color="#6d00ff"/></linearGradient>
<linearGradient id="g150"><stop offset="0" stop-color="#0900ff"/><stop offset="0.167" stop-color="#1c00ff"/><stop offset="0.333" stop-color="#2c00ff"/><stop offset="0.5" stop-color="#3c00ff"/><stop offset="0.667" stop-color="#4c00ff"/><stop offset="0.833" stop-color="#5b00ff"/><stop offset="1" stop-color="#6a00ff"/></linearGradient>
<linearGradient id="g151"><stop offset="0" stop-color="#0b00ff"/><stop offset="0.167" stop-color="#1d00ff"/><stop offset="0.333" stop-color="#2c00ff"/><stop offset="0.5" stop-color="#3c00ff"/><stop offset="0.667" stop-color="#4a00ff"/><stop offset="0.833" stop-color="#5900ff"/><stop offset="1" stop-color="#6700ff"/></linearGradient>
<linearGradient id="g152"><stop offset="0" stop-color="#0d00ff"/><stop offset="0.2" stop-color="#2100ff"/><stop offset="0.4" stop-color="#3200ff"/><stop offset="0.6" stop-color="#4300ff"/><stop offset="0.8" stop-color="#5400ff"/><stop offset="1" stop-color="#6400ff"/></linearGradient>
<linearGradient id="g153"><stop offset="0" stop-color="#1100ff"/><stop offset="0.2" stop-color="#2200ff"/><stop offset="0.4" stop-color="#3300ff"/><stop offset="0.6" stop-color="#4300ff"/><stop offset="0.8" stop-color="#5200ff"/><stop offset="1" stop-color="#6100ff"/></linearGradient>
<linearGradient id="g154"><stop offset="0" stop-color="#1300ff"/><stop offset="0.2" stop-color="#2300ff"/><stop offset="0.4" stop-color="#3300ff"/><stop offset="0.6" stop-color="#4100ff"/><stop offset="0.8" stop-color="#5000ff"/><stop offset="1" stop-color="#5e00ff"/></linearGradient>
<linearGradient id="g155"><stop offset="0" stop-color="#1500ff"/><stop offset="0.2" stop-color="#2400ff"/><stop offset="0.4" stop-color="#3200ff"/><stop offset="0.6" stop-color="#4000ff"/><stop offset="0.8" stop-color="#4e00ff"/><stop offset="1" stop-color="#5b00ff"/></linearGradient>
<linearGradient id="g156"><stop offset="0" stop-color="#1800ff"/><stop offset="0.25" stop-color="#2900ff"/><stop offset="0.5" stop-color="#3900ff"/><stop offset="0.75" stop-color="#4900ff"/><stop offset="1" stop-color="#5800ff"/></linearGradient>
<linearGradient id="g157"><stop offset="0" stop-color="#1a00ff"/><stop offset="0.25" stop-color="#2900ff"/><stop offset="0.5" stop-color="#3800ff"/><stop offset="0.75" stop-color="#4700ff"/><stop offset="1" stop-color="#5500ff"/></linearGradient>
<linearGradient id="g158"><stop offset="0" stop-color="#1c00ff"/><stop offset="0.25" stop-color="#2b00ff"/><stop offset="0.5" stop-color="#3800ff"/><stop offset="0.75" stop-color="#4600ff"/><stop offset="1" stop-color="#5300ff"/></linearGradient>
<linearGradient id="g159"><stop offset="0" stop-color="#1e00ff"/><stop offset="0.333" stop-color="#2f00ff"/><stop offset="0.667" stop-color="#4000ff"/><stop offset="1" stop-color="#5000ff"/></linearGradient>
<linearGradient id="g160"><stop offset="0" stop-color="#2000ff"/><stop offset="0.333" stop-color="#2f00ff"/><stop offset="0.667" stop-color="#3e00ff"/><stop offset="1" stop-color="#4d00ff"/></linearGradient>
<linearGradient id="g161"><stop offset="0" stop-color="#2300ff"/><stop offset="0.333" stop-color="#3000ff"/><stop offset="0.667" stop-color="#3d00ff"/><stop offset="1" stop-color="#4a00ff"/></linearGradient>
<linearGradient id="g162"><stop offset="0" stop-color="#2400ff"/><stop offset="0.333" stop-color="#3000ff"/><stop offset="0.667" stop-color="#3c00ff"/><stop offset="1" stop-color="#4800ff"/></linearGradient>
<linearGradient id="g163"><stop offset="0" stop-color="#2700ff"/><stop offset="0.5" stop-color="#3700ff"/><stop offset="1" stop-color="#4600ff"/></linearGradient>
<linearGradient id="g164"><stop offset="0" stop-color="#2800ff"/><stop offset="0.5" stop-color="#3600ff"/><stop offset="1" stop-color="#4300ff"/></linearGradient>
<linearGradient id="g165"><stop offset="0" stop-color="#2a00ff"/><stop offset="0.5" stop-color="#3500ff"/><stop offset="1" stop-color="#4100ff"/></linearGradient>
<linearGradient id="g166"><stop offset="0" stop-color="#2c00ff"/><stop offset="0.5" stop-color="#3500ff"/><stop offset="1" stop-color="#3e00ff"/></linearGradient>
<linearGradient id="g167"><stop offset="0" stop-color="#2e00ff"/><stop offset="1" stop-color="#3b00ff"/></linearGradient>
<linearGradient id="g168"><stop offset="0" stop-color="#3000ff"/><stop offset="1" stop-color="#3900ff"/></linearGradient>
</defs>
<g clip-path="url(#plot)"><g clip-path="url(#hs)"><g shape-rendering="crispEdges">
<rect x="821" y="98" width="44" height="2" fill="url(#g0)"/>
<rect x="812" y="100" width="76" height="2" fill="url(#g1)"/>
<rect x="808" y="102" width="100" height="2" fill="url(#g2)"/>
<rect x="806" y="104" width="120" height="2" fill="url(#g3)"/>
<rect x="804" y="106" width="140" height="2" fill="url(#g4)"/>
<rect x="802" y="108" width="160" height="2" fill="url(#g5)"/>
<rect x="801" y="110" width="178" height="2" fill="url(#g6)"/>
<rect x="801" y="112" width="196" height="2" fill="url(#g7)"/>
<rect x="800" y="114" width="214" height="2" fill="url(#g8)"/>
<rect x="799" y="116" width="233" height="2" fill="url(#g9)"/>
<rect x="799" y="118" width="250" height="2" fill="url(#g10)"/>
<rect x="799" y="120" width="267" height="2" fill="url(#g11)"/>
<rect x="799" y="122" width="285" height="2" fill="url(#g12)"/>
<rect x="799" y="124" width="302" height="2" fill="url(#g13)"/>
<rect x="799" y="126" width="320" height="2" fill="url(#g14)"/>
<rect x="799" y="128" width="337" height="2" fill="url(#g15)"/>
<rect x="799" y="130" width="355" height="2" fill="url(#g16)"/>
<rect x="799" y="132" width="372" height="2" fill="url(#g17)"/>
<rect x="799" y="134" width="390" height="2" fill="url(#g18)"/>
<rect x="799" y="136" width="407" height="2" fill="url(#g19)"/>
<rect x="799" y="138" width="424" height="2" fill="url(#g20)"/>
<rect x="800" y="140" width="441" height="2" fill="url(#g21)"/>
<rect x="800" y="142" width="458" height="2" fill="url(#g22)"/>
<rect x="800" y="144" width="460" height="2" fill="url(#g23)"/>
<rect x="801" y="146" width="459" height="2" fill="url(#g24)"/>
<rect x="801" y="148" width="459" height="2" fill="url(#g25)"/>
<rect x="802" y="150" width="458" height="2" fill="url(#g26)"/>
<rect x="802" y="152" width="458" height="2" fill="url(#g27)"/>
<rect x="803" y="154" width="457" height="2" fill="url(#g28)"/>
<rect x="803" y="156" width="457" height="2" fill="url(#g29)"/>
<rect x="804" y="158" width="456" height="2" fill="url(#g30)"/>
<rect x="804" y="160" width="456" height="2" fill="url(#g31)"/>
<rect x="805" y="162" width="455" height="2" fill="url(#g32)"/>
<rect x="805" y="164" width="455" height="2" fill="url(#g33)"/>
<rect x="806" y="166" width="454" height="2" fill="url(#g34)"/>
<rect x="807" y="168" width="451" height="2" fill="url(#g35)"/>
<rect x="807" y="170" width="449" height="2" fill="url(#g36)"/>
<rect x="808" y="172" width="446" height="2" fill="url(#g37)"/>
<rect x="809" y="174" width="443" height="2" fill="url(#g38)"/>
<rect x="809" y="176" width="441" height="2" fill="url(#g39)"/>
<rect x="810" y="178" width="438" height="2" fill="url(#g40)"/>
<rect x="811" y="180" width="435" height="2" fill="url(#g41)"/>
<rect x="811" y="182" width="433" height="2" fill="url(#g42)"/>
<rect x="812" y="184" width="430" height="2" fill="url(#g43)"/>
<rect x="813" y="186" width="427" height="2" fill="url(#g44)"/>
<rect x="814" y="188" width="424" height="2" fill="url(#g45)"/>
<rect x="814" y="190" width="422" height="2" fill="url(#g46)"/>
<rect x="815" y="192" width="420" height="2" fill="url(#g47)"/>
<rect x="816" y="194" width="417" height="2" fill="url(#g48)"/>
<rect x="817" y="196" width="414" height="2" fill="url(#g49)"/>
<rect x="817" y="198" width="412" height="2" fill="url(#g50)"/>
<rect x="818" y="200" width="409" height="2" fill="url(#g51)"/>
<rect x="819" y="202" width="406" height="2" fill="url(#g52)"/>
<rect x="820" y="204" width="403" height="2" fill="url(#g53)"/>
<rect x="821" y="206" width="400" height="2" fill="url(#g54)"/>
<rect x="821" y="208" width="398" height="2" fill="url(#g55)"/>
<rect x="822" y="210" width="395" height="2" fill="url(#g56)"/>
<rect x="823" y="212" width="392" height="2" fill="url(#g57)"/>
<rect x="824" y="214" width="389" height="2" fill="url(#g58)"/>
<rect x="825" y="216" width="386" height="2" fill="url(#g59)"/>
<rect x="826" y="218" width="383" height="2" fill="url(#g60)"/>
<rect x="827" y="220" width="380" height="2" fill="url(#g61)"/>
<rect x="828" y="222" width="377" height="2" fill="url(#g62)"/>
<rect x="828" y="224" width="375" height="2" fill="url(#g63)"/>
<rect x="829" y="226" width="372" height="2" fill="url(#g64)"/>
<rect x="830" y="228" width="369" height="2" fill="url(#g65)"/>
<rect x="831" y="230" width="367" height="2" fill="url(#g66)"/>
<rect x="832" y="232" width="364" height="2" fill="url(#g67)"/>
<rect x="833" y="234" width="361" height="2" fill="url(#g68)"/>
<rect x="834" y="236" width="358" height="2" fill="url(#g69)"/>
<rect x="835" y="238" width="355" height="2" fill="url(#g70)"/>
<rect x="836" y="240" width="352" height="2" fill="url(#g71)"/>
<rect x="837" y="242" width="349" height="2" fill="url(#g72)"/>
<rect x="838" y="244" width="346" height="2" fill="url(#g73)"/>
<rect x="839" y="246" width="343" height="2" fill="url(#g74)"/>
<rect x="840" y="248" width="340" height="2" fill="url(#g75)"/>
<rect x="841" y="250" width="337" height="2" fill="url(#g76)"/>
<rect x="842" y="252" width="334" height="2" fill="url(#g77)"/>
<rect x="843" y="254" width="331" height="2" fill="url(#g78)"/>
<rect x="844" y="256" width="328" height="2" fill="url(#g79)"/>
<rect x="846" y="258" width="324" height="2" fill="url(#g80)"/>
<rect x="847" y="260" width="321" height="2" fill="url(#g81)"/>
<rect x="848" y="262" width="318" height="2" fill="url(#g82)"/>
<rect x="849" y="264" width="315" height="2" fill="url(#g83)"/>
<rect x="850" y="266" width="312" height="2" fill="url(#g84)"/>
<rect x="851" y="268" width="309" height="2" fill="url(#g85)"/>
<rect x="852" y="270" width="307" height="2" fill="url(#g86)"/>
<rect x="853" y="272" width="304" height="2" fill="url(#g87)"/>
<rect x="855" y="274" width="300" height="2" fill="url(#g88)"/>
<rect x="856" y="276" width="297" height="2" fill="url(#g89)"/>
<rect x="857" y="278" width="294" height="2" fill="url(#g90)"/>
<rect x="858" y="280" width="291" height="2" fill="url(#g91)"/>
<rect x="859" y="282" width="288" height="2" fill="url(#g92)"/>
<rect x="860" y="284" width="285" height="2" fill="url(#g93)"/>
<rect x="862" y="286" width="281" height="2" fill="url(#g94)"/>
<rect x="863" y="288" width="278" height="2" fill="url(#g95)"/>
<rect x="864" y="290" width="275" height="2" fill="url(#g96)"/>
<rect x="865" y="292" width="272" height="2" fill="url(#g97)"/>
<rect x="866" y="294" width="269" height="2" fill="url(#g98)"/>
<rect x="868" y="296" width="265" height="2" fill="url(#g99)"/>
<rect x="869" y="298" width="262" height="2" fill="url(#g100)"/>
<rect x="870" y="300" width="259" height="2" fill="url(#g101)"/>
<rect x="871" y="302" width="256" height="2" fill="url(#g102)"/>
<rect x="872" y="304" width="253" height="2" fill="url(#g103)"/>
<rect x="874" y="306" width="249" height="2" fill="url(#g104)"/>
<rect x="875" y="308" width="247" height="2" fill="url(#g105)"/>
<rect x="876" y="310" width="244" height="2" fill="url(#g106)"/>
<rect x="878" y="312" width="240" height="2" fill="url(#g107)"/>
<rect x="879" y="314" width="237" height="2" fill="url(#g108)"/>
<rect x="880" y="316" width="234" height="2" fill="url(#g109)"/>
<rect x="881" y="318" width="231" height="2" fill="url(#g110)"/>
<rect x="883" y="320" width="227" height="2" fill="url(#g111)"/>
<rect x="884" y="322" width="224" height="2" fill="url(#g112)"/>
<rect x="885" y="324" width="221" height="2" fill="url(#g113)"/>
<rect x="887" y="326" width="217" height="2" fill="url(#g114)"/>
<rect x="888" y="328" width="214" height="2" fill="url(#g115)"/>
<rect x="889" y="330" width="211" height="2" fill="url(#g116)"/>
<rect x="891" y="332" width="207" height="2" fill="url(#g117)"/>
<rect x="892" y="334" width="204" height="2" fill="url(#g118)"/>
<rect x="894" y="336" width="200" height="2" fill="url(#g119)"/>
<rect x="895" y="338" width="197" height="2" fill="url(#g120)"/>
<rect x="896" y="340" width="194" height="2" fill="url(#g121)"/>
<rect x="898" y="342" width="190" height="2" fill="url(#g122)"/>
<rect x="899" y="344" width="187" height="2" fill="url(#g123)"/>
<rect x="901" y="346" width="184" height="2" fill="url(#g124)"/>
<rect x="902" y="348" width="181" height="2" fill="url(#g125)"/>
<rect x="904" y="350" width="177" height="2" fill="url(#g126)"/>
<rect x="905" y="352" width="174" height="2" fill="url(#g127)"/>
<rect x="907" y="354" width="170" height="2" fill="url(#g128)"/>
<rect x="908" y="356" width="167" height="2" fill="url(#g129)"/>
<rect x="910" y="358" width="163" height="2" fill="url(#g130)"/>
<rect x="911" y="360" width="160" height="2" fill="url(#g131)"/>
<rect x="913" y="362" width="156" height="2" fill="url(#g132)"/>
<rect x="915" y="364" width="152" height="2" fill="url(#g133)"/>
<rect x="916" y="366" width="149" height="2" fill="url(#g134)"/>
<rect x="918" y="368" width="145" height="2" fill="url(#g135)"/>
<rect x="920" y="370" width="141" height="2" fill="url(#g136)"/>
<rect x="921" y="372" width="138" height="2" fill="url(#g137)"/>
<rect x="923" y="374" width="134" height="2" fill="url(#g138)"/>
<rect x="925" y="376" width="130" height="2" fill="url(#g139)"/>
<rect x="927" y="378" width="126" height="2" fill="url(#g140)"/>
<rect x="928" y="380" width="123" height="2" fill="url(#g141)"/>
<rect x="930" y="382" width="119" height="2" fill="url(#g142)"/>
<rect x="932" y="384" width="115" height="2" fill="url(#g143)"/>
<rect x="934" y="386" width="112" height="2" fill="url(#g144)"/>
<rect x="936" y="388" width="108" height="2" fill="url(#g145)"/>
<rect x="938" y="390" width="104" height="2" fill="url(#g146)"/>
<rect x="940" y="392" width="100" height="2" fill="url(#g147)"/>
<rect x="942" y="394" width="96" height="2" fill="url(#g148)"/>
<rect x="945" y="396" width="91" height="2" fill="url(#g149)"/>
<rect x="947" y="398" width="87" height="2" fill="url(#g150)"/>
<rect x="949" y="400" width="83" height="2" fill="url(#g151)"/>
<rect x="951" y="402" width="79" height="2" fill="url(#g152)"/>
<rect x="954" y="404" width="74" height="2" fill="url(#g153)"/>
<rect x="956" y="406" width="70" height="2" fill="url(#g154)"/>
<rect x="958" y="408" width="66" height="2" fill="url(#g155)"/>
<rect x="961" y="410" width="61" height="2" fill="url(#g156)"/>
<rect x="963" y="412" width="57" height="2" fill="url(#g157)"/>
<rect x="966" y="414" width="52" height="2" fill="url(#g158)"/>
<rect x="968" y="416" width="48" height="2" fill="url(#g159)"/>
<rect x="970" y="418" width="44" height="2" fill="url(#g160)"/>
<rect x="973" y="420" width="39" height="2" fill="url(#g161)"/>
<rect x="975" y="422" width="35" height="2" fill="url(#g162)"/>
<rect x="978" y="424" width="31" height="2" fill="url(#g163)"/>
<rect x="980" y="426" width="27" height="2" fill="url(#g164)"/>
<rect x="982" y="428" width="23" height="2" fill="url(#g165)"/>
<rect x="985" y="430" width="18" height="2" fill="url(#g166)"/>
<rect x="987" y="432" width="14" height="2" fill="url(#g167)"/>
<rect x="990" y="434" width="9" height="2" fill="url(#g168)"/>
</g>
<path fill-rule="evenodd" fill="#000" fill-opacity="0.38" d="M794.2,85.3H1264.6V449.2H794.2Z M1144.4,136.7 L895.0,113.4 L933.6,351.4Z"/>
</g></g>
</svg>
<div class="b" style="left:798.7px;top:89.8px;width:461.4px;height:1.0px;background:#a4a4a4;"></div>
<div class="b" style="left:798.7px;top:90.3px;width:1.2px;height:353.9px;background:#a4a4a4;"></div>
<div class="b" style="left:1259.1px;top:90.3px;width:1.0px;height:353.9px;background:#a4a4a4;"></div>
<div class="b" style="left:798.7px;top:444.3px;width:461.4px;height:1.2px;background:#a4a4a4;"></div>
<div class="b" style="left:798.7px;top:445.2px;width:1.0px;height:3.5px;background:#a4a4a4;"></div>
<div class="t c" style="left:799.2px;top:451.8px;font-size:10.5px;color:#dcdcdc;">0</div>
<div class="b" style="left:795.2px;top:444.5px;width:4.0px;height:1.0px;background:#a4a4a4;"></div>
<div class="t r" style="left:794.6px;top:440.9px;font-size:10.5px;color:#dcdcdc;">0</div>
<div class="b" style="left:837.0px;top:445.2px;width:1.0px;height:3.5px;background:#a4a4a4;"></div>
<div class="t c" style="left:837.5px;top:451.8px;font-size:10.5px;color:#dcdcdc;">0.05</div>
<div class="b" style="left:795.2px;top:415.1px;width:4.0px;height:1.0px;background:#a4a4a4;"></div>
<div class="t r" style="left:794.6px;top:411.5px;font-size:10.5px;color:#dcdcdc;">0.05</div>
<div class="b" style="left:875.3px;top:445.2px;width:1.0px;height:3.5px;background:#a4a4a4;"></div>
<div class="t c" style="left:875.8px;top:451.8px;font-size:10.5px;color:#dcdcdc;">0.1</div>
<div class="b" style="left:795.2px;top:385.7px;width:4.0px;height:1.0px;background:#a4a4a4;"></div>
<div class="t r" style="left:794.6px;top:382.1px;font-size:10.5px;color:#dcdcdc;">0.1</div>
<div class="b" style="left:913.6px;top:445.2px;width:1.0px;height:3.5px;background:#a4a4a4;"></div>
<div class="t c" style="left:914.1px;top:451.8px;font-size:10.5px;color:#dcdcdc;">0.15</div>
<div class="b" style="left:795.2px;top:356.3px;width:4.0px;height:1.0px;background:#a4a4a4;"></div>
<div class="t r" style="left:794.6px;top:352.7px;font-size:10.5px;color:#dcdcdc;">0.15</div>
<div class="b" style="left:951.9px;top:445.2px;width:1.0px;height:3.5px;background:#a4a4a4;"></div>
<div class="t c" style="left:952.4px;top:451.8px;font-size:10.5px;color:#dcdcdc;">0.2</div>
<div class="b" style="left:795.2px;top:326.9px;width:4.0px;height:1.0px;background:#a4a4a4;"></div>
<div class="t r" style="left:794.6px;top:323.3px;font-size:10.5px;color:#dcdcdc;">0.2</div>
<div class="b" style="left:990.2px;top:445.2px;width:1.0px;height:3.5px;background:#a4a4a4;"></div>
<div class="t c" style="left:990.7px;top:451.8px;font-size:10.5px;color:#dcdcdc;">0.25</div>
<div class="b" style="left:795.2px;top:297.5px;width:4.0px;height:1.0px;background:#a4a4a4;"></div>
<div class="t r" style="left:794.6px;top:293.9px;font-size:10.5px;color:#dcdcdc;">0.25</div>
<div class="b" style="left:1028.5px;top:445.2px;width:1.0px;height:3.5px;background:#a4a4a4;"></div>
<div class="t c" style="left:1029.0px;top:451.8px;font-size:10.5px;color:#dcdcdc;">0.3</div>
<div class="b" style="left:795.2px;top:268.1px;width:4.0px;height:1.0px;background:#a4a4a4;"></div>
<div class="t r" style="left:794.6px;top:264.5px;font-size:10.5px;color:#dcdcdc;">0.3</div>
<div class="b" style="left:1066.8px;top:445.2px;width:1.0px;height:3.5px;background:#a4a4a4;"></div>
<div class="t c" style="left:1067.3px;top:451.8px;font-size:10.5px;color:#dcdcdc;">0.35</div>
<div class="b" style="left:795.2px;top:238.7px;width:4.0px;height:1.0px;background:#a4a4a4;"></div>
<div class="t r" style="left:794.6px;top:235.1px;font-size:10.5px;color:#dcdcdc;">0.35</div>
<div class="b" style="left:1105.1px;top:445.2px;width:1.0px;height:3.5px;background:#a4a4a4;"></div>
<div class="t c" style="left:1105.6px;top:451.8px;font-size:10.5px;color:#dcdcdc;">0.4</div>
<div class="b" style="left:795.2px;top:209.3px;width:4.0px;height:1.0px;background:#a4a4a4;"></div>
<div class="t r" style="left:794.6px;top:205.7px;font-size:10.5px;color:#dcdcdc;">0.4</div>
<div class="b" style="left:1143.4px;top:445.2px;width:1.0px;height:3.5px;background:#a4a4a4;"></div>
<div class="t c" style="left:1143.9px;top:451.8px;font-size:10.5px;color:#dcdcdc;">0.45</div>
<div class="b" style="left:795.2px;top:179.9px;width:4.0px;height:1.0px;background:#a4a4a4;"></div>
<div class="t r" style="left:794.6px;top:176.3px;font-size:10.5px;color:#dcdcdc;">0.45</div>
<div class="b" style="left:1181.7px;top:445.2px;width:1.0px;height:3.5px;background:#a4a4a4;"></div>
<div class="t c" style="left:1182.2px;top:451.8px;font-size:10.5px;color:#dcdcdc;">0.5</div>
<div class="b" style="left:795.2px;top:150.5px;width:4.0px;height:1.0px;background:#a4a4a4;"></div>
<div class="t r" style="left:794.6px;top:146.9px;font-size:10.5px;color:#dcdcdc;">0.5</div>
<div class="b" style="left:1220.0px;top:445.2px;width:1.0px;height:3.5px;background:#a4a4a4;"></div>
<div class="t c" style="left:1220.5px;top:451.8px;font-size:10.5px;color:#dcdcdc;">0.55</div>
<div class="b" style="left:795.2px;top:121.1px;width:4.0px;height:1.0px;background:#a4a4a4;"></div>
<div class="t r" style="left:794.6px;top:117.5px;font-size:10.5px;color:#dcdcdc;">0.55</div>
<div class="b" style="left:1074.8px;top:421.7px;width:184.3px;height:19.8px;background:rgba(52,52,52,.85);"></div>
<div class="t " style="left:1076.3px;top:424.6px;font-size:14.2px;color:#f4f4f4;">Gamut Coverage: &nbsp;99.9%</div>
<svg class="abs" style="left:0;top:0" width="1267" height="713"><rect x="945.4" y="163.2" width="9.4" height="9.4" fill="none" stroke="#0c0c0c" stroke-width="1.5"/><circle cx="948.9" cy="167.6" r="2.9" fill="#f4f4f4" stroke="#222" stroke-width="0.9"/><circle cx="1161.7" cy="135.0" r="2.8" fill="#780c12" stroke="#3a0508" stroke-width="0.9"/><rect x="1139.1" y="131.1" width="9.4" height="9.4" fill="none" stroke="#f6f6f6" stroke-width="1.35"/><circle cx="877.1" cy="105.5" r="2.8" fill="#1c9c1c" stroke="#0a4a0a" stroke-width="0.9"/><rect x="889.6" y="107.8" width="9.4" height="9.4" fill="none" stroke="#f6f6f6" stroke-width="1.35"/><circle cx="930.1" cy="346.4" r="2.8" fill="#2418b0" stroke="#0a0850" stroke-width="0.9"/><rect x="928.3" y="345.8" width="9.4" height="9.4" fill="none" stroke="#f6f6f6" stroke-width="1.35"/><circle cx="892.1" cy="177.0" r="2.8" fill="#0c9080" stroke="#054848" stroke-width="0.9"/><rect x="899.9" y="170.8" width="9.4" height="9.4" fill="none" stroke="#f6f6f6" stroke-width="1.35"/><circle cx="1042.8" cy="247.3" r="2.8" fill="#8c1078" stroke="#500850" stroke-width="0.9"/><rect x="1027.5" y="244.7" width="9.4" height="9.4" fill="none" stroke="#f6f6f6" stroke-width="1.35"/><circle cx="953.9" cy="113.3" r="2.8" fill="#90900c" stroke="#303005" stroke-width="0.9"/><rect x="950.1" y="113.5" width="9.4" height="9.4" fill="none" stroke="#f6f6f6" stroke-width="1.35"/></svg>
<div class="t " style="left:76.3px;top:501.0px;font-size:21.85px;color:#f0f0f0;">Current Reading</div>
<div class="t " style="left:76.3px;top:553.6px;font-size:18.4px;color:#f0f0f0;">x: 0.3124</div>
<div class="t " style="left:188.5px;top:553.6px;font-size:18.4px;color:#f0f0f0;">y: 0.3319</div>
<div class="t " style="left:76.3px;top:583.9px;font-size:18.1px;color:#f0f0f0;">fL: 83.98</div>
<div class="t " style="left:76.5px;top:612.6px;font-size:18px;color:#f0f0f0;letter-spacing:.45px">cd/m&#178;: 287.73</div>
<div class="t c" style="left:402.0px;top:486.3px;font-size:9.7px;color:#dcdcdc;">RGB Balance</div>
<div class="b" style="left:322.2px;top:497.8px;width:180.1px;height:130.7px;background:#262626;"></div>
<div class="b" style="left:319.2px;top:511.5px;width:183.1px;height:1.0px;background:#909090;"></div>
<div class="t r" style="left:318.2px;top:506.5px;font-size:10.6px;color:#dcdcdc;">104</div>
<div class="b" style="left:319.2px;top:537.5px;width:183.1px;height:1.0px;background:#909090;"></div>
<div class="t r" style="left:318.2px;top:532.5px;font-size:10.6px;color:#dcdcdc;">102</div>
<div class="b" style="left:319.2px;top:563.5px;width:183.1px;height:1.0px;background:#909090;"></div>
<div class="t r" style="left:318.2px;top:558.5px;font-size:10.6px;color:#dcdcdc;">100</div>
<div class="b" style="left:319.2px;top:589.5px;width:183.1px;height:1.0px;background:#909090;"></div>
<div class="t r" style="left:318.2px;top:584.5px;font-size:10.6px;color:#dcdcdc;">98</div>
<div class="b" style="left:319.2px;top:615.5px;width:183.1px;height:1.0px;background:#909090;"></div>
<div class="t r" style="left:318.2px;top:610.5px;font-size:10.6px;color:#dcdcdc;">96</div>
<div class="b" style="left:322.2px;top:497.3px;width:180.1px;height:1.0px;background:#909090;"></div>
<div class="b" style="left:321.7px;top:497.8px;width:1.0px;height:133.7px;background:#909090;"></div>
<div class="b" style="left:501.8px;top:497.8px;width:1.0px;height:133.7px;background:#909090;"></div>
<div class="b" style="left:322.2px;top:628.0px;width:180.1px;height:1.0px;background:#909090;"></div>
<div class="b" style="left:341.4px;top:574.9px;width:45.4px;height:53.1px;background:linear-gradient(#ff5c5c,#ec4848);box-shadow:0 0 0 .8px #151515"></div>
<div class="b" style="left:388.6px;top:559.6px;width:46.4px;height:68.4px;background:linear-gradient(#5cb45c,#3c983c);box-shadow:0 0 0 .8px #151515"></div>
<div class="b" style="left:437.6px;top:572.3px;width:45.4px;height:55.7px;background:linear-gradient(#5c5cff,#4848f0);box-shadow:0 0 0 .8px #151515"></div>
<div class="t c" style="left:412.0px;top:631.5px;font-size:10.6px;color:#dcdcdc;">100W</div>
<div class="t c" style="left:646.3px;top:479.6px;font-size:11.6px;color:#e4e4e4;">CIE 1931 xy</div>
<svg class="abs" style="left:0;top:0" width="1267" height="713" viewBox="0 0 1267 713"><defs><clipPath id="xyc"><rect x="524.4" y="492.2" width="245.1" height="142.7"/></clipPath>
<linearGradient id="h0"><stop offset="0" stop-color="#88ffca"/><stop offset="0.0833" stop-color="#93ffca"/><stop offset="0.167" stop-color="#9effc9"/><stop offset="0.25" stop-color="#aaffc9"/><stop offset="0.333" stop-color="#b6ffc8"/><stop offset="0.417" stop-color="#c2ffc8"/><stop offset="0.5" stop-color="#cfffc7"/><stop offset="0.583" stop-color="#dcffc6"/><stop offset="0.667" stop-color="#e9ffc6"/><stop offset="0.75" stop-color="#f6ffc5"/><stop offset="0.833" stop-color="#fffac1"/><stop offset="0.917" stop-color="#ffedb6"/><stop offset="1" stop-color="#ffe2ad"/></linearGradient>
<linearGradient id="h1"><stop offset="0" stop-color="#89ffcc"/><stop offset="0.0833" stop-color="#95ffcc"/><stop offset="0.167" stop-color="#a0ffcb"/><stop offset="0.25" stop-color="#acffcb"/><stop offset="0.333" stop-color="#b8ffca"/><stop offset="0.417" stop-color="#c4ffca"/><stop offset="0.5" stop-color="#d1ffc9"/><stop offset="0.583" stop-color="#deffc9"/><stop offset="0.667" stop-color="#ebffc8"/><stop offset="0.75" stop-color="#f9ffc7"/><stop offset="0.833" stop-color="#fff8c1"/><stop offset="0.917" stop-color="#ffebb7"/><stop offset="1" stop-color="#ffe0ad"/></linearGradient>
<linearGradient id="h2"><stop offset="0" stop-color="#8bffcf"/><stop offset="0.0833" stop-color="#96ffce"/><stop offset="0.167" stop-color="#a2ffce"/><stop offset="0.25" stop-color="#aeffcd"/><stop offset="0.333" stop-color="#baffcd"/><stop offset="0.417" stop-color="#c6ffcc"/><stop offset="0.5" stop-color="#d3ffcc"/><stop offset="0.583" stop-color="#e0ffcb"/><stop offset="0.667" stop-color="#edffca"/><stop offset="0.75" stop-color="#fbffca"/><stop offset="0.833" stop-color="#fff5c2"/><stop offset="0.917" stop-color="#ffe9b7"/><stop offset="1" stop-color="#ffddae"/></linearGradient>
<linearGradient id="h3"><stop offset="0" stop-color="#8dffd1"/><stop offset="0.0833" stop-color="#98ffd0"/><stop offset="0.167" stop-color="#a4ffd0"/><stop offset="0.25" stop-color="#b0ffcf"/><stop offset="0.333" stop-color="#bcffcf"/><stop offset="0.417" stop-color="#c9ffce"/><stop offset="0.5" stop-color="#d5ffce"/><stop offset="0.583" stop-color="#e2ffcd"/><stop offset="0.667" stop-color="#f0ffcd"/><stop offset="0.75" stop-color="#fdffcc"/><stop offset="0.833" stop-color="#fff3c2"/><stop offset="0.917" stop-color="#ffe7b8"/><stop offset="1" stop-color="#ffdbae"/></linearGradient>
<linearGradient id="h4"><stop offset="0" stop-color="#8effd3"/><stop offset="0.0833" stop-color="#9affd2"/><stop offset="0.167" stop-color="#a6ffd2"/><stop offset="0.25" stop-color="#b2ffd2"/><stop offset="0.333" stop-color="#beffd1"/><stop offset="0.417" stop-color="#cbffd1"/><stop offset="0.5" stop-color="#d7ffd0"/><stop offset="0.583" stop-color="#e5ffd0"/><stop offset="0.667" stop-color="#f2ffcf"/><stop offset="0.75" stop-color="#fffece"/><stop offset="0.833" stop-color="#fff1c2"/><stop offset="0.917" stop-color="#ffe4b8"/><stop offset="1" stop-color="#ffd9ae"/></linearGradient>
<linearGradient id="h5"><stop offset="0" stop-color="#90ffd5"/><stop offset="0.0833" stop-color="#9bffd5"/><stop offset="0.167" stop-color="#a7ffd4"/><stop offset="0.25" stop-color="#b4ffd4"/><stop offset="0.333" stop-color="#c0ffd3"/><stop offset="0.417" stop-color="#cdffd3"/><stop offset="0.5" stop-color="#daffd2"/><stop offset="0.583" stop-color="#e7ffd2"/><stop offset="0.667" stop-color="#f5ffd1"/><stop offset="0.75" stop-color="#fffcce"/><stop offset="0.833" stop-color="#ffeec3"/><stop offset="0.917" stop-color="#ffe2b8"/><stop offset="1" stop-color="#ffd7af"/></linearGradient>
<linearGradient id="h6"><stop offset="0" stop-color="#91ffd7"/><stop offset="0.0833" stop-color="#9dffd7"/><stop offset="0.167" stop-color="#a9ffd7"/><stop offset="0.25" stop-color="#b5ffd6"/><stop offset="0.333" stop-color="#c2ffd6"/><stop offset="0.417" stop-color="#cfffd5"/><stop offset="0.5" stop-color="#dcffd5"/><stop offset="0.583" stop-color="#e9ffd4"/><stop offset="0.667" stop-color="#f7ffd4"/><stop offset="0.75" stop-color="#fff9ce"/><stop offset="0.833" stop-color="#ffecc3"/><stop offset="0.917" stop-color="#ffe0b9"/><stop offset="1" stop-color="#ffd5af"/></linearGradient>
<linearGradient id="h7"><stop offset="0" stop-color="#93ffda"/><stop offset="0.0833" stop-color="#9fffd9"/><stop offset="0.167" stop-color="#abffd9"/><stop offset="0.25" stop-color="#b7ffd8"/><stop offset="0.333" stop-color="#c4ffd8"/><stop offset="0.417" stop-color="#d1ffd8"/><stop offset="0.5" stop-color="#deffd7"/><stop offset="0.583" stop-color="#ecffd7"/><stop offset="0.667" stop-color="#faffd6"/><stop offset="0.75" stop-color="#fff7cf"/><stop offset="0.833" stop-color="#ffeac4"/><stop offset="0.917" stop-color="#ffdeb9"/><stop offset="1" stop-color="#ffd3b0"/></linearGradient>
<linearGradient id="h8"><stop offset="0" stop-color="#95ffdc"/><stop offset="0.0833" stop-color="#a1ffdc"/><stop offset="0.167" stop-color="#adffdb"/><stop offset="0.25" stop-color="#b9ffdb"/><stop offset="0.333" stop-color="#c6ffda"/><stop offset="0.417" stop-color="#d3ffda"/><stop offset="0.5" stop-color="#e0ffda"/><stop offset="0.583" stop-color="#eeffd9"/><stop offset="0.667" stop-color="#fcffd9"/><stop offset="0.75" stop-color="#fff4cf"/><stop offset="0.833" stop-color="#ffe7c4"/><stop offset="0.917" stop-color="#ffdcba"/><stop offset="1" stop-color="#ffd1b0"/></linearGradient>
<linearGradient id="h9"><stop offset="0" stop-color="#97ffde"/><stop offset="0.0833" stop-color="#a3ffde"/><stop offset="0.167" stop-color="#afffde"/><stop offset="0.25" stop-color="#bbffdd"/><stop offset="0.333" stop-color="#c8ffdd"/><stop offset="0.417" stop-color="#d5ffdd"/><stop offset="0.5" stop-color="#e3ffdc"/><stop offset="0.583" stop-color="#f1ffdc"/><stop offset="0.667" stop-color="#ffffdb"/><stop offset="0.75" stop-color="#fff2d0"/><stop offset="0.833" stop-color="#ffe5c4"/><stop offset="0.917" stop-color="#ffdaba"/><stop offset="1" stop-color="#ffcfb1"/></linearGradient>
<linearGradient id="h10"><stop offset="0" stop-color="#98ffe1"/><stop offset="0.0833" stop-color="#a4ffe0"/><stop offset="0.167" stop-color="#b1ffe0"/><stop offset="0.25" stop-color="#bdffe0"/><stop offset="0.333" stop-color="#caffdf"/><stop offset="0.417" stop-color="#d8ffdf"/><stop offset="0.5" stop-color="#e5ffdf"/><stop offset="0.583" stop-color="#f3ffde"/><stop offset="0.667" stop-color="#fffddc"/><stop offset="0.75" stop-color="#ffefd0"/><stop offset="0.833" stop-color="#ffe3c5"/><stop offset="0.917" stop-color="#ffd7ba"/><stop offset="1" stop-color="#ffcdb1"/></linearGradient>
<linearGradient id="h11"><stop offset="0" stop-color="#9affe3"/><stop offset="0.0833" stop-color="#a6ffe3"/><stop offset="0.167" stop-color="#b3ffe2"/><stop offset="0.25" stop-color="#bfffe2"/><stop offset="0.333" stop-color="#ccffe2"/><stop offset="0.417" stop-color="#daffe1"/><stop offset="0.5" stop-color="#e7ffe1"/><stop offset="0.583" stop-color="#f5ffe1"/><stop offset="0.667" stop-color="#fffadc"/><stop offset="0.75" stop-color="#ffedd0"/><stop offset="0.833" stop-color="#ffe1c5"/><stop offset="0.917" stop-color="#ffd5bb"/><stop offset="1" stop-color="#ffcbb1"/></linearGradient>
<linearGradient id="h12"><stop offset="0" stop-color="#9cffe5"/><stop offset="0.0833" stop-color="#a8ffe5"/><stop offset="0.167" stop-color="#b5ffe5"/><stop offset="0.25" stop-color="#c2ffe5"/><stop offset="0.333" stop-color="#cfffe4"/><stop offset="0.417" stop-color="#dcffe4"/><stop offset="0.5" stop-color="#eaffe4"/><stop offset="0.583" stop-color="#f8ffe3"/><stop offset="0.667" stop-color="#fff8dd"/><stop offset="0.75" stop-color="#ffebd1"/><stop offset="0.833" stop-color="#ffdec6"/><stop offset="0.917" stop-color="#ffd3bb"/><stop offset="1" stop-color="#ffc9b2"/></linearGradient>
<linearGradient id="h13"><stop offset="0" stop-color="#9effe8"/><stop offset="0.0833" stop-color="#aaffe8"/><stop offset="0.167" stop-color="#b7ffe7"/><stop offset="0.25" stop-color="#c4ffe7"/><stop offset="0.333" stop-color="#d1ffe7"/><stop offset="0.417" stop-color="#deffe7"/><stop offset="0.5" stop-color="#ecffe6"/><stop offset="0.583" stop-color="#fbffe6"/><stop offset="0.667" stop-color="#fff5dd"/><stop offset="0.75" stop-color="#ffe8d1"/><stop offset="0.833" stop-color="#ffdcc6"/><stop offset="0.917" stop-color="#ffd1bc"/><stop offset="1" stop-color="#ffc7b2"/></linearGradient>
<linearGradient id="h14"><stop offset="0" stop-color="#9fffea"/><stop offset="0.0833" stop-color="#acffea"/><stop offset="0.167" stop-color="#b9ffea"/><stop offset="0.25" stop-color="#c6ffea"/><stop offset="0.333" stop-color="#d3ffe9"/><stop offset="0.417" stop-color="#e1ffe9"/><stop offset="0.5" stop-color="#efffe9"/><stop offset="0.583" stop-color="#fdffe9"/><stop offset="0.667" stop-color="#fff3dd"/><stop offset="0.75" stop-color="#ffe6d1"/><stop offset="0.833" stop-color="#ffdac6"/><stop offset="0.917" stop-color="#ffcfbc"/><stop offset="1" stop-color="#ffc5b3"/></linearGradient>
<linearGradient id="h15"><stop offset="0" stop-color="#a1ffed"/><stop offset="0.0833" stop-color="#aeffed"/><stop offset="0.167" stop-color="#bbffec"/><stop offset="0.25" stop-color="#c8ffec"/><stop offset="0.333" stop-color="#d5ffec"/><stop offset="0.417" stop-color="#e3ffec"/><stop offset="0.5" stop-color="#f1ffec"/><stop offset="0.583" stop-color="#fffeeb"/><stop offset="0.667" stop-color="#fff0de"/><stop offset="0.75" stop-color="#ffe4d2"/><stop offset="0.833" stop-color="#ffd8c7"/><stop offset="0.917" stop-color="#ffcdbc"/><stop offset="1" stop-color="#ffc3b3"/></linearGradient>
<linearGradient id="h16"><stop offset="0" stop-color="#a3ffef"/><stop offset="0.0833" stop-color="#b0ffef"/><stop offset="0.167" stop-color="#bdffef"/><stop offset="0.25" stop-color="#caffef"/><stop offset="0.333" stop-color="#d8ffef"/><stop offset="0.417" stop-color="#e6ffee"/><stop offset="0.5" stop-color="#f4ffee"/><stop offset="0.583" stop-color="#fffceb"/><stop offset="0.667" stop-color="#ffeede"/><stop offset="0.75" stop-color="#ffe1d2"/><stop offset="0.833" stop-color="#ffd6c7"/><stop offset="0.917" stop-color="#ffcbbd"/><stop offset="1" stop-color="#ffc1b3"/></linearGradient>
<linearGradient id="h17"><stop offset="0" stop-color="#a5fff2"/><stop offset="0.0833" stop-color="#b2fff2"/><stop offset="0.167" stop-color="#bffff2"/><stop offset="0.25" stop-color="#ccfff1"/><stop offset="0.333" stop-color="#dafff1"/><stop offset="0.417" stop-color="#e8fff1"/><stop offset="0.5" stop-color="#f6fff1"/><stop offset="0.583" stop-color="#fff9eb"/><stop offset="0.667" stop-color="#ffebde"/><stop offset="0.75" stop-color="#ffdfd2"/><stop offset="0.833" stop-color="#ffd3c7"/><stop offset="0.917" stop-color="#ffc9bd"/><stop offset="1" stop-color="#ffbfb4"/></linearGradient>
<linearGradient id="h18"><stop offset="0" stop-color="#a7fff4"/><stop offset="0.0833" stop-color="#b4fff4"/><stop offset="0.167" stop-color="#c1fff4"/><stop offset="0.25" stop-color="#cffff4"/><stop offset="0.333" stop-color="#dcfff4"/><stop offset="0.417" stop-color="#eafff4"/><stop offset="0.5" stop-color="#f9fff4"/><stop offset="0.583" stop-color="#fff6ec"/><stop offset="0.667" stop-color="#ffe9df"/><stop offset="0.75" stop-color="#ffddd3"/><stop offset="0.833" stop-color="#ffd1c8"/><stop offset="0.917" stop-color="#ffc7be"/><stop offset="1" stop-color="#ffbdb4"/></linearGradient>
<linearGradient id="h19"><stop offset="0" stop-color="#a9fff7"/><stop offset="0.0833" stop-color="#b6fff7"/><stop offset="0.167" stop-color="#c3fff7"/><stop offset="0.25" stop-color="#d1fff7"/><stop offset="0.333" stop-color="#dffff7"/><stop offset="0.417" stop-color="#edfff7"/><stop offset="0.5" stop-color="#fcfff7"/><stop offset="0.583" stop-color="#fff4ec"/><stop offset="0.667" stop-color="#ffe7df"/><stop offset="0.75" stop-color="#ffdad3"/><stop offset="0.833" stop-color="#ffcfc8"/><stop offset="0.917" stop-color="#ffc5be"/><stop offset="1" stop-color="#ffbbb5"/></linearGradient>
<linearGradient id="h20"><stop offset="0" stop-color="#abfffa"/><stop offset="0.0833" stop-color="#b8fffa"/><stop offset="0.167" stop-color="#c5fffa"/><stop offset="0.25" stop-color="#d3fffa"/><stop offset="0.333" stop-color="#e1fffa"/><stop offset="0.417" stop-color="#f0fff9"/><stop offset="0.5" stop-color="#fefff9"/><stop offset="0.583" stop-color="#fff1ec"/><stop offset="0.667" stop-color="#ffe4df"/><stop offset="0.75" stop-color="#ffd8d3"/><stop offset="0.833" stop-color="#ffcdc8"/><stop offset="0.917" stop-color="#ffc3be"/><stop offset="1" stop-color="#ffb9b5"/></linearGradient>
<linearGradient id="h21"><stop offset="0" stop-color="#adfffc"/><stop offset="0.0833" stop-color="#bafffc"/><stop offset="0.167" stop-color="#c8fffc"/><stop offset="0.25" stop-color="#d5fffc"/><stop offset="0.333" stop-color="#e4fffc"/><stop offset="0.417" stop-color="#f2fffc"/><stop offset="0.5" stop-color="#fffdfa"/><stop offset="0.583" stop-color="#ffefec"/><stop offset="0.667" stop-color="#ffe2df"/><stop offset="0.75" stop-color="#ffd6d4"/><stop offset="0.833" stop-color="#ffcbc9"/><stop offset="0.917" stop-color="#ffc1bf"/><stop offset="1" stop-color="#ffb7b5"/></linearGradient>
<linearGradient id="h22"><stop offset="0" stop-color="#afffff"/><stop offset="0.0833" stop-color="#bcffff"/><stop offset="0.167" stop-color="#caffff"/><stop offset="0.25" stop-color="#d8ffff"/><stop offset="0.333" stop-color="#e6ffff"/><stop offset="0.417" stop-color="#f5ffff"/><stop offset="0.5" stop-color="#fffafb"/><stop offset="0.583" stop-color="#ffeced"/><stop offset="0.667" stop-color="#ffe0e0"/><stop offset="0.75" stop-color="#ffd4d4"/><stop offset="0.833" stop-color="#ffc9c9"/><stop offset="0.917" stop-color="#ffbfbf"/><stop offset="1" stop-color="#ffb5b6"/></linearGradient>
<linearGradient id="h23"><stop offset="0" stop-color="#affcff"/><stop offset="0.0833" stop-color="#bcfcff"/><stop offset="0.167" stop-color="#cafcff"/><stop offset="0.25" stop-color="#d8fcff"/><stop offset="0.333" stop-color="#e6fcff"/><stop offset="0.417" stop-color="#f4fcff"/><stop offset="0.5" stop-color="#fff8fb"/><stop offset="0.583" stop-color="#ffeaed"/><stop offset="0.667" stop-color="#ffdde0"/><stop offset="0.75" stop-color="#ffd2d4"/><stop offset="0.833" stop-color="#ffc7c9"/><stop offset="0.917" stop-color="#ffbdbf"/><stop offset="1" stop-color="#ffb4b6"/></linearGradient>
<linearGradient id="h24"><stop offset="0" stop-color="#affaff"/><stop offset="0.0833" stop-color="#bcf9ff"/><stop offset="0.167" stop-color="#caf9ff"/><stop offset="0.25" stop-color="#d8f9ff"/><stop offset="0.333" stop-color="#e6f9ff"/><stop offset="0.417" stop-color="#f4f9ff"/><stop offset="0.5" stop-color="#fff5fb"/><stop offset="0.583" stop-color="#ffe7ed"/><stop offset="0.667" stop-color="#ffdbe0"/><stop offset="0.75" stop-color="#ffcfd5"/><stop offset="0.833" stop-color="#ffc5ca"/><stop offset="0.917" stop-color="#ffbbc0"/><stop offset="1" stop-color="#ffb2b6"/></linearGradient>
<linearGradient id="h25"><stop offset="0" stop-color="#aff7ff"/><stop offset="0.0833" stop-color="#bcf7ff"/><stop offset="0.167" stop-color="#caf7ff"/><stop offset="0.25" stop-color="#d8f6ff"/><stop offset="0.333" stop-color="#e6f6ff"/><stop offset="0.417" stop-color="#f4f6ff"/><stop offset="0.5" stop-color="#fff2fb"/><stop offset="0.583" stop-color="#ffe5ed"/><stop offset="0.667" stop-color="#ffd9e1"/><stop offset="0.75" stop-color="#ffcdd5"/><stop offset="0.833" stop-color="#ffc3ca"/><stop offset="0.917" stop-color="#ffb9c0"/><stop offset="1" stop-color="#ffb0b7"/></linearGradient>
<linearGradient id="h26"><stop offset="0" stop-color="#aff4ff"/><stop offset="0.0833" stop-color="#bcf4ff"/><stop offset="0.167" stop-color="#caf4ff"/><stop offset="0.25" stop-color="#d8f4ff"/><stop offset="0.333" stop-color="#e6f4ff"/><stop offset="0.417" stop-color="#f4f3ff"/><stop offset="0.5" stop-color="#fff0fb"/><stop offset="0.583" stop-color="#ffe3ee"/><stop offset="0.667" stop-color="#ffd6e1"/><stop offset="0.75" stop-color="#ffcbd5"/><stop offset="0.833" stop-color="#ffc1ca"/><stop offset="0.917" stop-color="#ffb7c0"/><stop offset="1" stop-color="#ffaeb7"/></linearGradient>
<linearGradient id="h27"><stop offset="0" stop-color="#b0f2ff"/><stop offset="0.0833" stop-color="#bdf1ff"/><stop offset="0.167" stop-color="#caf1ff"/><stop offset="0.25" stop-color="#d8f1ff"/><stop offset="0.333" stop-color="#e5f1ff"/><stop offset="0.417" stop-color="#f4f1ff"/><stop offset="0.5" stop-color="#ffedfc"/><stop offset="0.583" stop-color="#ffe0ee"/><stop offset="0.667" stop-color="#ffd4e1"/><stop offset="0.75" stop-color="#ffc9d6"/><stop offset="0.833" stop-color="#ffbfcb"/><stop offset="0.917" stop-color="#ffb5c1"/><stop offset="1" stop-color="#ffacb8"/></linearGradient>
<linearGradient id="h28"><stop offset="0" stop-color="#b0efff"/><stop offset="0.0833" stop-color="#bdefff"/><stop offset="0.167" stop-color="#caefff"/><stop offset="0.25" stop-color="#d7eeff"/><stop offset="0.333" stop-color="#e5eeff"/><stop offset="0.417" stop-color="#f4eeff"/><stop offset="0.5" stop-color="#ffebfc"/><stop offset="0.583" stop-color="#ffdeee"/><stop offset="0.667" stop-color="#ffd2e2"/><stop offset="0.75" stop-color="#ffc7d6"/><stop offset="0.833" stop-color="#ffbdcb"/><stop offset="0.917" stop-color="#ffb3c1"/><stop offset="1" stop-color="#ffaab8"/></linearGradient>
<linearGradient id="h29"><stop offset="0" stop-color="#b0ecff"/><stop offset="0.0833" stop-color="#bdecff"/><stop offset="0.167" stop-color="#caecff"/><stop offset="0.25" stop-color="#d7ecff"/><stop offset="0.333" stop-color="#e5ebff"/><stop offset="0.417" stop-color="#f3ebff"/><stop offset="0.5" stop-color="#ffe8fc"/><stop offset="0.583" stop-color="#ffdbee"/><stop offset="0.667" stop-color="#ffd0e2"/><stop offset="0.75" stop-color="#ffc5d6"/><stop offset="0.833" stop-color="#ffbbcb"/><stop offset="0.917" stop-color="#ffb1c2"/><stop offset="1" stop-color="#ffa9b8"/></linearGradient>
<linearGradient id="h30"><stop offset="0" stop-color="#b0eaff"/><stop offset="0.0833" stop-color="#bdeaff"/><stop offset="0.167" stop-color="#cae9ff"/><stop offset="0.25" stop-color="#d7e9ff"/><stop offset="0.333" stop-color="#e5e9ff"/><stop offset="0.417" stop-color="#f3e8ff"/><stop offset="0.5" stop-color="#ffe6fc"/><stop offset="0.583" stop-color="#ffd9ef"/><stop offset="0.667" stop-color="#ffcde2"/><stop offset="0.75" stop-color="#ffc3d7"/><stop offset="0.833" stop-color="#ffb9cc"/><stop offset="0.917" stop-color="#ffafc2"/><stop offset="1" stop-color="#ffa7b9"/></linearGradient>
<linearGradient id="h31"><stop offset="0" stop-color="#b0e7ff"/><stop offset="0.0833" stop-color="#bde7ff"/><stop offset="0.167" stop-color="#cae7ff"/><stop offset="0.25" stop-color="#d7e6ff"/><stop offset="0.333" stop-color="#e5e6ff"/><stop offset="0.417" stop-color="#f3e6ff"/><stop offset="0.5" stop-color="#ffe3fd"/><stop offset="0.583" stop-color="#ffd7ef"/><stop offset="0.667" stop-color="#ffcbe2"/><stop offset="0.75" stop-color="#ffc0d7"/><stop offset="0.833" stop-color="#ffb7cc"/><stop offset="0.917" stop-color="#ffadc2"/><stop offset="1" stop-color="#ffa5b9"/></linearGradient>
<linearGradient id="h32"><stop offset="0" stop-color="#b0e5ff"/><stop offset="0.0833" stop-color="#bde4ff"/><stop offset="0.167" stop-color="#cae4ff"/><stop offset="0.25" stop-color="#d7e4ff"/><stop offset="0.333" stop-color="#e5e3ff"/><stop offset="0.417" stop-color="#f3e3ff"/><stop offset="0.5" stop-color="#ffe1fd"/><stop offset="0.583" stop-color="#ffd4ef"/><stop offset="0.667" stop-color="#ffc9e3"/><stop offset="0.75" stop-color="#ffbed7"/><stop offset="0.833" stop-color="#ffb5cc"/><stop offset="0.917" stop-color="#ffacc3"/><stop offset="1" stop-color="#ffa3b9"/></linearGradient>
<linearGradient id="h33"><stop offset="0" stop-color="#b0e2ff"/><stop offset="0.0833" stop-color="#bde2ff"/><stop offset="0.167" stop-color="#cae2ff"/><stop offset="0.25" stop-color="#d7e1ff"/><stop offset="0.333" stop-color="#e5e1ff"/><stop offset="0.417" stop-color="#f3e0ff"/><stop offset="0.5" stop-color="#ffdefd"/><stop offset="0.583" stop-color="#ffd2ef"/><stop offset="0.667" stop-color="#ffc7e3"/><stop offset="0.75" stop-color="#ffbcd7"/><stop offset="0.833" stop-color="#ffb3cd"/><stop offset="0.917" stop-color="#ffaac3"/><stop offset="1" stop-color="#ffa1ba"/></linearGradient>
<linearGradient id="h34"><stop offset="0" stop-color="#b1e0ff"/><stop offset="0.0833" stop-color="#bddfff"/><stop offset="0.167" stop-color="#cadfff"/><stop offset="0.25" stop-color="#d7dfff"/><stop offset="0.333" stop-color="#e5deff"/><stop offset="0.417" stop-color="#f3deff"/><stop offset="0.5" stop-color="#ffdcfd"/><stop offset="0.583" stop-color="#ffd0f0"/><stop offset="0.667" stop-color="#ffc5e3"/><stop offset="0.75" stop-color="#ffbad8"/><stop offset="0.833" stop-color="#ffb1cd"/><stop offset="0.917" stop-color="#ffa8c3"/><stop offset="1" stop-color="#ffa0ba"/></linearGradient>
<linearGradient id="h35"><stop offset="0" stop-color="#b1ddff"/><stop offset="0.0833" stop-color="#bdddff"/><stop offset="0.167" stop-color="#caddff"/><stop offset="0.25" stop-color="#d7dcff"/><stop offset="0.333" stop-color="#e5dcff"/><stop offset="0.417" stop-color="#f3dbff"/><stop offset="0.5" stop-color="#ffd9fd"/><stop offset="0.583" stop-color="#ffcdf0"/><stop offset="0.667" stop-color="#ffc2e3"/><stop offset="0.75" stop-color="#ffb8d8"/><stop offset="0.833" stop-color="#ffafcd"/><stop offset="0.917" stop-color="#ffa6c4"/><stop offset="1" stop-color="#ff9eba"/></linearGradient>
<linearGradient id="h36"><stop offset="0" stop-color="#b1dbff"/><stop offset="0.0833" stop-color="#bddbff"/><stop offset="0.167" stop-color="#cadaff"/><stop offset="0.25" stop-color="#d7daff"/><stop offset="0.333" stop-color="#e5d9ff"/><stop offset="0.417" stop-color="#f2d9ff"/><stop offset="0.5" stop-color="#ffd7fe"/><stop offset="0.583" stop-color="#ffcbf0"/><stop offset="0.667" stop-color="#ffc0e4"/><stop offset="0.75" stop-color="#ffb6d8"/><stop offset="0.833" stop-color="#ffadce"/><stop offset="0.917" stop-color="#ffa4c4"/><stop offset="1" stop-color="#ff9cbb"/></linearGradient>
<linearGradient id="h37"><stop offset="0" stop-color="#b1d9ff"/><stop offset="0.0833" stop-color="#bdd8ff"/><stop offset="0.167" stop-color="#cad8ff"/><stop offset="0.25" stop-color="#d7d7ff"/><stop offset="0.333" stop-color="#e5d7ff"/><stop offset="0.417" stop-color="#f2d6ff"/><stop offset="0.5" stop-color="#ffd5fe"/><stop offset="0.583" stop-color="#ffc9f0"/><stop offset="0.667" stop-color="#ffbee4"/><stop offset="0.75" stop-color="#ffb4d9"/><stop offset="0.833" stop-color="#ffabce"/><stop offset="0.917" stop-color="#ffa2c4"/><stop offset="1" stop-color="#ff9abb"/></linearGradient>
<linearGradient id="h38"><stop offset="0" stop-color="#b1d6ff"/><stop offset="0.0833" stop-color="#bed6ff"/><stop offset="0.167" stop-color="#cad5ff"/><stop offset="0.25" stop-color="#d7d5ff"/><stop offset="0.333" stop-color="#e5d4ff"/><stop offset="0.417" stop-color="#f2d4ff"/><stop offset="0.5" stop-color="#ffd2fe"/><stop offset="0.583" stop-color="#ffc7f1"/><stop offset="0.667" stop-color="#ffbce4"/><stop offset="0.75" stop-color="#ffb2d9"/><stop offset="0.833" stop-color="#ffa9ce"/><stop offset="0.917" stop-color="#ffa1c5"/><stop offset="1" stop-color="#ff99bc"/></linearGradient>
<linearGradient id="h39"><stop offset="0" stop-color="#b1d4ff"/><stop offset="0.0833" stop-color="#bed3ff"/><stop offset="0.167" stop-color="#cad3ff"/><stop offset="0.25" stop-color="#d7d2ff"/><stop offset="0.333" stop-color="#e4d2ff"/><stop offset="0.417" stop-color="#f2d1ff"/><stop offset="0.5" stop-color="#ffd0fe"/><stop offset="0.583" stop-color="#ffc4f1"/><stop offset="0.667" stop-color="#ffbae5"/><stop offset="0.75" stop-color="#ffb0d9"/><stop offset="0.833" stop-color="#ffa7cf"/><stop offset="0.917" stop-color="#ff9fc5"/><stop offset="1" stop-color="#ff97bc"/></linearGradient>
<linearGradient id="h40"><stop offset="0" stop-color="#b1d1ff"/><stop offset="0.0833" stop-color="#bed1ff"/><stop offset="0.167" stop-color="#cad0ff"/><stop offset="0.25" stop-color="#d7d0ff"/><stop offset="0.333" stop-color="#e4cfff"/><stop offset="0.417" stop-color="#f2cfff"/><stop offset="0.5" stop-color="#ffcefe"/><stop offset="0.583" stop-color="#ffc2f1"/><stop offset="0.667" stop-color="#ffb8e5"/><stop offset="0.75" stop-color="#ffaeda"/><stop offset="0.833" stop-color="#ffa5cf"/><stop offset="0.917" stop-color="#ff9dc5"/><stop offset="1" stop-color="#ff95bc"/></linearGradient>
<linearGradient id="h41"><stop offset="0" stop-color="#b2cfff"/><stop offset="0.0833" stop-color="#becfff"/><stop offset="0.167" stop-color="#caceff"/><stop offset="0.25" stop-color="#d7cdff"/><stop offset="0.333" stop-color="#e4cdff"/><stop offset="0.417" stop-color="#f2ccff"/><stop offset="0.5" stop-color="#ffcbff"/><stop offset="0.583" stop-color="#ffc0f1"/><stop offset="0.667" stop-color="#ffb6e5"/><stop offset="0.75" stop-color="#ffacda"/><stop offset="0.833" stop-color="#ffa3cf"/><stop offset="0.917" stop-color="#ff9bc6"/><stop offset="1" stop-color="#ff94bd"/></linearGradient>
<linearGradient id="h42"><stop offset="0" stop-color="#b2cdff"/><stop offset="0.0833" stop-color="#beccff"/><stop offset="0.167" stop-color="#caccff"/><stop offset="0.25" stop-color="#d7cbff"/><stop offset="0.333" stop-color="#e4caff"/><stop offset="0.417" stop-color="#f2caff"/><stop offset="0.5" stop-color="#ffc9ff"/><stop offset="0.583" stop-color="#ffbef2"/><stop offset="0.667" stop-color="#ffb4e5"/><stop offset="0.75" stop-color="#ffaada"/><stop offset="0.833" stop-color="#ffa2d0"/><stop offset="0.917" stop-color="#ff99c6"/><stop offset="1" stop-color="#ff92bd"/></linearGradient>
<linearGradient id="h43"><stop offset="0" stop-color="#b2caff"/><stop offset="0.0833" stop-color="#becaff"/><stop offset="0.167" stop-color="#cac9ff"/><stop offset="0.25" stop-color="#d7c9ff"/><stop offset="0.333" stop-color="#e4c8ff"/><stop offset="0.417" stop-color="#f1c7ff"/><stop offset="0.5" stop-color="#ffc7ff"/><stop offset="0.583" stop-color="#ffbcf2"/><stop offset="0.667" stop-color="#ffb2e6"/><stop offset="0.75" stop-color="#ffa8da"/><stop offset="0.833" stop-color="#ffa0d0"/><stop offset="0.917" stop-color="#ff98c6"/><stop offset="1" stop-color="#ff90bd"/></linearGradient>
<linearGradient id="h44"><stop offset="0" stop-color="#b2c8ff"/><stop offset="0.0833" stop-color="#bec8ff"/><stop offset="0.167" stop-color="#cac7ff"/><stop offset="0.25" stop-color="#d7c6ff"/><stop offset="0.333" stop-color="#e4c6ff"/><stop offset="0.417" stop-color="#f1c5ff"/><stop offset="0.5" stop-color="#ffc4ff"/><stop offset="0.583" stop-color="#ffbaf2"/><stop offset="0.667" stop-color="#ffb0e6"/><stop offset="0.75" stop-color="#ffa6db"/><stop offset="0.833" stop-color="#ff9ed0"/><stop offset="0.917" stop-color="#ff96c7"/><stop offset="1" stop-color="#ff8fbe"/></linearGradient>
<linearGradient id="h45"><stop offset="0" stop-color="#b2c6ff"/><stop offset="0.0833" stop-color="#bec5ff"/><stop offset="0.167" stop-color="#cac5ff"/><stop offset="0.25" stop-color="#d7c4ff"/><stop offset="0.333" stop-color="#e4c3ff"/><stop offset="0.417" stop-color="#f1c3ff"/><stop offset="0.5" stop-color="#ffc2ff"/><stop offset="0.583" stop-color="#ffb7f2"/><stop offset="0.667" stop-color="#ffaee6"/><stop offset="0.75" stop-color="#ffa5db"/><stop offset="0.833" stop-color="#ff9cd1"/><stop offset="0.917" stop-color="#ff94c7"/><stop offset="1" stop-color="#ff8dbe"/></linearGradient>
<linearGradient id="h46"><stop offset="0" stop-color="#b2c4ff"/><stop offset="0.0833" stop-color="#bec3ff"/><stop offset="0.167" stop-color="#cbc2ff"/><stop offset="0.25" stop-color="#d7c2ff"/><stop offset="0.333" stop-color="#e4c1ff"/><stop offset="0.417" stop-color="#f1c0ff"/><stop offset="0.5" stop-color="#febfff"/><stop offset="0.583" stop-color="#ffb5f2"/><stop offset="0.667" stop-color="#fface6"/><stop offset="0.75" stop-color="#ffa3db"/><stop offset="0.833" stop-color="#ff9ad1"/><stop offset="0.917" stop-color="#ff93c7"/><stop offset="1" stop-color="#ff8bbe"/></linearGradient>
<linearGradient id="h47"><stop offset="0" stop-color="#b2c1ff"/><stop offset="0.0833" stop-color="#bec1ff"/><stop offset="0.167" stop-color="#cbc0ff"/><stop offset="0.25" stop-color="#d7bfff"/><stop offset="0.333" stop-color="#e4bfff"/><stop offset="0.417" stop-color="#f1beff"/><stop offset="0.5" stop-color="#febdff"/><stop offset="0.583" stop-color="#ffb3f3"/><stop offset="0.667" stop-color="#ffaae7"/><stop offset="0.75" stop-color="#ffa1db"/><stop offset="0.833" stop-color="#ff98d1"/><stop offset="0.917" stop-color="#ff91c8"/><stop offset="1" stop-color="#ff8abf"/></linearGradient>
</defs><g clip-path="url(#xyc)" shape-rendering="crispEdges">
<rect x="524" y="492" width="246" height="3" fill="url(#h0)"/>
<rect x="524" y="495" width="246" height="3" fill="url(#h1)"/>
<rect x="524" y="498" width="246" height="3" fill="url(#h2)"/>
<rect x="524" y="501" width="246" height="3" fill="url(#h3)"/>
<rect x="524" y="504" width="246" height="3" fill="url(#h4)"/>
<rect x="524" y="507" width="246" height="3" fill="url(#h5)"/>
<rect x="524" y="510" width="246" height="3" fill="url(#h6)"/>
<rect x="524" y="513" width="246" height="3" fill="url(#h7)"/>
<rect x="524" y="516" width="246" height="3" fill="url(#h8)"/>
<rect x="524" y="519" width="246" height="3" fill="url(#h9)"/>
<rect x="524" y="522" width="246" height="3" fill="url(#h10)"/>
<rect x="524" y="525" width="246" height="3" fill="url(#h11)"/>
<rect x="524" y="528" width="246" height="3" fill="url(#h12)"/>
<rect x="524" y="531" width="246" height="3" fill="url(#h13)"/>
<rect x="524" y="534" width="246" height="3" fill="url(#h14)"/>
<rect x="524" y="537" width="246" height="3" fill="url(#h15)"/>
<rect x="524" y="540" width="246" height="3" fill="url(#h16)"/>
<rect x="524" y="543" width="246" height="3" fill="url(#h17)"/>
<rect x="524" y="546" width="246" height="3" fill="url(#h18)"/>
<rect x="524" y="549" width="246" height="3" fill="url(#h19)"/>
<rect x="524" y="552" width="246" height="3" fill="url(#h20)"/>
<rect x="524" y="555" width="246" height="3" fill="url(#h21)"/>
<rect x="524" y="558" width="246" height="3" fill="url(#h22)"/>
<rect x="524" y="561" width="246" height="3" fill="url(#h23)"/>
<rect x="524" y="564" width="246" height="3" fill="url(#h24)"/>
<rect x="524" y="567" width="246" height="3" fill="url(#h25)"/>
<rect x="524" y="570" width="246" height="3" fill="url(#h26)"/>
<rect x="524" y="573" width="246" height="3" fill="url(#h27)"/>
<rect x="524" y="576" width="246" height="3" fill="url(#h28)"/>
<rect x="524" y="579" width="246" height="3" fill="url(#h29)"/>
<rect x="524" y="582" width="246" height="3" fill="url(#h30)"/>
<rect x="524" y="585" width="246" height="3" fill="url(#h31)"/>
<rect x="524" y="588" width="246" height="3" fill="url(#h32)"/>
<rect x="524" y="591" width="246" height="3" fill="url(#h33)"/>
<rect x="524" y="594" width="246" height="3" fill="url(#h34)"/>
<rect x="524" y="597" width="246" height="3" fill="url(#h35)"/>
<rect x="524" y="600" width="246" height="3" fill="url(#h36)"/>
<rect x="524" y="603" width="246" height="3" fill="url(#h37)"/>
<rect x="524" y="606" width="246" height="3" fill="url(#h38)"/>
<rect x="524" y="609" width="246" height="3" fill="url(#h39)"/>
<rect x="524" y="612" width="246" height="3" fill="url(#h40)"/>
<rect x="524" y="615" width="246" height="3" fill="url(#h41)"/>
<rect x="524" y="618" width="246" height="3" fill="url(#h42)"/>
<rect x="524" y="621" width="246" height="3" fill="url(#h43)"/>
<rect x="524" y="624" width="246" height="3" fill="url(#h44)"/>
<rect x="524" y="627" width="246" height="3" fill="url(#h45)"/>
<rect x="524" y="630" width="246" height="3" fill="url(#h46)"/>
<rect x="524" y="633" width="246" height="3" fill="url(#h47)"/>
</g></svg>
<svg class="abs" style="left:0;top:0" width="1267" height="713"><circle cx="640.3" cy="556.8" r="2.7" fill="#b8b8b8" stroke="#333" stroke-width=".8"/><rect x="641.6" y="557.3" width="10" height="10" fill="#fff" stroke="#111" stroke-width="1.3"/><circle cx="644.6" cy="554.8" r="2.6" fill="#fff" stroke="#333" stroke-width=".7"/></svg>
<div class="b" style="left:780.5px;top:480.5px;width:470.6px;height:163.8px;background:#262626;"></div>
<div class="b" style="left:782.0px;top:482.0px;width:467.6px;height:23.8px;background:linear-gradient(#343434 0%,#242424 40%,#080808 62%,#0c0c0c 100%);"></div>
<div class="b" style="left:782px;top:482px;width:457px;height:146.4px;overflow:hidden">
<div class="t c" style="left:95.0px;top:7.2px;font-size:11.8px;color:#f4f4f4">White</div>
<div class="t c" style="left:148.0px;top:7.2px;font-size:11.8px;color:#f4f4f4">Red</div>
<div class="t c" style="left:200.8px;top:7.2px;font-size:11.8px;color:#f4f4f4">Green</div>
<div class="t c" style="left:253.0px;top:7.2px;font-size:11.8px;color:#f4f4f4">Blue</div>
<div class="t c" style="left:305.6px;top:7.2px;font-size:11.8px;color:#f4f4f4">Cyan</div>
<div class="t c" style="left:359.0px;top:7.2px;font-size:11.8px;color:#f4f4f4">Magenta</div>
<div class="t c" style="left:412.4px;top:7.2px;font-size:11.8px;color:#f4f4f4">Yellow</div>
<div class="t" style="left:453.5px;top:7.2px;font-size:11.8px;color:#f4f4f4">1</div>
<div class="b" style="left:0;top:23.6px;width:460px;height:22.4px;background:#3e3e3e"></div>
<div class="t" style="left:10.2px;top:29.2px;font-size:11.7px;font-weight:bold;color:#f0f0f0">x: CIE31</div>
<div class="t" style="left:70.7px;top:29.2px;font-size:12px;color:#f0f0f0">0.3116</div>
<div class="t" style="left:126.2px;top:29.2px;font-size:12px;color:#f0f0f0">0.6618</div>
<div class="t" style="left:175.5px;top:29.2px;font-size:12px;color:#f0f0f0">0.2699</div>
<div class="t" style="left:231.8px;top:29.2px;font-size:12px;color:#f0f0f0">0.1488</div>
<div class="t" style="left:281.0px;top:29.2px;font-size:12px;color:#f0f0f0">0.2006</div>
<div class="t" style="left:336.7px;top:29.2px;font-size:12px;color:#f0f0f0">0.3347</div>
<div class="t" style="left:388.3px;top:29.2px;font-size:12px;color:#f0f0f0">0.4316</div>
<div class="t" style="left:444.3px;top:29.2px;font-size:12px;color:#f0f0f0">0.3</div>
<div class="b" style="left:0;top:46.0px;width:460px;height:22.4px;background:#707070"></div>
<div class="t" style="left:10.2px;top:51.6px;font-size:11.7px;font-weight:bold;color:#f0f0f0">y: CIE31</div>
<div class="t" style="left:70.7px;top:51.6px;font-size:12px;color:#f0f0f0">0.3312</div>
<div class="t" style="left:126.2px;top:51.6px;font-size:12px;color:#f0f0f0">0.3257</div>
<div class="t" style="left:175.5px;top:51.6px;font-size:12px;color:#f0f0f0">0.6733</div>
<div class="t" style="left:231.8px;top:51.6px;font-size:12px;color:#f0f0f0">0.0637</div>
<div class="t" style="left:281.0px;top:51.6px;font-size:12px;color:#f0f0f0">0.3312</div>
<div class="t" style="left:336.7px;top:51.6px;font-size:12px;color:#f0f0f0">0.1558</div>
<div class="t" style="left:388.3px;top:51.6px;font-size:12px;color:#f0f0f0">0.5314</div>
<div class="t" style="left:444.3px;top:51.6px;font-size:12px;color:#f0f0f0">0.3</div>
<div class="b" style="left:0;top:68.3px;width:460px;height:22.4px;background:#323232"></div>
<div class="t" style="left:10.2px;top:73.9px;font-size:11.7px;font-weight:bold;color:#f0f0f0">Y</div>
<div class="t" style="left:70.7px;top:73.9px;font-size:12px;color:#f0f0f0">149.2972</div>
<div class="t" style="left:126.2px;top:73.9px;font-size:12px;color:#f0f0f0">35.6945</div>
<div class="t" style="left:175.5px;top:73.9px;font-size:12px;color:#f0f0f0">101.9756</div>
<div class="t" style="left:231.8px;top:73.9px;font-size:12px;color:#f0f0f0">12.4183</div>
<div class="t" style="left:281.0px;top:73.9px;font-size:12px;color:#f0f0f0">113.7291</div>
<div class="t" style="left:336.7px;top:73.9px;font-size:12px;color:#f0f0f0">47.0478</div>
<div class="t" style="left:388.3px;top:73.9px;font-size:12px;color:#f0f0f0">137.1348</div>
<div class="t" style="left:444.3px;top:73.9px;font-size:12px;color:#f0f0f0">28</div>
<div class="b" style="left:0;top:90.7px;width:460px;height:22.4px;background:#787878"></div>
<div class="t" style="left:10.2px;top:96.2px;font-size:11.7px;font-weight:bold;color:#f0f0f0">Target Y</div>
<div class="t" style="left:70.7px;top:96.2px;font-size:12px;color:#f0f0f0">143.8056</div>
<div class="t" style="left:126.2px;top:96.2px;font-size:12px;color:#f0f0f0">30.5811</div>
<div class="t" style="left:175.5px;top:96.2px;font-size:12px;color:#f0f0f0">102.8438</div>
<div class="t" style="left:231.8px;top:96.2px;font-size:12px;color:#f0f0f0">10.3807</div>
<div class="t" style="left:281.0px;top:96.2px;font-size:12px;color:#f0f0f0">113.2245</div>
<div class="t" style="left:336.7px;top:96.2px;font-size:12px;color:#f0f0f0">40.9618</div>
<div class="t" style="left:388.3px;top:96.2px;font-size:12px;color:#f0f0f0">133.4249</div>
<div class="t" style="left:444.3px;top:96.2px;font-size:12px;color:#f0f0f0">28</div>
<div class="b" style="left:0;top:113.0px;width:460px;height:22.4px;background:#3a3a3a"></div>
<div class="t" style="left:10.2px;top:118.6px;font-size:11.7px;font-weight:bold;color:#f0f0f0">&#916;E 2000</div>
<div class="t" style="left:70.7px;top:118.6px;font-size:12px;color:#f0f0f0">2.1805</div>
<div class="t" style="left:126.2px;top:118.6px;font-size:12px;color:#f0f0f0">4.2245</div>
<div class="t" style="left:175.5px;top:118.6px;font-size:12px;color:#f0f0f0">4.3766</div>
<div class="t" style="left:231.8px;top:118.6px;font-size:12px;color:#f0f0f0">2.1196</div>
<div class="t" style="left:281.0px;top:118.6px;font-size:12px;color:#f0f0f0">4.3374</div>
<div class="t" style="left:336.7px;top:118.6px;font-size:12px;color:#f0f0f0">3.2858</div>
<div class="t" style="left:388.3px;top:118.6px;font-size:12px;color:#f0f0f0">3.9799</div>
<div class="t" style="left:444.3px;top:118.6px;font-size:12px;color:#f0f0f0">2.4</div>
<div class="b" style="left:0;top:135.3px;width:460px;height:22.4px;background:#6e6e6e"></div>
<div class="t" style="left:10.2px;top:140.9px;font-size:11.7px;font-weight:bold;color:#f0f0f0">&#916;E ITP</div>
<div class="t" style="left:70.7px;top:140.9px;font-size:12px;color:#f0f0f0">2.1016</div>
<div class="t" style="left:126.2px;top:140.9px;font-size:12px;color:#f0f0f0">25.2025</div>
<div class="t" style="left:175.5px;top:140.9px;font-size:12px;color:#f0f0f0">27.1609</div>
<div class="t" style="left:231.8px;top:140.9px;font-size:12px;color:#f0f0f0">10.4922</div>
<div class="t" style="left:281.0px;top:140.9px;font-size:12px;color:#f0f0f0">16.6925</div>
<div class="t" style="left:336.7px;top:140.9px;font-size:12px;color:#f0f0f0">17.9219</div>
<div class="t" style="left:388.3px;top:140.9px;font-size:12px;color:#f0f0f0">21.7298</div>
<div class="t" style="left:444.3px;top:140.9px;font-size:12px;color:#f0f0f0">1.</div>
</div>
<div class="b" style="left:1239.0px;top:482.0px;width:10.6px;height:23.6px;background:#222;"></div>
<div class="b" style="left:1239.0px;top:505.6px;width:10.6px;height:122.8px;background:#777;"></div>
<div class="b" style="left:1239.6px;top:521.4px;width:9.4px;height:75.0px;background:#5a5a5a;border-radius:3px"></div>
<div class="b" style="left:1239.4px;top:506.5px;width:9.8px;height:11.5px;background:#909090;border-radius:1px"></div>
<div class="b" style="left:1239.4px;top:614.0px;width:9.8px;height:11.5px;background:#909090;border-radius:1px"></div>
<div class="t " style="left:1241.0px;top:509.5px;font-size:6.5px;color:#3a3a3a;">&#9650;</div>
<div class="t " style="left:1241.0px;top:617.0px;font-size:6.5px;color:#3a3a3a;">&#9660;</div>
<div class="b" style="left:782.0px;top:628.4px;width:467.6px;height:14.4px;background:#565656;"></div>
<div class="b" style="left:793.0px;top:630.3px;width:396.5px;height:10.4px;background:#3a3a3a;border-radius:3px"></div>
<div class="b" style="left:783.0px;top:630.0px;width:9.0px;height:11.0px;background:#8a8a8a;border-radius:1px"></div>
<div class="b" style="left:1227.5px;top:630.0px;width:10.5px;height:11.0px;background:#949494;border-radius:1px"></div>
<div class="t " style="left:784.5px;top:632.0px;font-size:6.5px;color:#333;">&#9664;</div>
<div class="t " style="left:1230.0px;top:632.0px;font-size:6.5px;color:#333;">&#9654;</div>
<div class="b" style="left:1239.0px;top:628.4px;width:10.6px;height:14.4px;background:#2a2a2a;"></div>
<div class="b" style="left:65.5px;top:676.3px;width:1201.5px;height:20.4px;background:linear-gradient(#303030,#1e1e1e);"></div>
<div class="b" style="left:66.0px;top:676.3px;width:50.0px;height:20.0px;background:linear-gradient(#747474,#5c5c5c);border-left:1px solid #8a8a8a;border-right:1px solid #3a3a3a"></div>
<div class="b" style="left:68.2px;top:677.8px;width:45.6px;height:13.0px;background:#c4c4c4;border-radius:1.5px;border:1px solid #222"></div>
<div class="ts" style="left:91.0px;top:692.0px;font-size:13.6px;color:#222;transform:scale(.25) translateX(-50%);font-weight:bold">White</div>
<div class="b" style="left:116.0px;top:676.3px;width:50.0px;height:20.0px;background:linear-gradient(#747474,#5c5c5c);border-left:1px solid #8a8a8a;border-right:1px solid #3a3a3a"></div>
<div class="b" style="left:118.2px;top:677.8px;width:45.6px;height:13.0px;background:#c80000;border-radius:1.5px;border:1px solid #222"></div>
<div class="ts" style="left:141.0px;top:692.0px;font-size:13.6px;color:#222;transform:scale(.25) translateX(-50%);font-weight:bold">Red</div>
<div class="b" style="left:166.0px;top:676.3px;width:50.0px;height:20.0px;background:linear-gradient(#747474,#5c5c5c);border-left:1px solid #8a8a8a;border-right:1px solid #3a3a3a"></div>
<div class="b" style="left:168.2px;top:677.8px;width:45.6px;height:13.0px;background:#00c400;border-radius:1.5px;border:1px solid #222"></div>
<div class="ts" style="left:191.0px;top:692.0px;font-size:13.6px;color:#222;transform:scale(.25) translateX(-50%);font-weight:bold">Green</div>
<div class="b" style="left:216.0px;top:676.3px;width:50.0px;height:20.0px;background:linear-gradient(#747474,#5c5c5c);border-left:1px solid #8a8a8a;border-right:1px solid #3a3a3a"></div>
<div class="b" style="left:218.2px;top:677.8px;width:45.6px;height:13.0px;background:#0000c4;border-radius:1.5px;border:1px solid #222"></div>
<div class="ts" style="left:241.0px;top:692.0px;font-size:13.6px;color:#222;transform:scale(.25) translateX(-50%);font-weight:bold">Blue</div>
<div class="b" style="left:266.0px;top:676.3px;width:50.0px;height:20.0px;background:linear-gradient(#747474,#5c5c5c);border-left:1px solid #8a8a8a;border-right:1px solid #3a3a3a"></div>
<div class="b" style="left:268.2px;top:677.8px;width:45.6px;height:13.0px;background:#00c4c4;border-radius:1.5px;border:1px solid #222"></div>
<div class="ts" style="left:291.0px;top:692.0px;font-size:13.6px;color:#222;transform:scale(.25) translateX(-50%);font-weight:bold">Cyan</div>
<div class="b" style="left:316.0px;top:676.3px;width:50.0px;height:20.0px;background:linear-gradient(#747474,#5c5c5c);border-left:1px solid #8a8a8a;border-right:1px solid #3a3a3a"></div>
<div class="b" style="left:318.2px;top:677.8px;width:45.6px;height:13.0px;background:#c400c4;border-radius:1.5px;border:1px solid #222"></div>
<div class="ts" style="left:341.0px;top:692.0px;font-size:13.6px;color:#222;transform:scale(.25) translateX(-50%);font-weight:bold">Magenta</div>
<div class="b" style="left:366.0px;top:676.3px;width:50.0px;height:20.0px;background:linear-gradient(#747474,#5c5c5c);border-left:1px solid #8a8a8a;border-right:1px solid #3a3a3a"></div>
<div class="b" style="left:368.2px;top:677.8px;width:45.6px;height:13.0px;background:#c4c400;border-radius:1.5px;border:1px solid #222"></div>
<div class="ts" style="left:391.0px;top:692.0px;font-size:13.6px;color:#222;transform:scale(.25) translateX(-50%);font-weight:bold">Yellow</div>
<div class="b" style="left:416.0px;top:676.3px;width:50.0px;height:20.0px;background:#2a2a2a;"></div>
<div class="b" style="left:418.2px;top:677.8px;width:45.6px;height:13.0px;background:#ffffff;border-radius:1.5px;border:1px solid #eee"></div>
<div class="ts" style="left:441.0px;top:692.0px;font-size:13.6px;color:#fff;transform:scale(.25) translateX(-50%);font-weight:bold">100W</div>
<div class="b" style="left:1160.0px;top:676.8px;width:107.0px;height:19.9px;background:#5a5a5a;"></div>
<div class="b" style="left:1160.4px;top:677.0px;width:15.6px;height:8.6px;background:linear-gradient(#9a9a9a,#7c7c7c);"></div>
<div class="b" style="left:1160.4px;top:686.0px;width:15.6px;height:10.3px;background:linear-gradient(#909090,#6a6a6a);"></div>
<div class="ts" style="left:1166.0px;top:677.2px;font-size:18.0px;color:#555;transform:scale(.25);">&#9650;</div>
<div class="b" style="left:1163.6px;top:687.6px;width:9.0px;height:7.6px;background:#0c0c0c;border:1.6px solid #dcdcdc"></div>
<div class="b" style="left:1177.0px;top:677.0px;width:44.0px;height:8.8px;background:linear-gradient(#a2a2a2,#7c7c7c);"></div>
<div class="b" style="left:1222.0px;top:677.0px;width:14.2px;height:8.8px;background:linear-gradient(#a2a2a2,#7c7c7c);"></div>
<div class="b" style="left:1237.2px;top:677.0px;width:14.0px;height:8.8px;background:linear-gradient(#a2a2a2,#7c7c7c);"></div>
<div class="b" style="left:1251.6px;top:676.6px;width:15.4px;height:9.6px;background:#242424;"></div>
<div class="b" style="left:1177.0px;top:686.4px;width:44.0px;height:9.9px;background:linear-gradient(#989898,#747474);"></div>
<div class="b" style="left:1222.0px;top:686.4px;width:45.0px;height:9.9px;background:linear-gradient(#989898,#747474);"></div>
<div class="t " style="left:1195.6px;top:687.9px;font-size:7.4px;color:#1a1a1a;">Back</div>
<div class="t " style="left:1231.0px;top:687.9px;font-size:7.4px;color:#1a1a1a;">Next</div>
<div class="ts" style="left:1183.0px;top:678.6px;font-size:20.0px;color:#2a2a2a;transform:scale(.25);">&#9664;</div>
<div class="ts" style="left:1198.0px;top:678.6px;font-size:20.0px;color:#2a2a2a;transform:scale(.25);">&#9654;</div>
<div class="ts" style="left:1211.0px;top:678.2px;font-size:24.0px;color:#222;transform:scale(.25);font-weight:bold">H</div>
<div class="ts" style="left:1226.5px;top:678.0px;font-size:24.0px;color:#555;transform:scale(.25);">&#8962;</div>
<div class="ts" style="left:1241.5px;top:678.0px;font-size:24.0px;color:#3a3a3a;transform:scale(.25);">&#8635;</div>
<div class="t " style="left:1252.4px;top:675.4px;font-size:10.5px;color:#d01414;">&#10033;</div>
<div class="b" style="left:1184.5px;top:688.8px;width:5px;height:5px;border-radius:50%;background:#6a6a6a;border:.8px solid #a8a8a8"></div>
<div class="b" style="left:1255.5px;top:688.8px;width:5px;height:5px;border-radius:50%;background:#868686;border:.8px solid #a8a8a8"></div>
<div class="b" style="left:0.0px;top:696.5px;width:1267.0px;height:16.5px;background:linear-gradient(90deg,#e6eef8 0%,#e4ebfa 30%,#e2e2fa 50%,#e8eaf8 70%,#e6eef6 100%);"></div>
<div class="b" style="left:608.2px;top:701.3px;width:7.6px;height:7.5px;background:linear-gradient(135deg,#38a8f0,#1478d0);border-radius:1px"></div>
<div class="b" style="left:623.0px;top:702.3px;width:7.2px;height:6.2px;background:linear-gradient(#f8d050,#e8a818);border-radius:1px"></div>
<div class="b" style="left:623.0px;top:701.3px;width:3.6px;height:2.0px;background:#e0a010;border-radius:1px 1px 0 0"></div>
<div class="b" style="left:637px;top:701px;width:8px;height:8px;border-radius:50%;background:conic-gradient(from 200deg,#1458b8,#1a78d8 35%,#38c8a8 60%,#40d088 75%,#1458b8)"></div>
<div class="b" style="left:641.0px;top:703.8px;width:4.0px;height:2.6px;background:#e4e8f8;border-radius:1px"></div>
<div class="b" style="left:649.8px;top:699.0px;width:12.0px;height:12.5px;background:rgba(255,255,255,.55);border-radius:2px"></div>
<div class="t " style="left:652.2px;top:700.8px;font-size:8.5px;color:#58a838;">&#9670;</div>
<div class="b" style="left:653.5px;top:710.0px;width:4.5px;height:0.9px;background:#555;border-radius:1px"></div>
<div class="t " style="left:1180.5px;top:702.6px;font-size:7px;color:#333;">&#8963;</div>
<div class="b" style="left:1190.0px;top:701.6px;width:7.2px;height:7.6px;background:#f8cce2;border-radius:2px"></div>
<div class="b" style="left:1191.6px;top:703.4px;width:4.0px;height:3.8px;background:#c81478;border-radius:1px"></div>
<div class="ts" style="left:1202.0px;top:704.2px;font-size:16.8px;color:#222;transform:scale(.25);font-weight:bold">ENG</div>
<div class="b" style="left:1216.0px;top:702.5px;width:5.6px;height:4.6px;background:#eee;border:1px solid #222"></div>
<div class="ts" style="left:1224.2px;top:703.4px;font-size:18.4px;color:#555;transform:scale(.25);">&#10005;</div>
<div class="ts" style="left:1237.0px;top:701.3px;font-size:16.0px;color:#333;transform:scale(.25);">14:13</div>
<div class="ts" style="left:1234.0px;top:705.8px;font-size:15.2px;color:#333;transform:scale(.25);">11/26/2024</div>
<div class="ts" style="left:1255.0px;top:702.6px;font-size:24.0px;color:#333;transform:scale(.25);">&#9633;</div>
<div class="b" style="left:1209.2px;top:691.8px;width:6.8px;height:6.8px;border-radius:50%;border:1.3px solid rgba(255,255,255,.55)"></div>
<div class="t " style="left:1218.0px;top:691.2px;font-size:8px;color:rgba(255,255,255,.55);letter-spacing:-.05px">PConline</div>
</body></html>
